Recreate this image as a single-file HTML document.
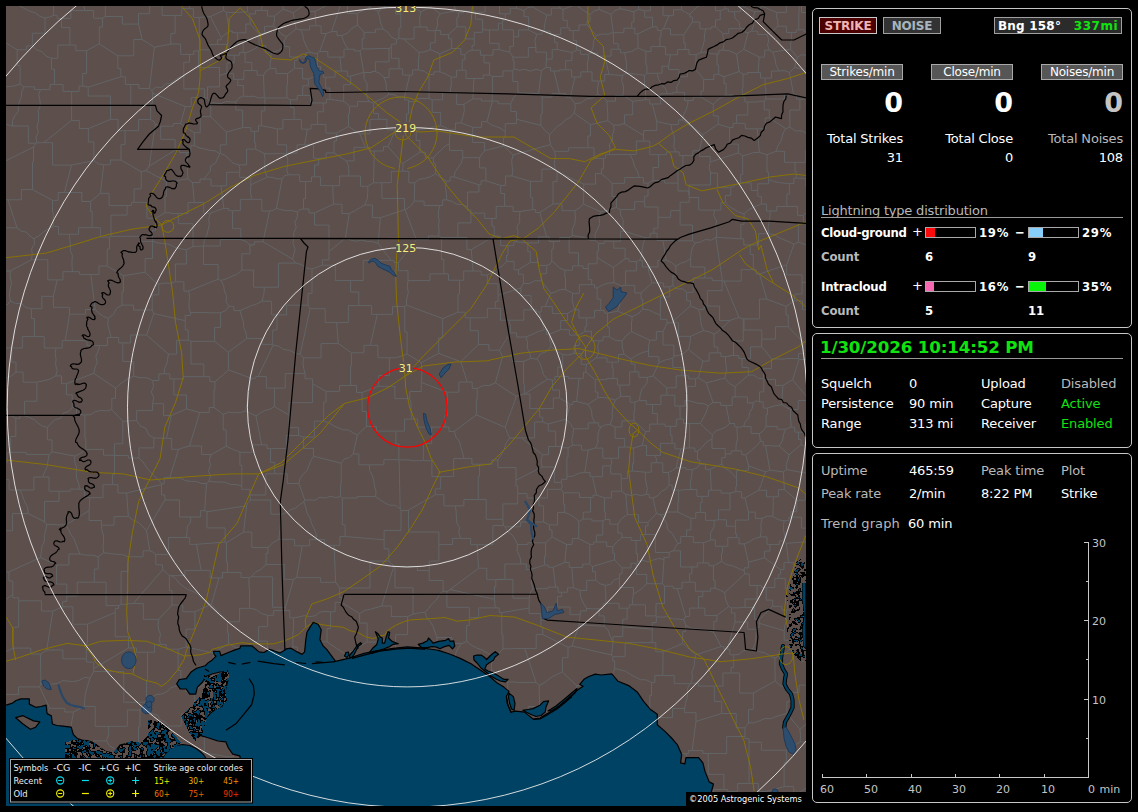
<!DOCTYPE html>
<html><head><meta charset="utf-8"><title>Lightning</title>
<style>
html,body{margin:0;padding:0;background:#000;}
body{width:1138px;height:812px;position:relative;overflow:hidden;font-family:"DejaVu Sans","Liberation Sans",sans-serif;font-size:13px;color:#fff;}
#map{position:absolute;left:6px;top:6px;width:800px;height:800px;overflow:hidden;background:#5d4f4b;}
#map svg{position:absolute;left:0;top:0;}
.panel{position:absolute;left:812px;width:318px;border:1px solid #c6c6c6;border-radius:5px;background:#000;}
.t{position:absolute;white-space:nowrap;line-height:16px;height:16px;letter-spacing:-0.15px;}
.g{color:#b9b9b9;}
.b{font-weight:bold;font-family:"DejaVu Sans Condensed","DejaVu Sans",sans-serif;}
.r{text-align:right;}
.bw{font-weight:bold;font-family:"DejaVu Sans",sans-serif;}
.btn{letter-spacing:-0.2px;position:absolute;box-sizing:border-box;border:1px solid #a9a9a9;background:#565656;color:#fff;text-align:center;font-size:13px;line-height:14px;height:16px;}
.big{position:absolute;font-weight:bold;font-size:27px;line-height:30px;text-align:right;width:82px;}
.bar{position:absolute;box-sizing:border-box;width:51px;height:11px;border:1px solid #a9a9a9;background:#000;}
.bar i{display:block;height:9px;}
</style></head><body>
<div id="map">
<svg width="800" height="800" viewBox="6 6 800 800">
<g id="counties" fill="none" stroke="#62666a" stroke-width="0.9"><path d="M0.7 41.9L6.8 43.4L11.9 46.7L17.2 49.8M5.1 86.7L10.2 86.6L15.2 85.6L20.1 84M17.2 49.8L17.2 65.5L20.1 65.5L20.1 84M32.3 45.8L26.7 45.8L26.7 49.8L17.2 49.8M32.3 45.8L32.3 33.2L45 33.2L45 18M45 18L39.7 16.2L35.3 12.7L29.7 11.3L24.8 8.7L19.8 6.2L15.5 2.4L10.4 0.3M820.6 753.6L808.6 753.6L808.6 742L800.2 742M823.6 710.2L799.9 729.2M800.2 742L800.5 735.6L799.9 729.2M51.5 58.3L51.5 69.2L54.5 69.2L54.5 84.4M51.5 58.3L46 56.2L42.1 51.7L36.6 49.7L32.3 45.8M54.5 84.4L50 84.4L50 89.6L40.5 89.6M20.1 84L24 86.8M24 86.8L34.3 86.8L34.3 89.6L40.5 89.6M226.3 132.1L242.6 127.6M226.3 132.1L210.8 116.7M242.6 127.6L242.6 110.1L235.8 110.1L235.8 102M235.8 102L230.7 101.9L225.7 101.6L220.8 103.7L215.7 103.2L210.7 102.5M210.7 102.5L210.7 110.8L210.8 110.8L210.8 116.7M220.2 153.5L220.2 144.9L226.3 144.9L226.3 132.1M220.2 153.5L225.4 155.4L229.2 159.5L233.3 163.2L238.6 164.9M254.6 131.3L250.8 131.3L250.8 127.6L242.6 127.6M254.6 131.3L254.6 143L255.7 143L255.7 149.1M255.7 149.1L246.6 149.1L246.6 164.9L238.6 164.9M314.5 212.9L309 212.9L309 209L303.5 209M314.5 212.9L333.5 204.2M332.7 185.7L333.5 204.2M332.7 185.7L320.4 185.7L320.4 176.8L314.5 176.8M314.5 176.8L311.5 176.8L311.5 181.6L305.5 181.6M305.5 181.6L305.5 198.8L303.5 198.8L303.5 209M194.3 132.7L200.2 132.7L200.2 116.7L210.8 116.7M194.3 132.7L194.3 137L194.4 137L194.4 145.7M220.2 153.5L219.7 153.6M194.4 145.7L199.2 147.9L204.5 149L209.6 150.4L215 150.8L219.7 153.6M175.1 150.1L149.2 166.2M175.1 150.1L179.5 150.1L179.5 152.6L186.7 152.6M166.3 181.4L171.7 180.6L177.2 181.1L182.4 179.4L187.9 179M166.3 181.4L161.5 178.3L156.1 176.1L151.2 173.2L146 170.7M146 170.7L149.2 166.2M186.7 152.6L187.9 179M69.3 234.2L78.6 234.2L78.6 227.7L92.1 227.7M69.3 234.2L58.5 234.2L58.5 226.5L53.2 226.5M53.2 226.5L53.2 212.2L52.5 212.2L52.5 200.3M52.5 200.3L58.2 200.3L58.2 192.5L64.5 192.5M64.5 192.5L81.9 192.5L81.9 201.5L90.6 201.5M90.6 201.5L90.6 211.5L92.1 211.5L92.1 227.7M72.5 271.7L72.1 266.4L72 261L72.4 255.6L70.3 250.3L70.4 244.9L69.8 239.6L69.3 234.2M72.5 271.7L79.4 271.7L79.4 274.4L90.9 274.4M90.9 274.4L99 274.4L99 266.1L107.2 266.1M107.2 266.1L107.2 249L109.5 249L109.5 237.1M92.1 227.7L100.3 227.7L100.3 237.1L109.5 237.1M107.2 266.1L123.4 275.7M123.4 275.7L145.1 272.2M152.5 241.3L139.3 241.3L139.3 236.3L111 236.3M152.5 241.3L152.5 258.6L145.1 258.6L145.1 272.2M109.5 237.1L111 236.3M165 212.8L170.9 212.8L170.9 213.4L178.3 213.4M165 212.8L155.6 218.2M178.3 213.4L178.3 223.7L193 223.7L193 246.6M152.6 241.2L152.6 230.2L155.6 230.2L155.6 218.2M152.6 241.2L158.2 243L164 243.5L169.8 244.5L175 247.6L180.7 248.8L186.4 249.8M186.4 249.8L193 246.6M-7.2 241L1.3 241L1.3 227.8L17 227.8M-3.7 264.2L5.4 264.2L5.4 271L10.2 271M10.2 271L31.3 259.7M31.3 259.7L32.4 254.5L31.6 249.1L34.4 244.1L34 238.7M34 238.7L29.8 236L26.3 232.1L20.9 231L17 227.8M57.2 279.9L47.8 279.9L47.8 259.7L31.3 259.7M57.2 279.9L53.4 296.3M53.4 296.3L41.9 296.3L41.9 308.7L31.4 308.7M31.4 308.7L25.9 307.5L21.4 303.6L15.5 303.4L10.5 301M10.5 301L9.3 295L10.1 289L11.5 283L10.1 277L10.2 271M72.5 271.7L63 271.7L63 279.9L57.2 279.9M53.2 226.5L48.1 229.1L43.3 232.2L38.9 235.8L34 238.7M-3.3 384.6L1.3 381.2L6.2 378.2L11.5 375.8L16 372.1M16 372.1L16 362.1L11.8 362.1L11.8 348M11.8 348L0.8 348L0.8 339.3L-6.3 339.3M-19.8 422.7L8.6 415.3M8.6 415.3L-3.3 384.6M31.4 308.7L31.4 318.6L34.4 318.6L34.4 336.6M10.5 301L7.7 304.4L3.3 305.4M34.4 336.6L22.3 336.6L22.3 348L11.8 348M24 86.8L21.8 91.4L21.5 96.7L19.4 101.4L18.5 106.4L18.1 111.7L14.7 116L12.6 120.7L12.4 126M-11 121.3L-5.3 123.3L0.6 124L6.7 124.3L12.4 126M40.5 89.6L38.7 94.8L39.9 100.2L40.4 105.6L38.1 110.8L38.7 116.2L38.4 121.5L37 126.8L38.3 132.2L36 137.4L36.9 142.8M36.9 142.8L35.7 143.2M12.4 126L28.3 126L28.3 143.2L35.7 143.2M750.2 245L750.2 254.6L753.3 254.6L753.3 269.7M750.2 245L758.6 245L758.6 233.7L768.7 233.7M786.7 264.7L759.5 274M786.7 264.7L794 244.3M759.5 274L756.2 274L756.2 269.7L753.3 269.7M768.7 233.7L774.3 234.6L778.9 237.6L784 239.8L789 241.9L794 244.3M813.5 247.6L798.3 242.1M802.1 282.3L817.3 282.3L817.3 274.1L828.3 274.1M802.1 282.3L802.1 274.8L786.7 274.8L786.7 264.7M798.3 242.1L794 244.3M467.6 207L467.6 192L478.9 192L478.9 184.8M467.6 207L462.6 204.6L456.9 204.2L452 201.4L446.7 199.9M478.9 184.8L454 176.9M446.7 199.9L446.3 193.6L445.5 187.3L446.4 181.1M454 176.9L450.2 176.9L450.2 181.1L446.4 181.1M479.5 157.7L479.5 167.9L485.9 167.9L485.9 180.8M479.5 157.7L472.9 157.7L472.9 157.7L462.8 157.7M485.9 180.8L481 180.8L481 184.8L478.9 184.8M462.8 157.7L461.2 162.8L458.4 167.3L455.3 171.7L454 176.9M439.6 205.5L442.7 205.5L442.7 199.9L446.7 199.9M439.6 205.5L424.1 205.5L424.1 201.1L414.2 201.1M414.2 201.1L414.7 182.8M414.7 182.8L419.3 179.2L425.1 178.4L430.6 176.6L435.6 173.8M435.6 173.8L446.4 181.1M194.3 132.7L189.5 129.9L185 126.8L180.6 123.5M175.1 150.1L175.1 139.3L160.7 139.3L160.7 126.2M194.4 145.7L190.8 145.7L190.8 152.6L186.7 152.6M180.6 123.5L173.2 123.5L173.2 126.2L160.7 126.2M149.2 166.2L155.4 124.2M160.7 126.2L155.4 124.2M54.5 84.4L63 84.4L63 91.4L71.7 91.4M36.9 142.8L40.9 142.8L40.9 142.7L43.8 142.7M43.8 142.7L71.6 120.4M71.6 120.4L71.6 105.2L71.7 105.2L71.7 91.4M51.5 58.3L57.8 58.3L57.8 45L69.9 45M69.9 45L75.9 45L75.9 50.7L86.6 50.7M86.6 50.7L86.6 73.4L82.7 73.4L82.7 86.1M71.7 91.4L79.1 91.4L79.1 86.1L82.7 86.1M86.6 50.7L99.3 43.8M99.3 43.8L117.8 55.8M117.8 55.8L117.8 68.4L120.8 68.4L120.8 76.8M120.8 76.8L88.2 87.1M88.2 87.1L82.7 86.1M43.8 142.7L52.6 142.7L52.6 165.1L71.5 165.1M71.5 165.1L93.9 160.6M71.6 120.4L79.3 120.4L79.3 128.6L88.3 128.6M93.9 160.6L93.9 142L88.3 142L88.3 128.6M286 154L287.8 159.1L287.7 164.4L286.7 169.7L288.3 174.8M286 154L280.6 153.3L275.2 153.8L269.8 153.8L264.3 153.6M264.3 153.6L265.1 159.5L264.5 165.5L265.1 171.4L267.2 177.1M267.2 177.1L272.3 177.3L277.2 178.9L282.2 178.7M282.2 178.7L284.6 175.7L288.3 174.8M305.5 181.6L299.7 181.6L299.7 174.8L288.3 174.8M276.4 208.5L282.2 178.7M276.4 208.5L281.6 209.8L286.8 210.7L292.2 210.6L297.4 211.9M297.4 211.9L299.9 209.5L303.5 209M286.7 153.1L297.1 153.1L297.1 144.8L304.6 144.8M286.7 153.1L286 154M314.5 176.8L314.5 165L318.7 165L318.7 158.2M318.7 158.2L313.5 158.2L313.5 144.8L304.6 144.8M269.6 211L261.8 211L261.8 199.3L251.6 199.3M269.6 211L273.2 210.3L276.4 208.5M267.2 177.1L250.8 184.9M251.6 199.3L250.5 192.1L250.8 184.9M255.7 149.1L264.3 153.6M238.6 164.9L239.9 168.4L239.7 172.2M239.7 172.2L239.7 177.4L250.8 177.4L250.8 184.9M314.5 212.9L314.5 225.1L329 225.1L329 251.6M333.5 204.2L341.9 204.2L341.9 213.5L349.3 213.5M329 251.6L345.4 238.1M345.4 238.1L349.3 213.5M332.7 185.7L339.6 185.7L339.6 176L348.7 176M367.8 186.3L360.6 186.3L360.6 176L348.7 176M367.8 186.3L367.8 192.7L367.2 199L364.7 205M349.3 213.5L354.6 210.9L359.6 207.8L364.7 205M442.7 318.6L442.7 337.7L438.7 337.7L438.7 353.4M442.7 318.6L406.3 305M438.7 353.4L421.2 362.6M406.3 305L404.8 306.6M404.8 306.6L404.8 331.9L407.1 331.9L407.1 354M421.2 362.6L407.1 354M550.3 144.6L513.2 155M550.3 144.6L554.7 151.3M530.4 181.3L541.9 181.3L541.9 169.1L555.3 169.1M530.4 181.3L512 176M513.2 155L511.7 160.2L512 165.5L512.9 170.8L512 176M554.7 151.3L555.4 157.2L554.3 163.2L555.3 169.1M88.5 812.8L89.6 800M89.6 800L76.6 800L76.6 776.7L48.7 776.7M41.9 812.4L41.9 802.5L38.7 802.5L38.7 794.8M38.7 794.8L48.7 776.7M740.9 238.8L743.8 238.8L743.8 245L750.2 245M740.9 238.8L716.2 237.3M724 281.1L722.4 280.7M724 281.1L741.2 281.1L741.2 269.7L753.3 269.7M722.4 280.7L715.9 237.5M716.2 237.3L715.9 237.5M704.8 278L704.8 267L690.7 267L690.7 258.4M704.8 278L712.2 278L712.2 280.7L722.1 280.7M722.1 280.7L722.4 280.7M690.7 258.4L691.2 252.9L692.3 247.7L695.3 242.9M715.9 237.5L711.1 240.2L705.4 239.5L700.5 242L695.3 242.9M100.4 193.3L109.1 193.3L109.1 205.4L127.1 205.4M100.4 193.3L103.7 164.8M103.7 164.8L110.3 164.8L110.3 160L121 160M121 160L141.2 171.8M141.2 171.8L141.2 188.9L134.1 188.9L134.1 202.3M134.1 202.3L131.6 202.3L131.6 205.4L127.1 205.4M90.6 201.5L100.4 193.3M111 236.3L111 215.1L127.1 215.1L127.1 205.4M64.5 192.5L71.5 165.1M93.9 160.6L98.3 163.9L103.7 164.8M165 212.8L165 196.6L166.3 196.6L166.3 181.4M155.6 218.2L146.9 218.2L146.9 202.3L134.1 202.3M146 170.7L141.2 171.8M152.6 241.2L152.5 241.3M145.1 272.2L149.4 276.5L153.7 280.7L158.8 284.2M186.4 249.8L186.4 264L175.4 264L175.4 281.8M158.8 284.2L164.2 283L169.9 283.3L175.4 281.8M8.6 415.3L12.4 416.3L15.8 418.3M36.9 382.2L23.1 382.2L23.1 372.1L16 372.1M36.9 382.2L36.9 401.2L24.6 401.2L24.6 415.8M15.8 418.3L19.9 418.3L19.9 415.8L24.6 415.8M99.3 43.8L99.3 27.1L102.4 27.1L102.4 18.2M142.1 39.5L133.8 39.5L133.8 55.8L117.8 55.8M142.1 39.5L138.5 24.1M102.4 18.2L105.3 16.5M138.5 24.1L122.4 24.1L122.4 16.5L105.3 16.5M84.6 10.5L81.1 -21M84.6 10.5L70.9 10.5L70.9 18.4L61.6 18.4M53.6 15.3L53.6 -8.1L54.7 -8.1L54.7 -18.5M53.6 15.3L57.1 15.3L57.1 18.4L61.6 18.4M102.4 18.2L93.6 18.2L93.6 10.5L84.6 10.5M105.3 16.5L105.3 -0.3L118.1 -0.3L118.1 -15.6M69.9 45L69.9 27.5L61.6 27.5L61.6 18.4M45 18L49.5 17.1L53.6 15.3M743.2 318.9L743.2 341L733.5 341L733.5 355.5M743.2 318.9L744 318.9M744 318.9L744 330L761.8 330L761.8 339.1M742 358.4L738.7 358.4L738.7 355.5L733.5 355.5M742 358.4L750.5 358.4L750.5 346.8L761.5 346.8M761.5 346.8L761.8 339.1M766.8 299.1L759.4 299.1L759.4 318.9L744 318.9M766.8 299.1L759.5 274M739 317.6L724 281.1M739 317.6L743.2 318.9M786 306.4L786 315.1L788.2 315.1L788.2 326.7M786 306.4L794.7 300.7M794.7 300.7L802.5 300.7L802.5 309.7L818.4 309.7M788.2 326.7L803.2 342.2M803.2 342.2L807.6 342.2L807.6 336.4L817.2 336.4M766.8 299.1L786 306.4M761.8 339.1L775.4 339.1L775.4 326.7L788.2 326.7M802.1 282.3L802.1 294.1L794.7 294.1L794.7 300.7M739 317.6L734.3 318.9L729.7 320.6M722.1 280.7L722.1 290.7L707.3 290.7L707.3 306.1M729.7 320.6L719.6 320.6L719.6 306.1L707.3 306.1M748.3 375.1L748.3 367.4L742 367.4L742 358.4M748.3 375.1L753.7 375.1L758.3 378.3L763.5 378.8M761.5 346.8L765.1 350.6L768.3 354.8L771.5 359M763.5 378.8L763.5 368.6L771.5 368.6L771.5 359M803.2 342.2L803.2 353.4L798.6 353.4L798.6 358.6M771.5 359L785.7 359L785.7 358.6L798.6 358.6M786.8 206.4L797.6 206.4L797.6 215.3L803.3 215.3M786.8 206.4L786.8 194.2L789.3 194.2L789.3 183.6M817.6 186.4L805.8 186.4L805.8 178.2L796.2 178.2M811.8 211L807 212.1L803.3 215.3M796.2 178.2L793.9 178.2L793.9 183.6L789.3 183.6M770.3 211L776.7 211L776.7 206.4L786.8 206.4M770.3 211L769.9 216.7L769 222.3L768 228L768.7 233.7M798.3 242.1L798.3 223.8L803.3 223.8L803.3 215.3M740.9 238.8L740.9 224.3L744.1 224.3L744.1 213.8M770.3 211L766.4 211L766.4 204L761.3 204M744.1 213.8L749.2 209.4L755.1 206.5L761.3 204M817.5 778.7L812.7 781.7L809.3 786.4L804.5 789.2L799.8 792.2M799.8 792.2L799.8 810.4L808.5 810.4L808.5 818.7M818.6 685.1L818.6 661.6L802.1 661.6L802.1 651.2M819.4 641.2L809.3 641.2L809.3 651.2L802.1 651.2M513.2 155L503.4 145.9M479.5 157.7L484.6 150.7M512 176L505.5 176L505.5 185.5L500.7 185.5M500.7 185.5L485.9 180.8M484.6 150.7L503.4 145.9M462.8 157.7L462.8 150.4L449.4 150.4L449.4 143.9M435.6 173.8L435.6 163.7L433.4 163.7L433.4 157.9M433.4 157.9L436.9 153.9L440.9 150.4L444.5 146.4L449.4 143.9M207.5 98.3L204.6 97.5M207.5 98.3L210.7 102.5M180.6 123.5L185.3 106.6M204.6 97.5L191.2 97.5L191.2 106.6L185.3 106.6M138.5 24.1L138.5 13.7L149.7 13.7L149.7 5.8M348.7 176L348.8 170.8L348.3 165.8L346.3 160.9M318.7 158.2L326.2 158.2L326.2 152.9L334 152.9M346.3 160.9L334 152.9M304.6 144.8L307.4 129.1M334 152.9L334 141L336.4 141L336.4 133.1M336.4 133.1L325.9 133.1L325.9 124.4L317.4 124.4M307.4 129.1L311.1 129.1L311.1 124.4L317.4 124.4M227 73.3L233.7 73.3L233.7 79.3L237.8 79.3M227 73.3L219.5 75.5M207.5 98.3L207.5 86.9L219.5 86.9L219.5 75.5M235.8 102L238.7 98L243.3 96.1M243.3 96.1L243.3 85.4L237.8 85.4L237.8 79.3M210.3 213.2L223.8 208.4M210.3 213.2L203.7 213.2L203.7 202.5L194.3 202.5M223.8 208.4L221 185.9M221 185.9L211 185.9L211 179.1L203.8 179.1M194.3 202.5L192.5 182.5M203.8 179.1L200 179.1L200 182.5L192.5 182.5M203.6 246L220.2 246L220.2 239.6L240.8 239.6M203.6 246L204.3 240.5L206.8 235.3L208.1 229.8L209.3 224.4L208.7 218.6L210.3 213.2M240.8 239.6L240.8 228.7L232.6 228.7L232.6 210.7M232.6 210.7L228.7 210.7L228.7 208.4L223.8 208.4M178.3 213.4L188.1 213.4L188.1 202.5L194.3 202.5M203.6 246L203.4 246.2M203.4 246.2L196.5 246.2L196.5 246.6L193 246.6M232.6 210.7L240.3 210.7L240.3 199.3L251.6 199.3M239.7 172.2L226.7 172.2L226.7 185.9L221 185.9M219.7 153.6L217.6 158.2L215.6 162.9L210.9 165.8L210.1 171.3L206.7 175.1L203.8 179.1M187.9 179L192.5 182.5M380.4 217.7L378.1 243.5M380.4 217.7L404.6 209.7M405.1 209.8L404.6 209.7M405.1 209.8L416.4 239.7M416.4 239.7L398.5 262.6M378.1 243.5L391.1 260.3M391.1 260.3L394.1 260.3L394.1 262.6L398.5 262.6M345.4 238.1L350.7 240.1L356.1 241.2L361.9 240.1L367.3 241.4L372.8 241.7L378.1 243.5M364.7 205L372.4 205L372.4 217.7L380.4 217.7M381.9 182.7L377.7 182.9L373.5 182.7M381.9 182.7L381.9 198.4L404.6 198.4L404.6 209.7M367.8 186.3L373.5 182.7M414.2 201.1L410.5 206.3L405.1 209.8M414.7 182.8L408.8 182.8L408.8 171.2L402.5 171.2M402.5 171.2L391.3 171.2L391.3 182.7L381.9 182.7M439.6 205.5L438.6 210.6L438.4 215.7L439.2 220.8L438.6 225.9L439.1 231L438.6 236M438.6 236L428.5 236L428.5 239.7L416.4 239.7M329 251.6L329 259.9L322.3 259.9L322.3 265.2M322.3 265.2L335.3 265.2L335.3 280.5L350.6 280.5M350.6 280.5L363.2 280.5L363.2 260.3L391.1 260.3M438.6 236L441.5 237.5M408 280.6L408 270.7L398.5 270.7L398.5 262.6M408 280.6L429.9 280.6L429.9 273.9L443.8 273.9M441.5 237.5L441.5 259.5L443.8 259.5L443.8 273.9M442.7 318.6L458 312.2M408 280.6L407.3 286.7L408.3 292.9L406.7 298.9L406.3 305M458 312.2L458 294.2L459.5 294.2L459.5 280.2M443.8 273.9L448.5 273.9L448.5 280.2L459.5 280.2M350.6 280.5L350.6 292L358.8 292L358.8 305.6M404.8 306.6L392.5 306.6L392.5 314.3L377.3 314.3M358.8 305.6L371.6 305.6L371.6 314.3L377.3 314.3M460.8 361.7L438.7 353.4M460.8 361.7L467.2 382.1M467.2 382.1L458.9 382.1L458.9 392.2L447.2 392.2M421.2 362.6L421.8 369.2L421.9 375.8L421.2 382.4M447.2 392.2L421.2 382.4M190.3 312.6L189 307.3L189.1 301.9L189.7 296.4L188.6 291.1M190.3 312.6L208.4 312.6L208.4 312.8L220.6 312.8M188.6 291.1L218.1 279.2M220.6 312.8L225.6 310.6L228.9 306.3M228.9 306.3L226 301.6L226.5 295.8L224.4 290.8L223.6 285.4L220.9 280.5M218.1 279.2L220.9 280.5M203.4 246.2L203.4 264.5L218.1 264.5L218.1 279.2M175.4 281.8L183.9 281.8L183.9 291.1L188.6 291.1M241.9 270.1L253.6 270.1L253.6 287.2L264.4 287.2M241.9 270.1L241.9 253.8L250 253.8L250 244.9M263 241.8L254.4 241.8L254.4 244.9L250 244.9M263 241.8L292.6 259.1M264.4 287.2L278.5 287.2L278.5 263.1L295.8 263.1M292.6 259.1L295.8 263.1M240.8 239.6L245.9 241.4L250 244.9M220.9 280.5L226.6 278.8L231.9 276.3L237.3 274L241.9 270.1M269.6 211L263 241.8M297.4 211.9L297.3 217.2L294.9 222.3L296.2 227.7L293.8 232.8L293.9 238.1L292.9 243.3L295.1 248.8L293.9 254L292.6 259.1M322.3 265.2L312 269.1M312 269.1L306.3 268L301.4 264.5L295.8 263.1M407.1 354L401.3 356.1L395.6 357.7L389.4 357.8M377.3 314.3L370.4 345.3M389.4 357.8L377.9 357.8L377.9 345.3L370.4 345.3M460.8 361.7L478.3 344.5M458 312.2L465.2 312.2L465.2 317.8L470.2 317.8M478.3 344.5L478.3 330.7L470.2 330.7L470.2 317.8M664 559.4L658.6 558.5L653.4 560L648.2 561.8L642.7 560.4L637.5 561.7M664 559.4L662.4 583.8M646.7 583.7L662.4 583.8M646.7 583.7L646.7 574.4L636.3 574.4L636.3 563.3M636.3 563.3L637.5 561.7M619.4 578.3L619.4 573.8L622.1 573.8L622.1 567.9M619.4 578.3L619.4 587.5L633.4 587.5L633.4 594.1M622.1 567.9L631 567.9L631 563.3L636.3 563.3M633.4 594.1L638.2 591.1L642.7 587.8L646.7 583.7M595 422.9L588.2 422.9L588.2 428.8L573.5 428.8M595 422.9L598.7 422.9L598.7 426.8L601.2 426.8M588.3 450.1L595.1 448.1M588.3 450.1L581.6 450.1L581.6 445.2L572.5 445.2M572.5 445.2L571.8 439.7L573 434.2L573.5 428.8M595.1 448.1L597.9 443.1L597.9 437.4L598.3 431.7L601.2 426.8M588 404.4L597.9 397.8M588 404.4L591.5 410.1L592.1 416.9L595 422.9M615.3 400.1L609.6 398.4L603.9 397.3L597.9 397.8M615.3 400.1L613 406L612.1 412.2L612.4 418.6L610 424.5M610 424.5L605.4 424.8L601.2 426.8M2.3 694.4L18.5 694.4L18.5 686.9L39.5 686.9M39.5 686.9L49.8 708.3M4 722.1L9.4 723.3L14.7 724.2L20.2 724.6L25.7 724L31.2 724.2L36.4 726.1M36.4 726.1L49.8 708.3M-19.9 616.9L12.8 594.6M18.7 600.8L18.7 597.8L12.8 597.8L12.8 594.6M18.7 600.8L18.7 627.2L13.4 627.2L13.4 648.1M13.4 648.1L5.7 651.7M2.3 566.7L4.9 566.7L4.9 571.9L8.9 571.9M8.9 571.9L8.9 581L12.8 581L12.8 594.6M8.9 571.9L40.6 557.5M66.8 596.1L66.8 601.5L62.6 601.5L62.6 606.8M66.8 596.1L66.8 584.1L56.6 584.1L56.6 565M40.6 557.5L56.6 565M52.9 611.1L62.6 606.8M52.9 611.1L41.4 611.1L41.4 600.8L18.7 600.8M298.8 770.4L325.5 787.5M298.8 770.4L298.7 764.6M298.7 764.6L303 760.4L308.6 757.7L313.2 753.9L317.1 749.2M317.1 749.2L329.7 749.2L329.7 753.9L339.4 753.9M339.4 753.9L338.7 784M338.7 784L331.2 784L331.2 787.5L325.5 787.5M287.7 822.2L283.4 785.3M283.4 785.3L286.3 780.6L290.9 777.6L294.6 773.7L298.8 770.4M315.1 816.5L315.1 806L325.5 806L325.5 787.5M341.9 785.2L341.9 804.4L354.4 804.4L354.4 817.9M341.9 785.2L338.7 784M131.9 820.7L131.9 801.4L134.5 801.4L134.5 789.1M89.6 800L89.6 796.3L95.5 796.3L95.5 788.6M95.5 788.6L105.6 788.6L105.6 779.1L124.2 779.1M134.5 789.1L130.6 789.1L130.6 779.1L124.2 779.1M168.6 818.3L167.1 813.1L167.5 807.8L165.4 802.7L164.5 797.5L165.6 792.1L164.2 786.9M134.5 789.1L140.5 788.9L146.3 786.7L152.4 788.2L158.3 787.6L164.2 786.9M283.4 785.3L272.2 785.3L272.2 781.2L259.1 781.2M246.7 817.3L246.7 809.2L242.5 809.2L242.5 791.2M259.1 781.2L254.3 785.7L247.9 787.7L242.5 791.2M658 217.3L670.7 217.3L670.7 210.6L680.1 210.6M658 217.3L658 228.2L653.9 228.2L653.9 233.2M680.1 210.6L680.1 225L692.5 225L692.5 240.8M692.5 240.8L678.8 240.8L678.8 240.6L663 240.6M653.9 233.2L657.1 233.2L657.1 240.6L663 240.6M678 183.1L678 168.2L682.9 168.2L682.9 155.6M678 183.1L664.7 183.1L664.7 180.4L653 180.4M653 180.4L653 167.5L658.6 167.5L658.6 154.7M658.6 154.7L666.7 154.7L666.7 151.9L676 151.9M676 151.9L679.2 151.9L679.2 155.6L682.9 155.6M648 183.1L643.4 183.1L643.4 177.6L639 177.6M648 183.1L653 180.4M639 177.6L637.6 171.5L634.4 166L632.9 160L629.8 154.5M658.6 154.7L649.8 154.7L649.8 141.1L643.3 141.1M629.8 154.5L636.3 154.5L636.3 141.1L643.3 141.1M710.5 173L717.4 173L717.4 187.7L730.8 187.7M710.5 173L710.5 185L689 185L689 195.1M689 195.1L689.3 197.5M689.3 197.5L698.7 197.5L698.7 210.1L714.5 210.1M714.5 210.1L720.9 210.1L720.9 202.7L725.3 202.7M725.3 202.7L725.3 195.4L730.8 195.4L730.8 187.7M658 217.3L658 207L644.7 207L644.7 201.7M644.7 201.7L644.7 196.1L648 196.1L648 183.1M680.1 210.6L680.1 202.2L689.3 202.2L689.3 197.5M678 183.1L678 191L689 191L689 195.1M716.2 237.3L716.9 231.8L715.6 226.4L716.6 220.9L713.7 215.6L714.5 210.1M695.3 242.9L692.5 240.8M744.1 213.8L738.8 212.1L734 209.3L729.3 206.6L725.3 202.7M682.9 155.6L692.7 155.6L692.7 150.8L699.3 150.8M710.5 173L709.2 167.6L710.2 162.1M710.2 162.1L710.2 156.5L699.3 156.5L699.3 150.8M90.9 274.4L95.1 309.5M53.4 296.3L53.4 307.3L69.5 307.3L69.5 314.2M95.1 309.5L85.6 309.5L85.6 314.2L69.5 314.2M123.4 275.7L123.4 291.9L122 291.9L122 305.1M158.8 284.2L158.8 294.8L152.2 294.8L152.2 310M152.2 310L133.5 310L133.5 305.1L122 305.1M95.1 309.5L98.9 313.2L103.2 316.3L108.3 318.2M122 305.1L116.5 308.5L113.4 314.4L108.3 318.2M161.7 483.9L164.2 483.9L164.2 477.4L169.8 477.4M161.7 483.9L158.1 479.4L153.8 475.6L149.9 471.4L146.3 466.9L143.2 462.1L139 458.1M169.8 477.4L178.5 449.3M178.5 449.3L171.7 449.3L171.7 438.4L166.5 438.4M166.5 438.4L161.6 438.4L161.6 438L153.9 438M153.9 438L153.9 447.9L139 447.9L139 458.1M33.5 147L1 163.1M33.5 147L33.5 161.9L32.5 161.9L32.5 189.6M32.5 189.6L21.4 189.6L21.4 199.8L7.9 199.8M7.9 199.8L3.1 199.2L-1 196.6M35.7 143.2L33.5 147M52.5 200.3L32.5 189.6M17 227.8L7.9 199.8M658.9 362.6L658.9 356.7L648.5 356.7L648.5 350.9M658.9 362.6L653.1 375.9M647.5 377.3L653.1 375.9M647.5 377.3L638.9 377.3L638.9 371.9L635 371.9M648.5 350.9L642.3 352.6L636.5 355.3L631.2 359M631.2 359L631.2 363.9L635 363.9L635 371.9M634.8 402.1L630.1 402.1L630.1 396.4L620.6 396.4M634.8 402.1L639.4 400.6M620 385.1L620 392.1L620.6 392.1L620.6 396.4M620 385.1L629.7 385.1L629.7 371.9L635 371.9M639.4 400.6L640.3 394.4L642.2 388.5L646.8 383.6L647.5 377.3M673.9 356.2L672.8 358.2M673.9 356.2L673.9 345.1L663 345.1L663 331.5M672.8 358.2L665.7 359.8L658.9 362.6M648.5 350.9L648.6 345.5L649.8 340.2M663 331.5L656.3 331.5L656.3 340.2L649.8 340.2M704.8 278L693.2 278L693.2 292.3L686.7 292.3M690.7 258.4L686.1 261.6L680.7 263.2L675.9 266.1M686.7 292.3L682.6 288.9L677 288.9L672.9 285.7M672.9 285.7L672.9 275.8L675.9 275.8L675.9 266.1M663 240.6L666.1 260.2M675.9 266.1L671.4 262.5L666.1 260.2M763.8 379.4L775.5 379.4L775.5 385.4L782.9 385.4M763.8 379.4L763.8 391.9L759.4 391.9L759.4 401.9M782.9 385.4L781.7 404.8M781.7 404.8L774.4 405.8L767.4 408.1M759.4 401.9L763.2 401.9L763.2 408.1L767.4 408.1M798.6 358.6L798.9 359.5M822.9 374.3L813 374.3L813 359.5L798.9 359.5M763.5 378.8L763.8 379.4M782.9 385.4L792.6 379.8M798.9 359.5L792.6 379.8M796.2 178.2L796.2 171.4L795 171.4L795 162.3M795 162.3L805.3 162.3L805.3 150.5L811.8 150.5M740.7 182.9L751.2 182.9L751.2 190.4L757.8 190.4M740.7 182.9L740.7 174.6L742.7 174.6L742.7 155.6M742.7 155.6L748.3 154.5L753.6 152.5L759.4 152.4M768.6 179.6L768.6 172.1L767 172.1L767 154.7M768.6 179.6L768.6 183.8L757.8 183.8L757.8 190.4M759.4 152.4L767 154.7M761.3 204L761.3 196.3L757.8 196.3L757.8 190.4M730.8 187.7L735.7 185L740.7 182.9M710.2 162.1L738.3 152.9M738.3 152.9L742.7 155.6M789.3 183.6L784.1 183.2L778.8 182.5L773.7 181.3L768.6 179.6M795 162.3L784.6 162.3L784.6 151.3L776.1 151.3M776.1 151.3L767 154.7M445.8 678.9L447.5 673.6L451.4 669.3L452.9 663.9L454.5 658.5L455.9 653L458.2 648L461.8 643.5M445.8 678.9L459 678.9L459 687.4L477.6 687.4M477.6 687.4L477.6 679.5L491.5 679.5L491.5 669.3M466.7 641.6L461.8 643.5M466.7 641.6L471.4 645.3L476.7 647.9L482.2 650L487.3 653L492.5 655.7M492.5 655.7L492.5 663L491.5 663L491.5 669.3M434.6 683.4L431.4 679L431.7 673.3L429.8 668.5L427.7 663.7L424.7 659.3L423.1 654.4M434.6 683.4L439.3 683.4L439.3 678.9L445.8 678.9M436.9 637.5L436.9 647.4L423.1 647.4L423.1 654.4M436.9 637.5L452.1 637.5L452.1 643.5L461.8 643.5M443.2 717.4L443.2 698.4L434.5 698.4L434.5 683.5M443.2 717.4L447.5 719.6M447.5 719.6L458.4 719.6L458.4 714.4L481 714.4M481 714.4L481 702.8L477.6 702.8L477.6 687.4M434.6 683.4L434.5 683.5M507.8 682L507.8 704.9L509.1 704.9L509.1 716M507.8 682L517.2 682L517.2 682.4L536 682.4M536 682.4L539.2 685.4M539.2 685.4L539.5 706.6M539.5 706.6L528.2 706.6L528.2 717.2L516.4 717.2M509.1 716L516.4 717.2M487.8 720.2L485.1 720.2L485.1 714.4L481 714.4M487.8 720.2L493.4 720.4L498.2 716.9L504 718.1L509.1 716M491.5 669.3L507.8 682M503 648.8L513.2 648.8L513.2 648.5L524.7 648.5M503 648.8L498.6 653.5L492.5 655.7M524.7 648.5L536 682.4M562.4 672L557.4 674.1L552.7 676.6L548.2 679.6L544 683L539.2 685.4M562.4 672L562.4 657.7L568 657.7L568 647.3M568 647.3L542.8 634.5M524.7 648.5L536.2 648.5L536.2 634.5L542.8 634.5M341.9 785.2L355.6 785.2L355.6 780.2L364.2 780.2M349.7 744.1L344.8 744.1L344.8 753.9L339.4 753.9M349.7 744.1L355.1 744.1L355.1 755.8L364.9 755.8M364.2 780.2L364.7 774.1L366 768.1L364.6 761.9L364.9 755.8M400.3 709.5L410 709.5L410 726.9L422.8 726.9M400.3 709.5L395.5 711.7L390.3 713.2L385.5 715.3L380.6 717.5M422.8 726.9L417 746.1M417 746.1L393.5 750.6M391.7 749.1L393.5 750.6M391.7 749.1L391.7 736.1L380.4 736.1L380.4 717.9M380.6 717.5L380.4 717.9M443.2 717.4L429.4 717.4L429.4 726.9L422.8 726.9M410.1 689.6L414.9 688.1L419.5 685.7L425 686.9L430 686.1L434.5 683.5M410.1 689.6L400.3 709.5M447.5 719.6L451.8 751.3M435 764.3L441.6 764.3L441.6 751.3L451.8 751.3M435 764.3L417 746.1M349.7 744.1L351.3 726.1M351.3 726.1L355.8 723.4L361.1 723.9L365.9 722.3L371.1 722L375.4 718.7L380.4 717.9M364.9 755.8L376.2 755.8L376.2 749.1L391.7 749.1M800.2 742L786.3 750.2M799.8 792.2L793.7 792.2L793.7 786.6L784.1 786.6M784.1 786.6L784.1 762.3L786.3 762.3L786.3 750.2M799.9 729.2L786.9 713.6M818.6 685.1L799.1 685.1L799.1 692.4L790.2 692.4M790.2 692.4L790.2 701.7L786.9 701.7L786.9 713.6M669.2 552.4L669.2 557.3L664 557.3L664 559.4M669.2 552.4L655.3 552.4L655.3 534.5L645.5 534.5M637.5 561.7L637.5 553.5L636.1 553.5L636.1 540.5M636.1 540.5L640.7 540.5L640.7 534.5L645.5 534.5M716.9 615.6L722.7 611.1L728.6 606.6M716.9 615.6L704.9 615.6L704.9 608.1L698.4 608.1M728.6 606.6L725.7 599.9L724.7 592.6M698.4 608.1L698.4 596.6L702.8 596.6L702.8 591.2M702.8 591.2L710.5 591.2L710.5 588.2L715 588.2M724.7 592.6L720 590.1L715 588.2M703.3 562.9L697.3 562.9L697.3 567L691.9 567M703.3 562.9L708.9 562.9L708.9 565.8L713.4 565.8M691.9 567L691.9 573.7L689.7 573.7L689.7 582.2M702.8 591.2L695.3 591.2L695.3 582.2L689.7 582.2M715 588.2L715 580.4L713.4 580.4L713.4 565.8M790.7 648.4L790.4 645.8M790.7 648.4L786 652.5L780.3 655.1L774.9 658.1M790.4 645.8L790.4 640.2L784.2 640.2L784.2 630.7M756.5 629.2L756.5 627.4L759.2 627.4L759.2 623.3M756.5 629.2L756 635.7L755.5 642.2L753.2 648.4M784.2 630.7L759.2 623.3M753.2 648.4L758.3 651.5L764.3 652.6L769.5 655.6L774.9 658.1M802.1 651.2L797.2 651.2L797.2 648.4L790.7 648.4M790.2 692.4L785.9 687.6L779.8 685.3L775.2 681M774.9 658.1L775.2 681M698.4 608.1L689.7 608.1L689.7 616.4L685.6 616.4M689.7 582.2L682.1 582.2L682.1 588.4L677.2 588.4M685.6 616.4L677.2 588.4M669.2 552.4L673.4 550.8M673.4 550.8L680.5 550.8L680.5 567L691.9 567M662.4 583.8L664.5 586.2M664.5 586.2L673.2 586.2L673.2 588.4L677.2 588.4M39.5 686.9L40.8 684.2M13.4 648.1L30.8 648.1L30.8 654.1L40.6 654.1M40.8 684.2L40.8 671.7L40.6 671.7L40.6 654.1M52.9 611.1L46.7 650M40.6 654.1L46.7 650M557.2 49.5L552.2 49.5L552.2 59.1L546.4 59.1M557.2 49.5L557.2 42.3L554.7 42.3L554.7 34.5M546.4 59.1L546.4 52.1L535.9 52.1L535.9 47.5M535.9 47.5L534.9 40.8L536.8 34.2M554.7 34.5L550.3 34.5L550.3 31.1L544.2 31.1M536.8 34.2L541.9 34.2L541.9 31.1L544.2 31.1M546.1 67.4L546.1 62L546.4 62L546.4 59.1M546.1 67.4L541.5 70.7M541.5 70.7L536.1 69.2L530.4 71.2L525 69.3L519.4 70.3L514 68.8M513 57.2L513 60.7L514 60.7L514 68.8M513 57.2L528.3 57.2L528.3 47.5L535.9 47.5M549.5 134.6L544.8 130.4L540.9 125.4M549.5 134.6L553.4 130.8L557 126.6L561.8 123.8L565.5 119.8L570.6 117.3L574.1 113M574.1 113L575.3 108.5L575 103.8M575 103.8L570.3 97.2M559.6 93.6L565.8 93.6L565.8 97.2L570.3 97.2M559.6 93.6L551.9 93.6L551.9 97.1L542.2 97.1M542.2 97.1L542.2 114.2L540.9 114.2L540.9 125.4M546.1 67.4L550.6 67.4L550.6 71L553.9 71M541.5 70.7L538.6 93.5M553.9 71L559.6 93.6M542.2 97.1L538.6 93.5M550.3 144.6L550.3 141.1L549.5 141.1L549.5 134.6M505.2 131.8L505.2 137.6L503.4 137.6L503.4 145.9M505.2 131.8L505.2 123.6L516.4 123.6L516.4 119.2M540.9 125.4L516.4 119.2M514 68.8L512.8 70.9M538.6 93.5L517.9 92.8M512.8 70.9L512.8 81.5L517.9 81.5L517.9 92.8M516.4 119.2L516.4 111.4L510.8 111.4L510.8 103.8M510.8 103.8L513.5 97.7L517.9 92.8M402.5 171.2L403.1 167.4L402.8 163.6M433.4 157.9L425.4 157.9L425.4 152.2L419.9 152.2M402.8 163.6L419.9 152.2M449.4 143.9L449.4 137.6L449.9 137.6L449.9 129.8M449.9 129.8L445.5 127.3L440.7 125.7M440.7 125.7L416.2 130.3M419.9 152.2L419.9 140.4L416.2 140.4L416.2 130.3M705.8 1.7L715.4 1.7L715.4 10.7L720.2 10.7M720.2 10.7L724.8 8.9M729.2 -10.8L729.2 1L724.8 1L724.8 8.9M743.4 6.7L740.3 6.7L740.3 11.7L734.4 11.7M743.4 6.7L744.4 -10.4M724.8 8.9L728.4 8.9L728.4 11.7L734.4 11.7M763.4 6.8L763.4 -3.8L760.4 -3.8L760.4 -9M763.4 6.8L760.6 6.8L760.6 11.6L754.9 11.6M754.9 11.6L749 9.5L743.4 6.7M152.5 93.2L151.9 90.5M152.5 93.2L152.5 103.3L150.7 103.3L150.7 119.5M130.8 84.5L138.9 84.5L138.9 88.4L149.5 88.4M130.8 84.5L130.8 105.6L110.5 105.6L110.5 115.7M149.5 88.4L151.9 90.5M150.7 119.5L138.6 119.5L138.6 130.7L125 130.7M125 130.7L118 130.7L118 119.3L110.8 119.3M110.5 115.7L110.8 119.3M204.6 97.5L204.6 88.9L183.8 88.9L183.8 75.8M185.3 106.6L152.5 93.2M183.8 75.8L178.9 77.2L174.8 80.4L170.7 83.3L165.5 84.1L161.6 87.6L155.8 87.1L151.9 90.5M155.4 124.2L153.6 121.3L150.7 119.5M154.4 47.2L149.5 88.4M154.4 47.2L148.3 43.3L142.1 39.5M120.8 76.8L125.3 76.8L125.3 84.5L130.8 84.5M88.2 87.1L88.2 96L110.5 96L110.5 115.7M121 160L121 144.7L125 144.7L125 130.7M88.3 128.6L110.8 119.3M199.2 17.4L193.4 17.4L193.4 8.7L189.1 8.7M199.2 17.4L199.5 49.8M189.1 8.7L181.8 8.7L181.8 15.4L175.1 15.4M175.1 15.4L175.1 33.6L170.8 33.6L170.8 44M170.8 44L180.7 44L180.7 54.4L189.5 54.4M189.5 54.4L193.7 54.4L193.7 51L198.5 51M199.5 49.8L198.5 51M210.4 16.6L199.2 17.4M210.4 16.6L223.6 10.5M223.6 10.5L222.1 -8.2M191.8 -9.8L190.9 -3.6L190.1 2.5L189.1 8.7M221.2 37.6L221.2 39.8L217.5 39.8L217.5 44.4M221.2 37.6L210.4 16.6M217.5 44.4L209.8 44.4L209.8 49.8L199.5 49.8M149.7 5.8L162.1 5.8L162.1 15.4L175.1 15.4M154.4 47.2L170.8 44M183.8 75.8L183.8 62.2L189.5 62.2L189.5 54.4M219.5 75.5L219.5 67.5L198.5 67.5L198.5 51M227 73.3L227 62.9L234.2 62.9L234.2 55.2M234.2 55.2L227.2 55.2L227.2 44.4L217.5 44.4M457.9 237.4L466.9 237.4L466.9 249.6L471.3 249.6M457.9 237.4L457.9 222.9L470.9 222.9L470.9 213.1M471.3 249.6L494.2 236.1M470.9 213.1L484.8 213.1L484.8 218.5L491.9 218.5M491.9 218.5L491.9 226L494.2 226L494.2 236.1M441.5 237.5L452.8 237.5L452.8 237.4L457.9 237.4M473 271L463.7 271L463.7 280.2L459.5 280.2M473 271L471.3 249.6M467.6 207L467.6 209.8L470.9 209.8L470.9 213.1M500.7 185.5L500.7 193.5L504.6 193.5L504.6 206.3M504.6 206.3L496.2 206.3L496.2 218.5L491.9 218.5M421.2 382.4L421.2 391.5L409.8 391.5L409.8 398.7M389.4 357.8L389.4 375.5L378.7 375.5L378.7 386.3M378.7 386.3L394.9 386.3L394.9 398.7L409.8 398.7M498.1 295.4L520.9 288M498.1 295.4L498.1 301.4L495.3 301.4L495.3 308.3M495.3 308.3L500.4 308.3L500.4 320.2L508.8 320.2M508.8 320.2L523.8 320.2L523.8 309.8L531.1 309.8M520.9 288L520.9 295.7L531.1 295.7L531.1 309.8M473 271L481.2 271L481.2 275L487.3 275M487.3 275L487.3 283.7L498.1 283.7L498.1 295.4M470.2 317.8L487.3 317.8L487.3 308.3L495.3 308.3M487.3 275L492.7 272.4L497.3 268.7L502.6 265.9L506.6 261.4M494.2 236.1L500.7 236.1L500.7 245.7L508 245.7M506.6 261.4L506.6 255.3L508 255.3L508 245.7M601.4 173.6L595.5 173.6L595.5 184.1L583.7 184.1M601.4 173.6L606.9 178.3L612.1 183.3M612.1 183.3L612.1 196.6L616.4 196.6L616.4 207.5M583.3 204L583.3 194.4L583.7 194.4L583.7 184.1M583.3 204L600.8 211.9M600.8 211.9L616.4 207.5M644.7 201.7L634.6 201.7L634.6 209.6L620.2 209.6M612.1 183.3L624.7 183.3L624.7 177.6L639 177.6M620.2 209.6L616.4 207.5M576.6 401.5L588 404.4M576.6 401.5L572.8 401.5L572.8 404.4L570.2 404.4M573.5 428.8L570.3 423.6L566.2 419.1M566.2 419.1L570.2 404.4M568.1 447.8L562.1 447.8L562.1 446.5L555.7 446.5M568.1 447.8L572.5 445.2M555.7 446.5L555.7 431.1L548.2 431.1L548.2 424M566.2 419.1L548.2 424M552.5 380L547.5 379.3M552.5 380L552.5 390L559.5 390L559.5 398M524.3 394.1L547.5 379.3M524.3 394.1L524.3 394.1M559.5 398L553.3 398L553.3 408.6L539.6 408.6M524.3 394.1L529.9 394.1L529.9 408.6L539.6 408.6M548.2 424L542.7 422M570.2 404.4L559.5 398M539.6 408.6L539.6 417.2L542.7 417.2L542.7 422M542.5 454.7L548.5 454.7L548.5 446.5L555.7 446.5M542.5 454.7L521.4 437.9M542.7 422L534.6 422L534.6 437.9L521.4 437.9M614 282.7L613.3 267.5M614 282.7L607.9 283.1L602.4 285.2L597.1 287.9M613.3 267.5L607.8 264.1L602.3 260.9L597.1 257M597.1 287.9L594.6 287.9L594.6 284.7L591.7 284.7M591.7 284.7L591.7 279.7L588.2 279.7L588.2 268.5M597.1 257L597.1 263.8L588.2 263.8L588.2 268.5M539.3 312L544.2 329.6M539.3 312L541.2 312L541.2 306.7L545.2 306.7M544.2 329.6L546.4 329.6L546.4 334.2L549.6 334.2M549.6 334.2L560.7 329.7M560.7 329.7L560.7 320.5L567.5 320.5L567.5 313.6M545.2 306.7L552.3 306.7L552.3 313.6L567.5 313.6M600.8 310.4L594.5 310.4L594.5 317.9L586.7 317.9M600.8 310.4L600.8 299.2L597.1 299.2L597.1 287.9M586.7 317.9L578.9 317.9L578.9 309.7L574.5 309.7M591.7 284.7L579.3 284.7L579.3 293.3L572.7 293.3M572.7 293.3L572.1 298.9L573.1 304.4L574.5 309.7M621.4 285.9L614 282.7M621.4 285.9L620.1 290.8L620 296L620.4 301.2L619.3 306.3L617.5 311.2M600.8 310.4L604.3 310.4L604.3 313.1L607.4 313.1M617.5 311.2L607.4 313.1M672.8 358.2L672.8 367.5L681.9 367.5L681.9 375.8M653.1 375.9L666.6 387.8M681.9 375.8L676.2 375.8L676.2 387.8L666.6 387.8M680.2 419.1L676.3 419.1L676.3 426.3L670.3 426.3M680.2 419.1L679.9 406M652.4 404.5L660.9 404.5L660.9 395.2L666.9 395.2M652.4 404.5L652.4 413.6L657.3 413.6L657.3 424.1M657.3 424.1L665 424.1L665 426.3L670.3 426.3M679.9 406L674.8 406L674.8 395.2L666.9 395.2M639.4 400.6L646.3 400.6L646.3 404.5L652.4 404.5M666.6 387.8L666.6 390.2L666.9 390.2L666.9 395.2M725.6 356.6L729.4 356.6L729.4 355.5L733.5 355.5M725.6 356.6L721 356.6L721 352.9L717.8 352.9M729.7 320.6L726.2 324.4L722.1 327.6L718.6 331.5L714 334.1M714 334.1L714 347L717.8 347L717.8 352.9M712 438.9L712.4 434.7M712 438.9L706.4 442.2L702.2 447.1L697.5 451.4M712.4 434.7L708.2 431.2L704.1 427.5L700.4 423.5M689.7 423.4L689.3 448M689.7 423.4L693.6 423.4L693.6 423.5L700.4 423.5M697.5 451.4L694.8 451.4L694.8 448L689.3 448M729.6 423.5L734.7 423.5L734.7 427.1L737 427.1M729.6 423.5L725.7 426.9L721 429.2L715.9 430.7L712.4 434.7M737 427.1L737.1 433.1L737.5 439L736.1 444.9L735.9 450.9M712 438.9L712 448.4L725.2 448.4L725.2 454M735.9 450.9L731.2 450.9L731.2 454L725.2 454M745 498L748.5 512.1M745 498L741.6 498L741.6 491.7L735.8 491.7M735.8 491.7L730 493.1M748.5 512.1L748.5 520.1L735.6 520.1L735.6 526.2M735.6 526.2L726.5 526.2L726.5 519.8L718.6 519.8M730 493.1L730 509.8L718.6 509.8L718.6 519.8M677.7 543.3L680.7 543.3L680.7 536.6L686.6 536.6M677.7 543.3L674.9 538.4L672.2 533.4L667.6 529.7L666.8 523.5L663.9 518.7L659.7 514.6M686.6 536.6L686.6 529.9L690.9 529.9L690.9 518.3M690.9 518.3L677.9 512M659.7 514.6L665.4 514.6L665.4 512L677.9 512M673.4 550.8L677.7 543.3M703.3 562.9L703.3 550.1L703.6 550.1L703.6 542.7M703.6 542.7L693.3 542.7L693.3 536.6L686.6 536.6M656.4 513.6L659.7 514.6M656.4 513.6L648 522.3M648 522.3L648 525.9L645.5 525.9L645.5 534.5M703.6 542.7L707.2 541.5L710.7 539.9M710.7 539.9L710.4 533.1L714.1 527L714.2 520.3M700.3 512.4L705.6 512.4L705.6 520.3L714.2 520.3M700.3 512.4L695.8 512.4L695.8 518.3L690.9 518.3M642.2 445.3L645.5 431.4M642.2 445.3L633.7 448M633.7 448L629.7 448L629.7 447.1L624.7 447.1M624.7 447.1L624.7 438.4L615.1 438.4L615.1 427M645.5 431.4L634 420.9M634 420.9L622 420.9L622 427L615.1 427M632.5 471L627.4 471L627.4 478.6L621.2 478.6M632.5 471L632.5 463.6L633.7 463.6L633.7 448M621.2 478.6L621.2 474L610.7 474L610.7 465.9M610.7 465.9L612 462L610.3 458.2M610.3 458.2L618.5 458.2L618.5 447.1L624.7 447.1M595.1 448.1L602.8 448.1L602.8 458.2L610.3 458.2M610 424.5L615.1 427M634.8 402.1L634.8 411.3L634 411.3L634 420.9M657.3 424.1L649.7 424.1L649.7 431.4L645.5 431.4M620.6 396.4L615.3 400.1M20.8 759.7L20.8 769L14.1 769L14.1 788.7M20.8 759.7L16.1 755.9L9.7 755.4L4.2 753.1L-0.5 749.2M14.1 788.7L8.6 790.8L2.8 791.8L-2.9 793.6M48.9 759L48.9 770L48.7 770L48.7 776.7M48.9 759L34.9 759L34.9 759.7L20.8 759.7M38.7 794.8L23.2 794.8L23.2 788.7L14.1 788.7M48.9 759L50.1 757.3M36.4 726.1L36.4 745L50.1 745L50.1 757.3M95.5 788.6L83.9 756.8M50.1 757.3L60 757.3L60 752.1L66.5 752.1M83.9 756.8L78.2 754.7L72.3 753.6L66.5 752.1M49.8 708.3L64.8 708.3L64.8 712L73.5 712M66.5 752.1L73.5 712M40.8 684.2L46.2 683.3L51.9 684.1L57.4 683.5L62.6 680.5L68.2 681.2L73.8 681.5L79.2 680.3L84.5 677.5L90.1 677.9M90.1 677.9L88.3 683.5L86.6 689.1L85.2 694.7L84.8 700.5L84.3 706.4M84.3 706.4L73.5 712M228.5 643.3L228.5 632.8L227.6 632.8L227.6 621.8M228.5 643.3L223.7 647L218.1 649.4L213.3 653.1M194.9 611.8L210.2 604.7M194.9 611.8L194.9 629.2L186.1 629.2L186.1 647M210.2 604.7L211.4 604.4M211.4 604.4L227.6 621.8M213.3 653.1L186.1 647M160.5 644.6L159.4 639.6L160.5 634.4L158.5 629.5L158 624.4L158.7 619.3M160.5 644.6L166.3 644.6L166.3 649.2L178.1 649.2M158.7 619.3L172 605.1M194.9 611.8L182.8 611.8L182.8 605.1L172 605.1M178.1 649.2L186.1 647M351.3 726.1L336.2 714.4M317.1 749.2L317.1 737.4L317.1 737.4L317.1 724.9M317.1 724.9L328.5 724.9L328.5 714.4L336.2 714.4M199.4 820.4L205.9 792.7M242.5 791.2L238.1 787.3L232.5 786M205.9 792.7L221.8 792.7L221.8 786L232.5 786M603.6 158.3L594 158.3L594 147.8L587.9 147.8M603.6 158.3L605.3 158.3L605.3 154.7L609.1 154.7M609.1 154.7L610 149.8L609.4 144.6L612.7 140L612.4 134.9L614.1 130.1L613.6 125M587.9 147.8L587.9 136L590.4 136L590.4 124.7M590.4 124.7L607.7 120.6M607.7 120.6L613.6 125M554.7 151.3L568.4 151.3L568.4 147.8L587.9 147.8M555.3 169.1L557 171.5M601.4 173.6L601.4 168.8L603.6 168.8L603.6 158.3M583.7 184.1L557 171.5M629.8 154.5L609.1 154.7M574.1 113L590.4 124.7M643.3 141.1L643.6 135.5M613.6 125L621.2 125L621.2 123.9L624.5 123.9M643.6 135.5L624.5 123.9M699.3 150.8L703.1 134.5M738.3 152.9L738.3 144.1L729.7 144.1L729.7 127.5M729.7 127.5L723.9 126L718.2 124.1M703.1 134.5L718.2 124.1M705.8 1.7L702 5L697 6.9L693.3 10.4L689.9 14.3M677.4 -8.7L677.4 2.8L681.6 2.8L681.6 9.8M681.6 9.8L685.5 12.5L689.9 14.3M575 103.8L581.2 102.8L586.2 98.9L592.5 98L597.6 94.3M607.7 120.6L607.8 114.1L607.3 107.6L606.9 101.1M606.9 101.1L603 96.7L597.6 94.3M637.7 -7.8L638.6 9.3M620.1 8.7L633.9 11.8M620.1 8.7L620.1 1.7L619.1 1.7L619.1 -9.5M638.6 9.3L633.9 11.8M720.2 10.7L720.2 19.8L715.5 19.8L715.5 26.9M740.2 28.7L739.3 22.7L735 17.9L734.4 11.7M740.2 28.7L728.7 28.7L728.7 33.7L722.6 33.7M722.6 33.7L715.5 26.9M689.9 14.3L689.9 17L692.3 17L692.3 22M692.3 22L699.9 22L699.9 28.9L705.6 28.9M715.5 26.9L711.1 26.9L711.1 28.9L705.6 28.9M168.4 354.1L176.6 354.1L176.6 340.2L188.2 340.2M168.4 354.1L146.7 335M146.7 335L153.7 313.5M153.7 313.5L185.2 320.7M185.2 320.7L185.2 329.8L188.2 329.8L188.2 340.2M190.3 312.6L190.3 315.5L185.2 315.5L185.2 320.7M152.2 310L153.7 313.5M173.9 378.9L169.8 378.9L169.8 373.9L164.4 373.9M173.9 378.9L183.6 378.9L183.6 376.7L203.8 376.7M164.4 373.9L164.3 368.7L166.8 364.1L167.6 359.1L168.4 354.1M188.2 340.2L191 341.3M203.8 376.7L203.8 364L191 364L191 341.3M220.6 312.8L220.6 327.4L214.6 327.4L214.6 341.3M214.6 341.3L206 341.3L206 341.3L191 341.3M186.5 408.9L171.2 415.5M186.5 408.9L186.5 395L173.9 395L173.9 378.9M171.2 415.5L163.6 415.5L163.6 403.7L152.6 403.7M164.4 373.9L158.8 373.9L158.8 380.5L152.6 380.5M152.6 403.7L153.8 397.9L151.3 392.1L153.5 386.3L152.6 380.5M166.5 438.4L171.2 415.5M153.9 438L148.6 434.6L146 428.5L140.1 425.7L136.7 420.5M152.6 403.7L152.6 410.6L136.7 410.6L136.7 420.5M152.6 380.5L146.6 377.7L140 377.7L133.7 376.2M111.8 409.6L122.8 421.3M111.8 409.6L111.8 398.3L115.5 398.3L115.5 388.1M136.7 420.5L122.8 421.3M115.5 388.1L119.7 384.5L123.9 381.1L128.6 378.4L133.7 376.2M146.7 335L130.6 335L130.6 342.9L122.8 342.9M133.7 376.2L133.7 361.6L122.8 361.6L122.8 342.9M108.3 318.2L107.8 324.8L109.4 331.2L111.2 337.5M122.8 342.9L118.7 342.9L118.7 337.5L111.2 337.5M56.1 348L55.2 353.6L56.1 359.2L55.6 364.8L57.2 370.4L55.8 375.9M56.1 348L62.2 348L62.2 340.6L65.3 340.6M65.3 340.6L86.9 340.6L86.9 345.6L99.8 345.6M66.4 383.7L93.8 373.3M66.4 383.7L61.5 383.7L61.5 375.9L55.8 375.9M93.8 373.3L95 367.7L97.2 362.4L95.9 356.3L98.1 351L99.8 345.6M36.9 382.2L43.4 380.8L49.9 379.2L55.8 375.9M34.4 336.6L44.2 336.6L44.2 348L56.1 348M69.5 314.2L65.3 340.6M111.2 337.5L107.4 337.5L107.4 345.6L99.8 345.6M72.2 407.3L76.6 407.3L76.6 414.9L84.9 414.9M72.2 407.3L72.2 394.8L66.4 394.8L66.4 383.7M84.9 414.9L90.5 414.7L95.4 411.6L100.8 410.4L106.5 410.9L111.8 409.6M115.5 388.1L93.8 373.3M72.2 407.3L68.8 411.5L63.2 413.1L60.6 418.3L54.8 419.7L51 423.5L47.4 427.4M47.4 427.4L42.4 426.1L38.1 423.3L34.2 419.7L29.5 417.5L24.6 415.8M443.1 591.1L446.9 591.4M443.1 591.1L439.3 595.2L436.4 600L432.2 603.8L428.7 608.2L425.1 612.5M425.1 612.5L426.8 617.8L430.5 622.2L433.4 626.9L435.1 632.3L436.9 637.5M466.7 641.6L466.7 625.4L469.3 625.4L469.3 617.6M446.9 591.4L446.9 607.3L469.3 607.3L469.3 617.6M316.7 539.6L309.7 539.6L309.7 545.8L302.2 545.8M316.7 539.6L316.1 533.8L314.1 528.5L311.4 523.4L310.1 517.9L307 512.9L305.8 507.3L303.8 502M302.2 545.8L294.6 545.8L294.6 539.3L278.9 539.3M278.9 539.3L281.4 514.2M281.4 514.2L286.5 512.8L290.6 509.6L295.6 508.1L299.5 504.7L303.8 502M340.6 496.5L340.6 484.5L341.2 484.5L341.2 463.2M340.6 496.5L335.5 497.6L330.2 496.3L325.3 498.2L320 497.2L315.1 500.2L310 500L304.8 500.1M313.5 456.2L341.2 463.2M313.5 456.2L310.7 460.6L309 465.5L307.2 470.4L303.2 474.1L300.2 478.4L298.9 483.5M298.9 483.5L304.8 500.1M345.1 536.5L339.9 536.5L339.9 545.3L334 545.3M345.1 536.5L345.1 524.8L342.3 524.8L342.3 498M334 545.3L324.7 545.3L324.7 539.6L316.7 539.6M342.3 498L340.6 496.5M304.8 500.1L303.8 502M381.7 606L393.8 566.2M381.7 606L391.3 606L391.3 616.6L407.6 616.6M413 614.2L407.6 616.6M413 614.2L413 587.8L395 587.8L395 566.6M395 566.6L393.8 566.2M425.1 612.5L419 612.8L413 614.2M423.1 654.4L395.6 648.8M395.6 648.8L395.6 634.7L407.6 634.7L407.6 616.6M443.1 591.1L443.1 580.5L429.2 580.5L429.2 570.5M429.2 570.5L417.3 570.5L417.3 566.6L395 566.6M281.4 514.2L270.8 514.2L270.8 500L250.4 500M274.7 473.8L287.2 473.8L287.2 483.5L298.9 483.5M274.7 473.8L265.8 473.8L265.8 495L250 495M250 495L250.4 500M133.2 603.6L143.3 603.6L143.3 619.3L158.7 619.3M133.2 603.6L162.6 569.8M172 605.1L172 590.4L169.3 590.4L169.3 575.6M162.6 569.8L166.1 572.5L169.3 575.6M210.2 604.7L206.3 600.8L201.5 598.1L197.7 594.2L193 591.4L187.6 589.6L183.3 586.3L178.9 583L175.6 578.4L170.9 575.7M170.9 575.7L169.3 575.6M47.4 427.4L47.4 439.9L52 439.9L52 451.8M15.8 418.3L15.8 436.5L10.7 436.5L10.7 452.3M52 451.8L49.3 454.4M49.3 454.4L26.3 454.4L26.3 452.3L10.7 452.3M0.7 462.3L7.3 462.3L7.3 452.3L10.7 452.3M85.9 449.4L103.5 449.4L103.5 455.2L114.4 455.2M85.9 449.4L80.6 453.2L74.8 456.1M74.8 456.1L74.7 461.7L76.4 467.1L76.3 472.7L76.6 478.3L78.7 483.6L79.5 489.1M114.5 455.5L114.4 455.2M114.5 455.5L114.5 474.6L112.4 474.6L112.4 484.7M112.4 484.7L103 484.7L103 497.7L89.8 497.7M89.8 497.7L84.7 497.7L84.7 489.1L79.5 489.1M84.9 414.9L84.9 438.4L85.9 438.4L85.9 449.4M122.8 421.3L122.8 443.8L114.4 443.8L114.4 455.2M52 451.8L74.8 456.1M139 458.1L128.4 458.1L128.4 455.5L114.5 455.5M161.7 483.9L161.5 484.6M161.5 484.6L126.7 493M126.7 493L117.9 493L117.9 484.7L112.4 484.7M652 282.9L663.6 282.9L663.6 286.9L669.7 286.9M652 282.9L641.1 293M669.7 286.9L669.7 297L660.3 297L660.3 315M641.1 293L641.1 299.2L642.7 299.2L642.7 309M642.7 309L648.9 309.9L654.5 312.8L660.3 315M672.9 285.7L669.7 286.9M648.2 266.9L657.9 266.9L657.9 260.2L666.1 260.2M648.2 266.9L648.9 272.4L650.7 277.6L652 282.9M625.6 285.3L621.4 285.9M625.6 285.3L634.8 285.3L634.8 293L641.1 293M617.5 311.2L632 316.7M632 316.7L638.1 314L642.7 309M663 331.5L667 323.1M667 323.1L667 319.3L660.3 319.3L660.3 315M649.8 340.2L631.5 331.6M632 316.7L632 321.3L631.5 321.3L631.5 331.6M725.6 356.6L725.4 362L726.5 367.4L726.1 372.7L724.8 378M748.3 375.1L735.1 386.6M735.1 386.6L729.2 383.2L724.8 378M753.2 402.9L747.4 402.9L747.4 396.9L735.1 396.9M753.2 402.9L756 400.9L759.4 401.9M735.1 386.6L735.1 396.9M753.2 402.9L752.4 408.1L749.6 412.5L748.8 417.6L745.2 421.7L743.7 426.6M729.6 423.5L726.1 405.4M743.7 426.6L741.6 426.6L741.6 427.1L737 427.1M735.1 396.9L732.2 396.9L732.2 405.4L726.1 405.4M781.7 404.8L790.5 409.6M792.6 379.8L809.8 400.5M790.5 409.6L798.2 409.6L798.2 400.5L809.8 400.5M776.1 151.3L778 145.4L781.4 140.2L782.7 134L785.7 128.6M807.9 134.7L802.4 130.9L795.4 130.9L789.9 127.2M789.9 127.2L785.7 128.6M824.3 24.6L824.3 12.6L801.5 12.6L801.5 -4.3M562.4 672L576.4 685.5M576.4 685.5L576.4 703.4L570.9 703.4L570.9 716.3M539.5 706.6L544.1 710.6L549.8 713.1L554.6 716.9L559.8 720.2M559.8 720.2L564.9 720.2L564.9 716.3L570.9 716.3M784.1 786.6L766.7 791.5M786.3 750.2L761.4 750.2L761.4 742.2L749 742.2M749 742.2L749.1 783.4M749.1 783.4L758.3 783.4L758.3 791.5L766.7 791.5M766.7 791.5L766.5 828.2M786.9 713.6L781.4 714.9L776 716.6L770.7 718.7L764.9 718.5L759.6 720.8L754.3 722.7L748.5 722.9M775.2 681L753.3 693.1M753.3 693.1L753.3 709.3L748.5 709.3L748.5 722.9M749 742.2L749 738.7L745 738.7L745 736.5M745 736.5L744.9 727.8M744.9 727.8L746.7 725.3L748.5 722.9M636.1 540.5L631.2 540.5L631.2 537.6L621.9 537.6M648 522.3L638.5 522.3L638.5 514.7L627.4 514.7M621.9 537.6L621.9 533.1L617.9 533.1L617.9 524.2M627.4 514.7L621.7 518.4L617.9 524.2M622.1 567.9L614.5 559.8M621.9 537.6L617 541.7L612.8 546.6M614.5 559.8L614.5 553.2L612.8 553.2L612.8 546.6M595.7 580.3L586.7 580.3L586.7 590.4L579.9 590.4M595.7 580.3L595.7 571.8L592.5 571.8L592.5 566.5M592.5 566.5L589.8 564.1M589.8 564.1L582.8 564.1L582.8 567.4L571.9 567.4M571.9 567.4L573.4 587.8M579.9 590.4L573.4 587.8M619.4 578.3L614.3 579.8L610.7 584.4L605.3 585.4M605.3 585.4L600 583.8L595.7 580.3M614.5 559.8L592.5 566.5M596.3 542L606.7 542L606.7 546.6L612.8 546.6M596.3 542L593.8 542L593.8 544.3L589.8 544.3M589.8 544.3L589.8 554.2L589.8 554.2L589.8 564.1M578.7 538.6L572.2 538.6L572.2 544.4L566.5 544.4M578.7 538.6L589.8 544.3M571.9 567.4L569.2 567.4L569.2 562.5L564.8 562.5M564.8 562.5L566.5 544.4M517.4 544.5L515.2 539.5L512.2 535L507.6 531.6L505.2 526.8M517.4 544.5L527.8 544.5L527.8 542.8L545.6 542.8M505.2 526.8L520.5 526.8L520.5 522L543.6 522M543.6 522L549.4 524.9M549.4 524.9L549.4 530L552 530L552 536.9M545.6 542.8L552 536.9M521 564L526.3 564L526.3 569.6L530.2 569.6M521 564L520.1 557.4L517.1 551.2L517.4 544.5M545.6 542.8L545.6 556L544.4 556L544.4 565.1M530.2 569.6L544.4 565.1M564.8 562.5L553.1 567.2M566.5 544.4L552 536.9M544.4 565.1L548.2 565.1L548.2 567.2L553.1 567.2M790.4 645.8L790.4 632.9L803.2 632.9L803.2 621.2M821.9 627.8L815.8 625.3L809.2 624L803.2 621.2M784.2 630.7L784.8 625.6L786.9 620.5L786.6 615.2L786.7 610M786.7 610L787.5 609.7M787.5 609.7L798.8 612.5M803.2 621.2L799.7 617.5L798.8 612.5M62.6 606.8L72.9 606.8L72.9 624.2L87.5 624.2M46.7 650L62.9 650L62.9 658.8L86.3 658.8M87.5 624.2L87.5 643.2L86.3 643.2L86.3 658.8M66.8 596.1L77.2 596.1L77.2 582.2L94.3 582.2M94.3 582.2L106.1 582.2L106.1 605.6L118.6 605.6M118.6 605.6L118.6 608.4L115.2 608.4L115.2 612.4M87.5 624.2L115.2 612.4M513 57.2L509.8 52.2M528.6 29.9L518.6 29.9L518.6 36.8L513.5 36.8M528.6 29.9L536.8 34.2M509.8 52.2L509.8 46.4L513.5 46.4L513.5 36.8M553.5 -7.4L556 -2.4L557.1 3.3L560.2 8.1M560.2 8.1L563 9.5M563 9.5L575.3 4.7M546.7 15L551.3 15L551.3 8.1L560.2 8.1M546.7 15L545.6 20.3L544.4 25.6L544.2 31.1M554.7 34.5L560.7 34.5L560.7 27.8L567.2 27.8M563 9.5L563 20.3L567.2 20.3L567.2 27.8M553.9 71L559.6 71L559.6 69.8L565.7 69.8M570.3 97.2L575 77M575 77L571.6 77L571.6 69.8L565.7 69.8M557.2 49.5L571.9 52.4M565.7 69.8L565.7 60.7L571.9 60.7L571.9 52.4M567.2 27.8L569.3 27.8L569.3 30.6L573.2 30.6M573.2 30.6L573.2 40.7L576.6 40.7L576.6 50.2M571.9 52.4L576.6 50.2M221.2 37.6L229.4 31.2M223.6 10.5L226.4 12.2M229.4 31.2L226.4 12.2M286.7 153.1L286.7 144.8L277.4 144.8L277.4 128.9M307.4 129.1L301.4 129.1L301.4 119.6L294.1 119.6M294.1 119.6L282.9 119.6L282.9 128.9L277.4 128.9M254.6 131.3L258.4 131.3L258.4 125.7L261.3 125.7M243.3 96.1L248.5 96.5L253.8 96.2L259 98L264.3 97.5M264.3 97.5L264.9 98.1M264.9 98.1L264.9 110.9L261.3 110.9L261.3 125.7M277.4 128.9L261.3 125.7M336.4 133.1L348.5 126.5M323.3 103L323.3 111.8L317.4 111.8L317.4 124.4M323.3 103L326.4 103L326.4 99.2L329.9 99.2M329.9 99.2L343.7 101.4M348.5 126.5L348.5 113.4L349.5 113.4L349.5 106.2M343.7 101.4L346.7 103.6L349.5 106.2M365.4 147.3L359.8 133.8M365.4 147.3L369.8 147.3L369.8 151L374.3 151M359.8 133.8L370 133.8L370 119.3L378.7 119.3M374.3 151L383.4 151L383.4 146.7L388.1 146.7M388.1 146.7L395.3 129.9M395.3 129.9L386.9 129.9L386.9 119.3L378.7 119.3M346.3 160.9L354 160.9L354 147.3L365.4 147.3M348.5 126.5L359.8 133.8M373.5 182.7L374.3 151M373.4 103.1L373.4 113.6L378.7 113.6L378.7 119.3M373.4 103.1L369 101.6M349.5 106.2L357.6 106.2L357.6 101.6L369 101.6M402.8 163.6L388.1 146.7M416.2 130.3L406.4 124.7M406.4 124.7L401.8 124.7L401.8 129.9L395.3 129.9M228.9 306.3L233.8 306.3L233.8 310.6L240 310.6M264.4 287.2L263.9 294.3L262 301.2M262 301.2L256.7 304L250.9 305.8L245.5 308.2L240 310.6M274.7 473.8L274.7 462.3L270.5 462.3L270.5 448.6M250 495L250 489.3L241.8 489.3L241.8 485.9M239.9 452.3L239.9 465.2L241.8 465.2L241.8 485.9M239.9 452.3L251.8 452.3L251.8 444.9L261.7 444.9M270.5 448.6L267.1 448.6L267.1 444.9L261.7 444.9M358.8 305.6L348.3 305.6L348.3 322.6L336.6 322.6M370.4 345.3L363.9 345.3L363.9 352.8L351.4 352.8M336.6 322.6L338.3 343.6M351.4 352.8L338.3 343.6M526 337L516.6 337L516.6 332.9L510 332.9M526 337L527.5 342.3L527.2 348L529.8 353L530.6 358.5M510 332.9L499.6 350.2M530.6 358.5L523.6 361.4M523.6 361.4L512.2 361.4L512.2 356.7L502.5 356.7M502.5 356.7L499.6 350.2M539.3 312L536.3 312L536.3 309.8L531.1 309.8M544.2 329.6L538 331.6L532 334.5L526 337M508.8 320.2L510.6 326.5L510 332.9M537.1 359L533.8 359L533.8 358.5L530.6 358.5M537.1 359L540.7 353.7L547 351.4L550.8 346.4M550.8 346.4L550.8 341.3L549.6 341.3L549.6 334.2M478.3 344.5L488.9 344.5L488.9 350.2L499.6 350.2M537.1 359L540.2 363.8L542 369.3L543.6 374.8L547.5 379.3M524.3 394.1L524.3 383.6L523.6 383.6L523.6 361.4M495.4 382.8L516.2 396.3M495.4 382.8L502.5 356.7M524.3 394.1L516.2 396.3M467.2 382.1L472.2 382.1L472.2 388.4L477.2 388.4M477.2 388.4L483 385.7L489.6 385.4L495.4 382.8M520.9 288L523.3 283.4M506.6 261.4L514.1 261.4L514.1 269.8L518.4 269.8M523.3 283.4L523.3 274.2L518.4 274.2L518.4 269.8M504.6 206.3L513.1 206.3L513.1 211.5L520 211.5M508 245.7L513.8 245.7L513.8 241.9L516.4 241.9M516.4 241.9L517.4 236.9L518.1 231.8L516.9 226.6L519.8 221.8L519.5 216.6L520 211.5M530.4 181.3L530.4 197.4L532.7 197.4L532.7 209.6M532.7 209.6L520 211.5M625.1 258.8L629.1 258.8L629.1 261.5L636.4 261.5M625.1 258.8L625.1 248.2L613.8 248.2L613.8 241.2M645.2 237.8L643.3 243.4L642.3 249.1L641.9 255.1L639.5 260.5M645.2 237.8L624.5 231.2M639.5 260.5L636.4 261.5M624.5 231.2L620.5 231.2L620.5 241.2L613.8 241.2M625.6 285.3L625.6 270.9L636.4 270.9L636.4 261.5M613.3 267.5L625.1 258.8M598.4 243.4L604.4 243.4L604.4 241.2L613.8 241.2M598.4 243.4L598.4 251.3L597.1 251.3L597.1 257M653.9 233.2L650.1 233.2L650.1 237.8L645.2 237.8M648.2 266.9L642.4 266.9L642.4 260.5L639.5 260.5M620.2 209.6L620.6 215.1L623.3 220.2L622.8 225.9L624.5 231.2M595.2 240.3L595 234.3L597.6 229L599.8 223.5L598.9 217.4L600.8 211.9M595.2 240.3L598.4 243.4M552.5 380L554.9 380L554.9 376.5L557.8 376.5M550.8 346.4L556.4 351L562.7 354.5M557.8 376.5L557.8 367L562.7 367L562.7 354.5M576.6 401.5L579 378.3M557.8 376.5L568.3 376.5L568.3 378.3L579 378.3M545.2 306.7L547.9 299.9L550.9 293.2M572.7 293.3L565.5 289.6M567.5 313.6L570.9 311.4L574.5 309.7M550.9 293.2L555.7 291.8L560.3 289.5L565.5 289.6M523.3 283.4L529.4 283.5L535.2 280.6L541.3 281M550.9 293.2L541.3 281M607.4 313.1L607.4 327L609.3 327L609.3 336.8M631.5 331.6L626.2 335.8L622 341M609.3 336.8L615.2 340.2L622 341M631.2 359L624.1 354.4M624.1 354.4L622.4 347.8L622 341M690.6 336.3L703.5 330.6M690.6 336.3L678.4 336.3L678.4 322.8L671.3 322.8M703.5 330.6L701.5 325.4L700.6 320L700 314.5L698.4 309.3M671.3 322.8L690.4 305.8M690.4 305.8L698.4 309.3M714 334.1L709 331.8L703.5 330.6M717.8 352.9L709.1 352.9L709.1 361.1L703 361.1M703 361.1L688.4 349.4M688.4 349.4L690 342.9L690.6 336.3M673.9 356.2L679.3 355.2L684.2 353L688.4 349.4M667 323.1L671.3 322.8M707.3 306.1L704.2 306.1L704.2 309.3L698.4 309.3M686.7 292.3L686.7 300.8L690.4 300.8L690.4 305.8M700.3 512.4L700.3 502.6L702.1 502.6L702.1 496.3M730 493.1L721.1 493.1L721.1 490.2L711.4 490.2M718.6 519.8L714.2 520.3M702.1 496.3L708.5 496.3L708.5 490.2L711.4 490.2M735.8 491.7L735.8 486.7L736.6 486.7L736.6 478.5M721.8 463.9L724.8 468.3L729.6 470.8L733.1 474.6L736.6 478.5M721.8 463.9L710.2 469.4M711.4 490.2L710.2 469.4M697.5 451.4L697.5 460.1L699.8 460.1L699.8 464.2M725.2 454L725.2 457.7L721.8 457.7L721.8 463.9M710.2 469.4L705.5 469.4L705.5 464.2L699.8 464.2M670.3 426.3L670.3 435.3L672 435.3L672 443.3M642.2 445.3L646.5 445.3L646.5 455.5L654.5 455.5M672 443.3L660.4 443.3L660.4 455.5L654.5 455.5M680.2 419.1L683.5 419.1L683.5 423.4L689.7 423.4M689.3 448L685.5 448L685.5 448.9L681.1 448.9M672 443.3L674.9 443.3L674.9 448.9L681.1 448.9M735.9 450.9L741.8 450.9L741.8 454.8L745.7 454.8M736.6 478.5L736.6 470.4L748.6 470.4L748.6 465.9M745.7 454.8L748.6 465.9M745 498L758.7 490.2M758.7 490.2L761.3 484.2L763.2 478L765.6 471.9M748.6 465.9L765.6 471.9M783.3 471.9L769.9 470.1M783.3 471.9L784.4 489.6M784.4 489.6L778.4 489.6L778.4 496.8L773.4 496.8M773.4 496.8L766.5 496.8L766.5 490.2L758.7 490.2M765.6 471.9L769.9 470.1M578.7 538.6L578.8 521.5M549.4 524.9L557.5 524.9L557.5 512.4L564.7 512.4M578.8 521.5L574.7 517.5L569.9 514.6L564.7 512.4M477.2 544.7L492.9 544.7L492.9 525.6L503.5 525.6M477.2 544.7L470.6 544.7L470.6 538.4L460.9 538.4M460.9 538.4L458.8 533.2L459.4 527.5L456.7 522.4L456.4 516.9L456.1 511.4L455.3 505.9M503.5 525.6L503.5 523.5L502.9 523.5L502.9 519.3M502.9 519.3L486.2 519.3L486.2 499.5L478.2 499.5M455.3 505.9L463.9 505.9L463.9 499.5L478.2 499.5M429.2 570.5L429.2 561.1L438.9 561.1L438.9 544.5M478.5 568.2L450.1 589.5M478.5 568.2L477.2 544.7M438.9 544.5L452.5 544.5L452.5 538.4L460.9 538.4M446.9 591.4L450.1 589.5M505.2 526.8L503.5 525.6M539 498L539 505.8L543.6 505.8L543.6 522M539 498L527 498L527 493.5L517.7 493.5M517.7 493.5L517.7 503.9L502.9 503.9L502.9 519.3M384.1 539.8L384.1 548.9L388.8 548.9L388.8 561.1M384.1 539.8L384.1 530.4L401 530.4L401 510.2M388.8 561.1L391.4 563.6L393.8 566.2M438.9 544.5L438.9 532L408.5 532L408.5 510.2M401 510.2L404.8 510.7L408.5 510.2M455.3 505.9L443.9 505.9L443.9 494.7L435.2 494.7M408.5 510.2L435.2 494.7M517.7 493.5L517.7 486.1L516 486.1L516 480.2M516 480.2L516 467.6L497.9 467.6L497.9 460M478.2 499.5L478.2 476.1L479.6 476.1L479.6 464.2M479.6 464.2L492.2 464.2L492.2 460L497.9 460M477.2 388.4L477.2 399.4L476.3 399.4L476.3 414.9M516.2 396.3L514.6 401.5L512.8 406.7L510.8 411.9L508.8 417L507 422.2L505.2 427.4M476.3 414.9L505.2 427.4M542.1 467L516 480.2M542.1 467L541 460.8L542.5 454.7M521.4 437.9L514.8 437.9L514.8 438L509.7 438M497.9 460L501.3 454.7L504.3 449.3L506 443.1L509.7 438M509.7 438L505.2 427.4M380.6 717.5L379.7 712.5L376.7 708.2L375.7 703.2L373 698.8L371.6 694L370.5 689L369.2 684.1M336.2 714.4L336.2 694.9L333.6 694.9L333.6 686.5M333.6 686.5L337.3 684M369.2 684.1L354.3 684.1L354.3 684L337.3 684M410.1 689.6L406.2 685.4L402.1 681.3L397 678.3L394.3 672.8L388.7 670.3L385.2 665.6M369.2 684.1L369.2 674L385.2 674L385.2 665.6M395.6 648.8L391 652.4L385.6 654.8M385.2 665.6L385.2 658.9L385.6 658.9L385.6 654.8M317.1 724.9L301.6 724.9L301.6 718.9L290.9 718.9M333.6 686.5L322.2 686.5L322.2 679.7L313.5 679.7M313.5 679.7L307.2 679.7L307.2 690.9L296.6 690.9M290.9 718.9L290.9 705.9L296.6 705.9L296.6 690.9M108.4 726.3L108.8 733.8L106.5 740.9M108.4 726.3L127.3 726.3L127.3 710L140 710M140 710L140 726.7L138.5 726.7L138.5 755.7M106.5 740.9L109.7 746L115 748.9L119.6 752.5L124.1 756.2L127.6 760.9M127.6 760.9L133.4 760.9L133.4 755.7L138.5 755.7M83.9 756.8L93.3 756.8L93.3 740.9L106.5 740.9M84.3 706.4L95.2 706.4L95.2 726.3L108.4 726.3M124.2 779.1L124.2 770L127.6 770L127.6 760.9M676 151.9L673.7 146.7L674.5 140.9L674 135.3L671.9 130.1L671 124.6M643.6 135.5L643.6 130.6L656.8 130.6L656.8 121.5M656.8 121.5L671 124.6M703.1 134.5L682.3 120M671 124.6L678.3 124.6L678.3 120L682.3 120M656.8 121.5L652.3 104M652.3 104L660.7 104L660.7 93.7L667.4 93.7M682.3 120L683.4 115.1L685.8 110.5L687.5 105.7L688.1 100.6M667.4 93.7L672.8 93.7L672.8 92.3L677 92.3M677 92.3L684.6 92.3L684.6 100.6L688.1 100.6M661 30.4L663.3 28.8M661 30.4L657.3 30.4L657.3 26.9L652.5 26.9M663.3 28.8L669.1 15.7M652.5 26.9L652.5 17.2L644.7 17.2L644.7 10.8M669.1 15.7L663 15.7L663 5L655.9 5M655.9 5L650.4 5L650.4 10.8L644.7 10.8M681.6 9.8L673.5 9.8L673.5 15.7L669.1 15.7M683.8 34.8L670.4 34.8L670.4 28.8L663.3 28.8M683.8 34.8L692.3 22M637.8 33.8L634.8 33.8L634.8 28.2L631.7 28.2M637.8 33.8L652.5 26.9M631.7 28.2L631.7 22.1L633.9 22.1L633.9 11.8M638.6 9.3L644.7 10.8M598.2 -14.3L598.2 -5.7L599.2 -5.7L599.2 9.4M575.3 4.7L590 14.6M599.2 9.4L594 10.9L590 14.6M620.1 8.7L615 10.7L610.9 14.3M599.2 9.4L605 11.9L610.9 14.3M573.2 30.6L579 30.6L579 24.9L587 24.9M590 14.6L590 21.4L587 21.4L587 24.9M769.2 50.1L767.6 45L768.8 39.6L766.9 34.5M769.2 50.1L764.7 50.1L764.7 57.1L759.3 57.1M759.3 57.1L743.7 49.3M766.9 34.5L757.7 34.5L757.7 31.2L751.6 31.2M743.7 49.3L748.2 32.5M751.6 31.2L748.2 32.5M763.4 6.8L776.7 12.4M754.9 11.6L753.1 18L753.8 24.8L751.6 31.2M777.8 26.2L777.8 18.9L776.7 18.9L776.7 12.4M777.8 26.2L772.8 30.9L766.9 34.5M740.2 28.7L745.3 28.7L745.3 32.5L748.2 32.5M758 72.5L747.5 72.5L747.5 74.1L743 74.1M758 72.5L758.5 67.3L758.8 62.2L759.3 57.1M743 74.1L739.1 71.5M743.7 49.3L736.6 54.2M739.1 71.5L736.6 54.2M722.6 33.7L723.5 39.2L723.9 44.7L723 50.2M736.6 54.2L730.2 51L723 50.2M705.6 28.9L704.6 34.9L704.2 41L702.7 46.9L700.5 52.6M700.5 52.6L706.1 51.9L711.5 53.7L717 54.1M717 54.1L718.9 54.1L718.9 50.2L723 50.2M149.8 550.8L153.1 552.1L155.8 554.4M149.8 550.8L146.5 530.7M155.8 554.4L168.4 554.4L168.4 537.5L186 537.5M146.5 530.7L164.9 500M186 537.5L187.1 532.4L187.2 527L190.4 522.3L190.9 517M164.9 500L179.5 500L179.5 517L190.9 517M128 556.8L128 571.3L121.1 571.3L121.1 604.3M128 556.8L143.1 556.8L143.1 550.8L149.8 550.8M133.2 603.6L127.9 603.6L127.9 604.3L121.1 604.3M162.6 569.8L162.6 564.8L155.8 564.8L155.8 554.4M128.3 516.6L126.7 493M128.3 516.6L132.9 520L138.3 522.5L142.6 526.3L146.5 530.7M161.5 484.6L161.5 494.9L164.9 494.9L164.9 500M169.8 477.4L175.1 477.9L180.5 478.1L185.4 480.6L190.7 481.4L196.1 481.4L201.1 483.4L206.5 483.6M204.7 510.6L206.5 483.6M204.7 510.6L200.4 510.6L200.4 517L190.9 517M65.7 524.9L89.1 510.7M65.7 524.9L68.7 529.5L70.7 534.5L74 538.9L76 544L77.7 549.2L80.1 554M89.1 510.7L89.1 520.5L101.4 520.5L101.4 525.2M101.4 525.2L102 530.7L103.6 536.1L103.5 541.7L103 547.2L103.7 552.7M80.1 554L86.1 555.2L92.2 555.1L98.2 556.7M103.7 552.7L98.2 556.7M40.6 557.5L41.3 551.9L42 546.3L44.4 541.1L44.2 535.3L45.9 529.9L46.6 524.4M56.6 565L68.9 565L68.9 554L80.1 554M46.6 524.4L56.4 524.4L56.4 524.9L65.7 524.9M128.3 516.6L114.1 516.6L114.1 525.2L101.4 525.2M89.8 497.7L89.1 510.7M128 556.8L122.2 554.4L116 554.2L109.8 553.5L103.7 552.7M94.3 582.2L94.3 569.1L98.2 569.1L98.2 556.7M121.1 604.3L118.6 605.6M59 491.2L59 501.3L44.6 501.3L44.6 521.8M59 491.2L49 491.2L49 477L42.7 477M42.7 477L33.9 477L33.9 490L20 490M20 490L22.5 495.8L24.6 501.6L27.6 507.2L28.3 513.6M28.3 513.6L44.6 521.8M46.6 524.4L44.6 521.8M79.5 489.1L70.3 489.1L70.3 491.2L59 491.2M49.3 454.4L48 460.1L47.4 466.1L44.9 471.5L42.7 477M-0.1 479.7L9.1 479.7L9.1 490L20 490M4 530.8L12.4 530.8L12.4 513.6L28.3 513.6M211.2 454.5L226.2 446.3M211.2 454.5L201.6 454.5L201.6 446L189.5 446M226.2 446.3L226.2 429.8L223.2 429.8L223.2 414.4M189.5 446L199.7 412.6M199.7 412.6L209.2 412.6L209.2 407.5L214 407.5M214 407.5L223.2 414.4M239.9 452.3L226.2 446.3M241.8 485.9L236.4 484.6L230.8 484.5L225.5 482.3L220 482L214.4 481.9L208.8 481.4M208.8 481.4L210.5 476.2L208.5 470.6L210.5 465.3L209.3 459.8L211.2 454.5M178.5 449.3L183.9 447.5L189.5 446M206.5 483.6L208.8 481.4M255.9 415.9L261.7 444.9M255.9 415.9L245.7 411M245.7 411L240.2 412.5L234.5 412.8L228.6 412.1L223.2 414.4M186.5 408.9L199.7 412.6M203.8 376.7L209.9 376.7L209.9 381.7L214.9 381.7M214.9 381.7L214.9 390.2L214 390.2L214 407.5M708.2 405.7L713 402.4M708.2 405.7L703.3 403.4L697.8 403.3L692.8 401.7L687.6 400.5M713 402.4L706.3 382.9M687.6 400.5L687.6 386.4L695.4 386.4L695.4 378.8M706.3 382.9L698.3 377.7M698.3 377.7L695.4 378.8M700.4 423.5L703.4 417.7L706.4 412L708.2 405.7M726.1 405.4L720.8 405.4L720.8 402.4L713 402.4M679.9 406L685 406L685 400.5L687.6 400.5M724.8 378L706.3 382.9M681.9 375.8L688.8 375.8L688.8 378.8L695.4 378.8M703 361.1L698.3 377.7M743.7 426.6L751.1 426.6L751.1 433.5L759.4 433.5M767.4 408.1L767.4 414.8L766.1 414.8L766.1 426.5M766.1 426.5L763.5 430.7L759.4 433.5M745.7 454.8L751.1 450.8L756 446.4L760.4 441.3M759.4 433.5L760.4 441.3M769.9 470.1L765.6 445.7M760.4 441.3L763.2 441.3L763.2 445.7L765.6 445.7M789.9 127.2L789.9 110L799.9 110L799.9 99M799.9 99L807.1 99L807.1 98.1L810.2 98.1M765.1 78.1L765.1 88.4L765.9 88.4L765.9 99M765.1 78.1L771.5 78.1L771.5 71L778.9 71M765.9 99L784.3 99L784.3 94.7L793.6 94.7M793.6 94.7L789.5 72.5M778.9 71L784.3 70.6L789.5 72.5M765.1 78.1L760.5 78.1L760.5 72.5L758 72.5M769.2 50.1L772.7 52.1M778.9 71L776 65L774.9 58.3L772.7 52.1M799.9 99L796.5 99L796.5 94.7L793.6 94.7M813.1 75.6L807.9 74.8L804.3 70.4L799.6 68.6L794.6 67.3M789.5 72.5L792.2 70L794.6 67.3M764.2 101.2L764.2 109.8L769.3 109.8L769.3 117.9M764.2 101.2L758.6 101.2L758.6 102L747.8 102M769.3 117.9L765.2 117.9L765.2 128.8L757.2 128.8M747.8 102L747.8 115L736.6 115L736.6 123.3M757.2 128.8L745.2 128.8L745.2 123.3L736.6 123.3M765.9 99L764.2 101.2M785.7 128.6L769.3 117.9M742.3 96.8L742.3 87.5L743 87.5L743 74.1M742.3 96.8L744.9 96.8L744.9 102L747.8 102M759.4 152.4L757.2 128.8M729.7 127.5L733.1 127.5L733.1 123.3L736.6 123.3M776.7 12.4L786.3 12.4L786.3 -4.4L793.7 -4.4M721.7 713.5L736.2 713.5L736.2 727.8L744.9 727.8M721.7 713.5L721.7 701.4L714.3 701.4L714.3 686.1M753.3 693.1L739.7 693.1L739.7 673L731.1 673M714.3 686.1L723 686.1L723 673L731.1 673M753.2 648.4L748.4 650.1L743.1 650.6L739 654.4L733.7 654.8M731.1 673L731.1 667.5L733.7 667.5L733.7 654.8M756.5 629.2L747.7 629.2L747.7 622L735 622M735 622L727.2 649.2M727.2 649.2L729.8 649.2L729.8 654.8L733.7 654.8M633.4 594.1L632.6 599.4L632.3 604.8M664.5 586.2L664.5 603.5L656 603.5L656 615.9M656 615.9L645.5 615.9L645.5 604.8L632.3 604.8M605.3 585.4L605.3 593L605.8 593L605.8 603.3M605.8 603.3L619.1 603.3L619.1 608.2L627.1 608.2M632.3 604.8L629.2 604.8L629.2 608.2L627.1 608.2M557.2 796.9L568 796.9L568 789.4L588.9 789.4M557.2 796.9L557.2 778.7L535.2 778.7L535.2 767.6M535.2 767.6L544.3 767.6L544.3 753.2L553.7 753.2M553.7 753.2L581.5 760.8M588.9 789.4L588.9 774.6L581.5 774.6L581.5 760.8M551.6 828.5L551.6 814.4L557.2 814.4L557.2 796.9M593.4 792L594.9 796.9L594.4 802.3L596.8 807L596.8 812.2L599.3 816.9M593.4 792L588.9 789.4M364.2 780.2L372.7 780.2L372.7 790.8L389.8 790.8M385.6 810.3L389.8 790.8M393.5 750.6L392.9 788.3M389.8 790.8L392.9 788.3M485.1 751.9L481.2 755.7M485.1 751.9L490.3 752.7L495.2 754.3L500.4 754.9L504.9 757.8L509.9 759.3L515 760.3L519.7 762.5L524.9 763L529.9 764.2M481.2 755.7L481.2 768.8L477.2 768.8L477.2 787.7M514.5 791.4L479.5 789.9M514.5 791.4L517.2 787L521.9 784.2L525 780.2L527.9 775.9L531.6 772.3L533.8 767.6M477.2 787.7L479.5 789.9M529.9 764.2L533.8 767.6M487.8 720.2L487.8 731.1L485.1 731.1L485.1 751.9M451.8 751.3L481.2 755.7M516.4 717.2L516.4 741L529.9 741L529.9 764.2M518.6 821.2L514.5 791.4M482.5 822.4L482.5 807.7L479.5 807.7L479.5 789.9M535.2 767.6L533.8 767.6M559.8 720.2L559.8 736.2L553.7 736.2L553.7 753.2M749.1 783.4L737.7 783.4L737.7 791.6L731.8 791.6M731.8 791.6L732 825.8M593.4 792L619.5 778.8M631.7 822.1L631.7 808.7L639.4 808.7L639.4 788.7M619.5 778.8L624.9 780.3L629 784.7L634.7 785.7L639.4 788.7M675.3 821.5L673.6 815.9L672.4 810.3L672.6 804.4L671.5 798.8L670.5 793.1M670.5 793.1L657.1 793.1L657.1 786.6L644.3 786.6M639.4 788.7L644.3 786.6M683.1 782.8L683.1 771.8L686.2 771.8L686.2 753.7M683.1 782.8L698 782.8L698 794.4L707.2 794.4M723.9 789.4L713.7 789.4L713.7 794.4L707.2 794.4M723.9 789.4L723.9 774.3L708.2 774.3L708.2 753.5M708.2 753.5L702.9 753.5L702.9 750.6L692.1 750.6M692.1 750.6L688.4 750.6L688.4 753.7L686.2 753.7M695.9 826.2L707.2 794.4M670.5 793.1L674.8 793.1L674.8 782.8L683.1 782.8M731.8 791.6L727.3 791.6L727.3 789.4L723.9 789.4M745 736.5L726.7 736.5L726.7 753.5L708.2 753.5M721.7 713.5L696 721.4M696 721.4L692.1 750.6M617.9 524.2L609.9 524.2L609.9 519.4L605.3 519.4M596.3 542L596.3 535L602.8 535L602.8 520.9M602.8 520.9L605.3 519.4M578.8 521.5L583.2 519M602.8 520.9L591.9 520.9L591.9 519L583.2 519M625.8 494.3L621.5 491.2M625.8 494.3L627.4 514.7M621.5 491.2L611.6 491.2L611.6 497.9L604.4 497.9M605.3 519.4L605.3 511.9L604.4 511.9L604.4 497.9M586.5 608.4L586.5 610.9L580.3 610.9L580.3 614.7M586.5 608.4L592.8 608.9L599.1 608.7M604.2 626.2L604.2 615.9L599.1 615.9L599.1 608.7M604.2 626.2L579 624.8M579 624.8L580.3 614.7M605.8 603.3L603.2 603.3L603.2 608.7L599.1 608.7M579.9 590.4L580.7 596.9L583.1 602.8L586.5 608.4M530.2 569.6L532.1 575.8L531.2 582.4L533 588.7M553.1 567.2L555.6 587.1M533 588.7L548.1 588.7L548.1 587.1L555.6 587.1M572.1 646L579 624.8M572.1 646L568 647.3M542.8 634.5L542.8 627.1L540.9 627.1L540.9 620M580.3 614.7L570 614.7L570 607L557.4 607M540.9 620L547.7 620L547.7 607L557.4 607M573.4 587.8L567.6 587.8L567.6 592.2L561.4 592.2M557.4 607L557.4 596.7L561.4 596.7L561.4 592.2M561.4 592.2L558.1 592.2L558.1 587.1L555.6 587.1M759.2 623.3L759.3 619.3M786.7 610L781.8 610L781.8 606.3L772.8 606.3M772.8 606.3L759.3 619.3M735 622L735 613L731.3 613L731.3 607.9M731.3 607.9L739.5 607.9L739.5 607.4L745 607.4M745 607.4L754.6 607.4L754.6 619.3L759.3 619.3M813.4 603.2L805.2 603.2L805.2 612.5L798.8 612.5M772.8 606.3L772.8 600.1L766.2 600.1L766.2 587.5M745 607.4L745 599L757.1 599L757.1 585.4M757.1 585.4L761.4 585.4L761.4 587.5L766.2 587.5M728.6 606.6L731.3 607.9M724.7 592.6L744.6 574M757.1 585.4L749.3 585.4L749.3 574L744.6 574M787.5 609.7L787.5 595.5L794.5 595.5L794.5 589M794.5 589L785.3 589L785.3 578.4L778.7 578.4M766.2 587.5L774.8 587.5L774.8 578.4L778.7 578.4M736.7 537.7L727.8 537.7L727.8 546.2L722.6 546.2M736.7 537.7L739.1 537.7L739.1 543.9L744.3 543.9M744.3 543.9L748.4 562.3M722.6 546.2L722.6 553.2L721.5 553.2L721.5 561.5M721.5 561.5L726.8 564.5L732.9 565.9L738.5 568.5L744.2 570.8M744.2 570.8L744.2 567.9L748.4 567.9L748.4 562.3M710.7 539.9L715.3 539.9L715.3 546.2L722.6 546.2M735.6 526.2L735.6 533.9L736.7 533.9L736.7 537.7M713.4 565.8L721.5 561.5M744.6 574L744.2 570.8M748.5 512.1L755.3 512.1L755.3 518.4L762.1 518.4M744.3 543.9L749.6 541.7L754.6 538.5L760.3 536.9M760.3 536.9L761.2 530.8L760.8 524.5L762.1 518.4M796.8 500.2L796.8 511.7L790.9 511.7L790.9 517.2M796.8 500.2L784.4 489.6M790.9 517.2L788.8 517.2L788.8 520.7L784.1 520.7M773.4 496.8L772.9 516.4M784.1 520.7L778.1 519.7L772.9 516.4M772.9 516.4L767.3 516L762.1 518.4M90.1 677.9L93.7 671.6M86.3 658.8L86.3 662.1L93.7 662.1L93.7 668.7M93.7 671.6L93.7 668.7M115.2 612.4L115.2 636.8L128.5 636.8L128.5 648M93.7 668.7L128.5 648M160.5 644.6L154.5 644.6L154.5 652.2L147.6 652.2M147.6 652.2L136.5 652.2L136.5 648L128.5 648M482.6 29.4L482.6 32.3L474.2 32.3L474.2 38.9M482.6 29.4L484.9 29.4L484.9 30L489.5 30M489.5 30L489.5 43.3L499 43.3L499 49.7M474.2 38.9L474.2 45.5L472.1 45.5L472.1 50.2M472.1 50.2L480.4 50.2L480.4 55.2L484 55.2M484 55.2L493 55.2L493 49.7L499 49.7M502.6 23.2L502.6 29.8L513.5 29.8L513.5 36.8M502.6 23.2L498.3 23.2L498.3 30L489.5 30M509.8 52.2L499 49.7M512.8 70.9L503 70.9L503 76.4L492.4 76.4M492.4 76.4L489.5 75M489.5 75L489.5 62.9L484 62.9L484 55.2M524 10.7L516.5 8.2M524 10.7L527.6 7.6L532.4 6.9M516.5 8.2L516.5 0L513.9 0L513.9 -9.5M532.4 6.9L532.4 -2.1L538.5 -2.1L538.5 -6.1M528.6 29.9L528.6 16.7L524 16.7L524 10.7M502.6 23.2L502.6 20.2L505.3 20.2L505.3 13.8M505.3 13.8L510.2 13.8L510.2 8.2L516.5 8.2M546.7 15L532.4 6.9M575 77L580.8 77L580.8 71.9L587.4 71.9M576.6 50.2L580.6 50.2L580.6 54.3L588.3 54.3M587.4 71.9L587.4 60.7L588.3 60.7L588.3 54.3M597.6 94.3L597.6 86.2L598.2 86.2L598.2 81M587.4 71.9L592 71.9L592 81L598.2 81M312 269.1L312 293.3L308 293.3L308 305.2M262 301.2L271.6 301.2L271.6 314.9L277 314.9M277 314.9L286.6 314.9L286.6 305.2L308 305.2M336.6 322.6L325.2 322.6L325.2 308.7L310.1 308.7M308 305.2L310.1 308.7M378.7 386.3L362.1 392.5M351.4 352.8L351.4 366.1L350.6 366.1L350.6 385.5M362.1 392.5L356.5 392.5L356.5 385.5L350.6 385.5M588.2 268.5L583 268.5L583 265.9L578.4 265.9M565.5 289.6L565.5 277.2L564.8 277.2L564.8 270.2M578.4 265.9L572.6 265.9L572.6 270.2L564.8 270.2M560.7 329.7L569.3 329.7L569.3 335.1L579.2 335.1M562.7 354.5L568.5 355L574.1 353.4M574.1 353.4L574.1 345.5L579.2 345.5L579.2 335.1M586.7 317.9L586.7 326.7L585 326.7L585 331.2M609.3 336.8L603 336.8L603 340.8L599.4 340.8M599.4 340.8L591.5 340.8L591.5 331.2L585 331.2M585 331.2L579.2 335.1M699.8 464.2L696.9 468L692.3 469.7M681.1 448.9L679.4 455.2L677.5 461.4L676.2 467.8M676.2 467.8L686 467.8L686 469.7L692.3 469.7M702.1 496.3L696.9 496.3L696.9 489.5L691.1 489.5M692.3 469.7L691.7 476.3L690.1 482.8L691.1 489.5M677.9 512L677.9 501.8L678.6 501.8L678.6 490.1M678.6 490.1L683.6 490.1L683.6 489.5L691.1 489.5M561.1 489.3L563.4 492.8M561.1 489.3L562.3 485.9L561.4 482.4M563.4 492.8L579.4 492.8L579.4 497.5L590.6 497.5M561.4 482.4L561.4 479.3L566.9 479.3L566.9 476.6M566.9 476.6L573 476L578.6 473.3L584.7 472.4M584.7 472.4L590.1 472.4L590.1 476.7L592.5 476.7M592.5 476.7L596.5 495.1M596.5 495.1L593.1 495.1L593.1 497.5L590.6 497.5M539 498L547.4 498L547.4 489.3L561.1 489.3M564.7 512.4L564.7 504.4L563.4 504.4L563.4 492.8M542.1 467L554.3 467L554.3 482.4L561.4 482.4M583.2 519L583.2 512.1L590.6 512.1L590.6 497.5M568.1 447.8L568.1 457L566.9 457L566.9 476.6M588.3 450.1L584.7 472.4M610.7 465.9L602.7 465.9L602.7 476.7L592.5 476.7M621.2 478.6L621.2 485.7L621.5 485.7L621.5 491.2M604.4 497.9L596.5 495.1M342.3 498L357 498L357 496.6L375.6 496.6M353.2 453.9L349.6 457.6L344.3 458.9L341.2 463.2M353.2 453.9L358.9 453.9L358.9 464.8L369.3 464.8M375.6 496.6L376 491L374.4 485.8L373.8 480.4L372.2 475.2L369.6 470.2L369.3 464.8M384.1 539.8L345.1 536.5M401 510.2L400.2 509.1M375.6 496.6L380.2 499.8L384.8 502.9L389.8 505.2L395.9 505.4L400.2 509.1M409.8 398.7L411.1 403.7L411 408.9L411.2 414L411.7 419.1M362.1 392.5L362.1 411.4L366.4 411.4L366.4 426.5M366.4 426.5L376.4 426.5L376.4 431.1L395.9 431.1M395.9 431.1L404.5 431.1L404.5 419.1L411.7 419.1M353.2 453.9L357.4 434.8M366.4 426.5L357.4 434.8M369.3 464.8L383.9 464.8L383.9 459.7L398.9 459.7M395.9 431.1L395.9 444L398.9 444L398.9 459.7M400.2 509.1L399.1 459.9M398.9 459.7L399.1 459.9M278.9 539.3L272.9 542.6L268 547.4M250.4 500L248 502.6L246.6 505.9M268 547.4L251.8 547.4L251.8 532.1L243.6 532.1M243.6 532.1L246.6 505.9M204.7 510.6L207 511.7M246.6 505.9L207 511.7M196.5 544.3L201.1 570.4M196.5 544.3L225.1 542.1M225.1 542.1L226.4 542.8M226.4 542.8L226.4 562.1L227.5 562.1L227.5 572.4M201.1 570.4L210.2 570.4L210.2 577.9L219 577.9M219 577.9L222.5 577.9L222.5 572.4L227.5 572.4M170.9 575.7L184.9 575.7L184.9 570.4L201.1 570.4M186 537.5L189.7 537.5L189.7 544.3L196.5 544.3M207 511.7L207 527.9L225.1 527.9L225.1 542.1M243.6 532.1L226.4 542.8M266.1 564.5L266.1 553.3L268 553.3L268 547.4M266.1 564.5L261.4 569L255.6 572.2L250.9 576.8M250.9 576.8L249 577.6M249 577.6L241.1 577.6L241.1 572.4L227.5 572.4M211.4 604.4L219 577.9M227.6 621.8L239.6 621.8L239.6 608.3L249.6 608.3M249.6 608.3L249.6 587.7L249 587.7L249 577.6M337.3 684L345.7 654.5M385.6 654.8L377.5 654.8L377.5 642.1L367.1 642.1M367.1 642.1L345.7 654.5M381.7 606L376 607.6L370.4 609.2L364.7 610.5L359.6 613.6M367.1 642.1L367.1 623L359.6 623L359.6 613.6M313.5 679.7L313.5 663.4L305.5 663.4L305.5 655.6M305.5 655.6L313.5 655.6L313.5 641.8L327 641.8M345.7 654.5L327 641.8M285.7 748.6L284.3 723.5M285.7 748.6L268.8 748.6L268.8 756.1L258.8 756.1M284.3 723.5L269.7 723.5L269.7 717.8L261.3 717.8M261.3 717.8L243.5 725.9M258.8 756.1L254.6 752.7L251.1 748.5L247.3 744.7L242.5 741.9M242.5 741.9L242.5 732.5L243.5 732.5L243.5 725.9M298.7 764.6L285.7 748.6M290.9 718.9L288.2 718.9L288.2 723.5L284.3 723.5M259.1 781.2L259.1 770.7L258.8 770.7L258.8 756.1M232.5 786L232.5 772.7L227.1 772.7L227.1 756.8M227.1 756.8L233.4 756.8L233.4 741.9L242.5 741.9M228.5 715.6L233.3 715.6L233.3 725.9L243.5 725.9M228.5 715.6L206.7 718M227.1 756.8L204.3 752.7M206.7 718L206.7 733.7L204.3 733.7L204.3 752.7M199.5 714L181.2 714L181.2 726L168.8 726M199.5 714L199.5 702.1L194.8 702.1L194.8 691.4M180.9 684.7L185.7 684.7L185.7 691.4L194.8 691.4M180.9 684.7L175.8 686.2L170.7 687.7L166.7 692L161.7 693.9L156.3 694.7L151.6 697.4L146.5 698.8M168.8 726L165.2 722L160.2 719.8L157.3 715.1L151.7 713.6L147.9 709.9L144.4 705.9M144.4 705.9L144.4 702.2M144.4 702.2L146.5 698.8M212.5 675.8L207.9 679.4L204.1 684.1L199.3 687.6L194.8 691.4M212.5 675.8L218.1 678.3L222.7 682.1L227.3 685.8L231.2 690.4M231.2 690.4L228.5 715.6M206.7 718L202.9 718L202.9 714L199.5 714M213.3 653.1L213.3 658.7L213.9 664.4L212.9 670.1L212.5 675.8M178.1 649.2L178.1 670.5L180.9 670.5L180.9 684.7M147.6 652.2L147.6 680.9L146.5 680.9L146.5 698.8M140 710L141.5 707.2L144.4 705.9M93.7 671.6L123.8 671.6L123.8 702.2L144.4 702.2M165.6 757.1L168.6 754.9L170.7 751.7M165.6 757.1L164.3 786.8M170.7 751.7L186.4 751.7L186.4 757.3L197 757.3M164.3 786.8L199.8 786.3M199.8 786.3L199.8 772.3L197 772.3L197 757.3M138.5 755.7L150.7 755.7L150.7 757.1L165.6 757.1M168.8 726L168.8 733.9L170.7 733.9L170.7 751.7M164.2 786.9L164.3 786.8M204.3 752.7L199.7 752.7L199.7 757.3L197 757.3M205.9 792.7L205.9 790.3L199.8 790.3L199.8 786.3M644.5 75.3L625.8 72.8M644.5 75.3L644.5 87.1L645.5 87.1L645.5 99.7M622.9 95.6L623.5 90.6L623.4 85.5L621.5 80.5L622.7 75.5M622.9 95.6L632.7 101.3M622.7 75.5L625.8 72.8M632.7 101.3L645.5 99.7M606.9 101.1L615.5 101.1L615.5 95.6L622.9 95.6M598.2 81L604.7 81L604.7 74.5L609 74.5M609 74.5L622.7 75.5M624.5 123.9L624.5 114.8L632.7 114.8L632.7 101.3M652.3 104L649.8 104L649.8 99.7L645.5 99.7M637.8 33.8L638.1 47.8M638.1 47.8L645.9 51.4M661 30.4L661 36.8L659.9 36.8L659.9 46.6M659.9 46.6L651 46.6L651 51.4L645.9 51.4M638.1 47.8L631.8 51.4L624.7 52.8M624.7 52.8L625.9 59.5L626.6 66.1L625.8 72.8M644.5 75.3L646.9 73.3M645.9 51.4L645.9 64.9L646.9 64.9L646.9 73.3M667.4 93.7L665.3 88.3L661.1 84L658.5 78.9L657.1 73.2M657.1 73.2L652.3 73.2L652.3 73.3L646.9 73.3M679 76.8L687.6 76.8L687.6 69.9L695.5 69.9M679 76.8L679 69.5L668.6 69.5L668.6 66.2M668.6 66.2L670.4 54.8M670.4 54.8L677.7 54.8L677.7 49.5L685.2 49.5M685.2 49.5L689 49.5L689 54.7L696.2 54.7M696.2 54.7L695.5 69.9M677 92.3L676.7 87L679.3 82.1L679 76.8M657.1 73.2L662 73.2L662 66.2L668.6 66.2M659.9 46.6L665.5 46.6L665.5 54.8L670.4 54.8M683.8 34.8L683.8 43L685.2 43L685.2 49.5M700.5 52.6L696.2 54.7M713.3 104.5L701 97M713.3 104.5L716.9 100.4L721.4 97.5L726.1 95M701 97L701 91.1L703.6 91.1L703.6 79.5M726.1 95L726.1 83.6L724 83.6L724 76.9M703.6 79.5L713.9 79.5L713.9 74.3L718.7 74.3M718.7 74.3L724 76.9M718.2 124.1L718.2 115.9L713.3 115.9L713.3 104.5M688.1 100.6L693.2 100.6L693.2 97L701 97M742.3 96.8L734.1 96.8L734.1 95L726.1 95M695.5 69.9L700 74.4L703.6 79.5M739.1 71.5L724 76.9M717 54.1L717 65.1L718.7 65.1L718.7 74.3M489.5 75L483.2 75L483.2 78.5L474 78.5M472.1 50.2L467.8 51.5L464.9 54.8M474 78.5L466.1 78.5L466.1 70.2L462.2 70.2M464.9 54.8L464.9 59.9L462.2 59.9L462.2 70.2M456.9 26.8L448.6 34.7M456.9 26.8L465.9 26.8L465.9 38.9L474.2 38.9M448.6 34.7L448.6 38.9L451.7 38.9L451.7 48.5M464.9 54.8L460.8 54.8L460.8 48.5L451.7 48.5M420.8 11.8L408.6 4.8M420.8 11.8L419.9 16.8L419.7 21.9L420.1 27M408.6 4.8L408.6 9.1L400.8 9.1L400.8 14M420.1 27L414.1 27L414.1 39L403.7 39M403.7 39L398.9 38.5M398.9 38.5L398.9 28.1L400.8 28.1L400.8 14M435.6 30.5L437.7 25L437.2 18.9L440.2 13.7M435.6 30.5L435.2 30.7M420.8 11.8L431 7M420.1 27L427.1 27L427.1 30.7L435.2 30.7M431 7L440.2 13.7M456.9 26.8L456.9 17.3L458.4 17.3L458.4 12.8M448.6 34.7L440.7 34.7L440.7 30.5L435.6 30.5M458.4 12.8L455.8 10.9M440.2 13.7L455.8 10.9M431 7L431 0.3L432.6 0.3L432.6 -5.2M505.3 13.8L499.5 13.8L499.5 4.3L492.1 4.3M482.6 29.4L482.6 19.2L475.6 19.2L475.6 12.2M492.1 4.3L485.1 4.3L485.1 12.2L475.6 12.2M458.4 12.8L463.6 12.8L463.6 11.1L473.1 11.1M475.6 12.2L473.1 11.1M766.1 426.5L777.2 426.5L777.2 429.2L785.5 429.2M765.6 445.7L772.4 445.7L772.4 446L779.1 446M779.1 446L782.6 440.9L783.4 434.8L785.5 429.2M783.3 471.9L786.5 469.6M786.5 469.6L786.2 464.5L788 459.7L789 454.8M779.1 446L789 454.8M790.5 409.6L790.5 420.9L791 420.9L791 427.1M791 427.1L785.5 429.2M796.8 500.2L805.3 500.2L805.3 494L812.6 494M786.5 469.6L806.7 473.3M790.9 517.2L801.4 517.2L801.4 528.1L816.3 528.1M811.5 52.6L807.1 55.4L801.5 54.6L797.2 57.6M812 31.8L804.1 31.8L804.1 29.8L798.8 29.8M790.7 49.3L794.1 53.3L797.2 57.6M790.7 49.3L790.7 41.9L791.3 41.9L791.3 32.5M791.3 32.5L796.2 32.5L796.2 29.8L798.8 29.8M794.6 67.3L797.2 57.6M799.1 -4.4L799.1 13.3L798.8 13.3L798.8 29.8M772.7 52.1L790.7 49.3M777.8 26.2L786.4 26.2L786.4 32.5L791.3 32.5M714.3 686.1L698.4 686.1L698.4 683.2L691 683.2M727.2 649.2L723.9 649.2L723.9 646.5L721.1 646.5M691 683.2L692.4 677.6L691.8 671.7L694.2 666.3L694.6 660.5L695.8 654.9M695.8 654.9L721.1 646.5M716.9 615.6L716.9 621.3L713.8 621.3L713.8 632.4M713.8 632.4L721.1 646.5M685.6 616.4L683.8 619.8M656 615.9L656.3 616.6M656.3 616.6L661.8 617.2L667.5 616.6L672.7 618.9L678.3 619L683.8 619.8M695.8 654.9L682.7 643.5M713.8 632.4L708.4 630.5L702.7 629.3L696.8 629L691 628.3L685.8 625.4M682.7 643.5L682.7 631.4L685.8 631.4L685.8 625.4M683.8 619.8L685.8 625.4M460.3 789.9L460.3 804L447.8 804L447.8 815.9M460.3 789.9L447.9 789.9L447.9 775.4L434.2 775.4M434.2 775.4L427.8 775.4L427.8 787.5L420.9 787.5M420.9 787.5L423.3 792.6L426 797.7L425.1 804L427.3 809.2L430.8 814L432.1 819.5M477.2 787.7L460.3 789.9M435 764.3L435 771L434.2 771L434.2 775.4M392.9 788.3L420.9 787.5M570.9 716.3L582.2 716.3L582.2 722.5L601.2 722.5M581.5 760.8L589.4 760.8L589.4 746.3L600.1 746.3M600.1 746.3L601.2 722.5M619.5 778.8L619.5 765.9L616.6 765.9L616.6 760.2M600.1 746.3L603.5 750.6L609.2 752.2L612.2 757.1L616.6 760.2M576.4 685.5L591.7 685.5L591.7 679.5L609.3 679.5M609.3 679.5L609.3 699.7L610.7 699.7L610.7 715.4M610.7 715.4L604.6 715.4L604.6 722.5L601.2 722.5M691 683.2L690 683.7M682.7 643.5L663.1 651.8M663.1 651.8L662.8 675.4M690 683.7L674.2 683.7L674.2 675.4L662.8 675.4M696 721.4L696 712.7L684.7 712.7L684.7 708.5M690 683.7L687.6 688.4L687.7 693.6L687 698.6L685.5 703.5L684.7 708.5M654.1 750.8L642.1 750.8L642.1 748.7L635.4 748.7M654.1 750.8L657.8 748.5L661.1 745.9M661.1 745.9L655.8 717.6M635.4 748.7L635.4 739.1L619 739.1L619 717.2M619 717.2L649.8 712.6M649.8 712.6L653 714.8L655.8 717.6M644.3 786.6L644.3 767.4L654.1 767.4L654.1 750.8M616.6 760.2L635.4 748.7M686.2 753.7L675 753.7L675 745.9L661.1 745.9M684.7 708.5L672.6 708.5L672.6 717.6L655.8 717.6M610.7 715.4L615.4 715.4L615.4 717.2L619 717.2M609.3 679.5L612.7 674.2L614.7 668.4M614.7 668.4L620.2 669.8L625.7 671.2L630.5 674.5L635.5 677.2L640.5 679.7L646.5 679.9L651.5 682.5M651.5 682.5L651.5 695.5L649.8 695.5L649.8 712.6M651.5 682.5L654.9 682.5L654.9 675.4L662.8 675.4M529.1 608L529.1 603.1L529.2 603.1L529.2 598.2M529.1 608L501.8 612.6M529.2 598.2L512.9 598.2L512.9 579.4L497 579.4M501.8 612.6L499.2 612.6L499.2 607.9L495.3 607.9M495.3 607.9L494.5 599.3M494.5 599.3L494.5 586.4L495.8 586.4L495.8 579.7M495.8 579.7L497 579.4M533 588.7L530 593L529.2 598.2M540.9 620L540.9 613.5L529.1 613.5L529.1 608M503 648.8L503 634.9L501.8 634.9L501.8 612.6M521 564L504.9 564L504.9 579.4L497 579.4M469.3 617.6L478.7 617.6L478.7 607.9L495.3 607.9M450.1 589.5L494.5 599.3M478.5 568.2L486.8 568.2L486.8 579.7L495.8 579.7M806.1 586.3L805.8 565.6M805.8 565.6L808.9 565.6L808.9 558.8L814.9 558.8M794.5 589L801.4 589L801.4 586.3L806.1 586.3M764.5 557.8L780.6 569.6M764.5 557.8L764.5 551.1L770 551.1L770 544.4M770 544.4L779.4 544.4L779.4 540.9L783.9 540.9M788.5 562.7L784 562.7L784 569.6L780.6 569.6M788.5 562.7L786.3 543.3M786.3 543.3L783.9 540.9M778.7 578.4L778.7 574.2L780.6 574.2L780.6 569.6M748.4 562.3L764.5 557.8M760.3 536.9L767 536.9L767 544.4L770 544.4M784.1 520.7L783.5 525.8L783.6 530.8L785 535.8L783.9 540.9M805.8 565.6L793.9 565.6L793.9 562.7L788.5 562.7M811.9 541.5L786.3 543.3M605 56.1L597.7 56.1L597.7 53.2L590.3 53.2M605 56.1L611 56.1L611 49.2L618.2 49.2M590.3 53.2L593.1 47.6L593.4 41.1L596.5 35.6M596.5 35.6L602 34L607.8 34.2L613.2 32.4M618.2 49.2L618.2 43.7L613.5 43.7L613.5 32.7M613.5 32.7L613.2 32.4M609 74.5L605 56.1M588.3 54.3L590.3 53.2M624.7 52.8L620.6 52.8L620.6 49.2L618.2 49.2M587 24.9L591.7 30.3L596.5 35.6M610.9 14.3L613.2 32.4M631.7 28.2L623.9 28.2L623.9 32.7L613.5 32.7M472.8 98.9L463.9 104.4M472.8 98.9L481.6 98.9L481.6 101L492.2 101M492.4 101.1L492.2 101M492.4 101.1L487 121.7M463.9 104.4L464.3 110.8L462.9 116.9L461.1 123M487 121.7L481.6 121.7L481.6 127.3L472.7 127.3M472.7 127.3L461.1 123M492.4 76.4L492.4 93.5L492.2 93.5L492.2 101M474 78.5L472.8 98.9M510.8 103.8L498.1 103.8L498.1 101.1L492.4 101.1M505.2 131.8L501.1 128.4L496.2 126.6L491.2 124.9L487 121.7M484.6 150.7L484.6 142.4L472.7 142.4L472.7 127.3M449.9 129.8L455.5 129.8L455.5 123L461.1 123M234.2 55.2L239.6 55.2L239.6 52.4L243.2 52.4M229.4 31.2L232.5 31.2L232.5 32.8L237.6 32.8M243.2 52.4L243.2 43.5L237.6 43.5L237.6 32.8M329.9 99.2L329.9 88.1L325.7 88.1L325.7 77.2M343.7 101.4L343.7 84.7L350.7 84.7L350.7 76.1M325.7 77.2L335.1 77.2L335.1 71L341.4 71M350.7 76.1L347.3 76.1L347.3 71L341.4 71M338.3 343.6L321 343.6L321 357.9L303.4 357.9M310.1 308.7L300.2 354.5M303.4 357.9L300.2 354.5M518.4 269.8L530.3 262.4M516.4 241.9L527.8 242.9M527.8 242.9L527.8 251.7L530.3 251.7L530.3 262.4M541.3 281L541.3 273.7L546.7 273.7L546.7 265.4M530.3 262.4L538.6 262.4L538.6 265.4L546.7 265.4M564.8 270.2L559.7 268.2L555.9 264.3L551.8 261M546.7 265.4L550 264.1L551.8 261M574.8 210.7L562 210.7L562 203.9L553 203.9M574.8 210.7L575.4 217L574.9 223.2L572.2 229.2L572.3 235.5M572.3 235.5L569.1 237.5M569.1 237.5L559.7 237.5L559.7 241.4L553.3 241.4M546.6 236.9L549.1 236.9L549.1 241.4L553.3 241.4M546.6 236.9L539.8 212.5M553 203.9L539.8 212.5M583.3 204L579.5 207.9L574.8 210.7M557 171.5L557 181.6L553 181.6L553 203.9M595.2 240.3L589.2 240.1L583.8 237.4L578.1 236.4L572.3 235.5M578.4 265.9L578.4 252.9L569.1 252.9L569.1 237.5M551.8 261L551.8 249L553.3 249L553.3 241.4M527.8 242.9L538.6 242.9L538.6 236.9L546.6 236.9M532.7 209.6L535.6 209.6L535.6 212.5L539.8 212.5M586.1 372.3L585.7 368.2L586.9 364.3M586.1 372.3L595.2 379.7M586.9 364.3L596.3 357.9M595.2 379.7L606.8 379.7L606.8 378.5L613.1 378.5M596.3 357.9L606.9 357.9L606.9 362.1L612.1 362.1M613.1 378.5L613.1 367.6L612.1 367.6L612.1 362.1M579 378.3L583.4 378.3L583.4 372.3L586.1 372.3M574.1 353.4L581.2 353.4L581.2 364.3L586.9 364.3M597.9 397.8L597.9 392.1L595.2 392.1L595.2 379.7M599.4 340.8L597.7 346.4L598.5 352.4L596.3 357.9M620 385.1L617.4 385.1L617.4 378.5L613.1 378.5M624.1 354.4L618.5 354.4L618.5 362.1L612.1 362.1M668.3 472.5L669.2 478.7L669 485.1M668.3 472.5L662.8 472.5L662.8 462.8L656.1 462.8M645.4 472.2L645.3 477.7L646.2 483.2L647.4 488.7L646.2 494.3M645.4 472.2L651.2 472.2L651.2 462.8L656.1 462.8M669 485.1L665.8 489.2L661.1 491.6L657.8 495.7L653 497.9M653 497.9L649.3 497.9L649.3 494.3L646.2 494.3M676.2 467.8L672.5 470.5L668.3 472.5M678.6 490.1L672.2 490.1L672.2 485.1L669 485.1M654.5 455.5L656.5 458.9L656.1 462.8M632.5 471L645.4 472.2M625.8 494.3L630.9 495.4L636 494.3L641.1 495.7L646.2 494.3M656.4 513.6L653 497.9M464 458.5L462.7 452.9L460.8 447.5L459.6 441.8L455.9 437L454.3 431.4M464 458.5L453.7 458.5L453.7 476.6L440.7 476.6M440.7 476.6L431.9 476.6L431.9 460.7L423.3 460.7M423.3 460.7L423.3 443.3L431.7 443.3L431.7 427.1M454.3 431.4L449 431.4L449 427L444.9 427M444.9 427L438.1 427L438.1 427.1L431.7 427.1M479.6 464.2L471.9 464.2L471.9 458.5L464 458.5M476.3 414.9L454.3 431.4M435.2 494.7L435.2 488.8L440.7 488.8L440.7 476.6M399.1 459.9L410.5 459.9L410.5 460.7L423.3 460.7M411.7 419.1L417.7 419.1L417.7 427.1L431.7 427.1M447.2 392.2L447.2 415.6L444.9 415.6L444.9 427M330.6 611.8L335.1 611.8L335.1 602.4L341.6 602.4M330.6 611.8L325.1 611.4L319.8 612.1L315 615.8L309.7 616.6L304.1 615.7L298.9 617L293.6 617.9M341.6 602.4L341.6 597.5L339.7 597.5L339.7 588M293.5 579.3L296.7 577.7M293.5 579.3L285.5 607.3M296.7 577.7L320.7 577.7L320.7 582.3L335.7 582.3M293.6 617.9L289.8 617.9L289.8 610.5L285.6 610.5M335.7 582.3L339.7 588M285.5 607.3L285.6 610.5M327 641.8L327 628.6L330.6 628.6L330.6 611.8M359.6 613.6L341.6 602.4M305.5 655.6L297.3 655.6L297.3 647L292.9 647M292.9 647L292.9 630.9L293.6 630.9L293.6 617.9M388.8 561.1L370 561.1L370 588L339.7 588M302.2 545.8L296.7 577.7M266.1 564.5L284.2 564.5L284.2 579.3L293.5 579.3M250.9 576.8L272.6 576.8L272.6 607.3L285.5 607.3M334 545.3L335.7 582.3M249.6 608.3L256.1 609.5L261.4 613.6L267.7 615.3M267.7 615.3L273.7 615.3L273.7 610.5L285.6 610.5M284.8 650.3L267.4 650.3L267.4 641.1L258.6 641.1M284.8 650.3L284.8 659.6L267.4 659.6L267.4 678.8M254.5 677.1L257.9 679.3L261.9 680.3M254.5 677.1L254.5 665.6L240.5 665.6L240.5 648.5M240.5 648.5L258.6 641.1M267.4 678.8L261.9 680.3M267.7 615.3L267.7 626.7L258.6 626.7L258.6 641.1M292.9 647L288.9 648.9L284.8 650.3M296.6 690.9L285.2 690.9L285.2 678.8L267.4 678.8M231.2 690.4L236.3 688.4L240.8 685.5L245.6 683.1L250.3 680.6L254.5 677.1M261.3 717.8L261.9 680.3M228.5 643.3L234.1 646.8L240.5 648.5M389.1 94.2L394.3 94.8L399.1 97.3L404.5 96.9M389.1 94.2L386.3 89L386.1 83L384 77.6M399 68.8L389.1 68.8L389.1 77.6L384 77.6M399 68.8L402.7 68.8L402.7 75.1L409.7 75.1M409.7 75.1L404.5 96.9M406.4 124.7L406.4 113.8L408.5 113.8L408.5 101.7M373.4 103.1L378.6 100L384.2 97.8L389.1 94.2M408.5 101.7L408.5 99.9L404.5 99.9L404.5 96.9M451.7 48.5L439.8 53.8M435.2 30.7L435.2 42.8L430.3 42.8L430.3 49.6M439.8 53.8L430.3 49.6M403.7 39L419 52.4M430.3 49.6L424.9 51.8L419 52.4M398.9 38.5L396.3 39.4M396.3 39.4L396.3 44.1L391.3 44.1L391.3 47.2M399 68.8L399 58.3L391.3 58.3L391.3 47.2M409.7 75.1L412.6 75.1L412.6 69.9L418.4 69.9M419 52.4L419 57.7L418.4 57.7L418.4 69.9M789 454.8L801.1 444.6M791 427.1L794.7 427.1L794.7 432.1L798.5 432.1M798.5 432.1L798.5 439.5L801.1 439.5L801.1 444.6M798.5 432.1L805.2 432.1L805.2 424L813.5 424M652.1 642.6L652.2 629.1M652.1 642.6L625.1 642.6L625.1 656.7L612.8 656.7M652.2 629.1L622.8 626.9M622.8 626.9L622.8 636.6L613 636.6L613 642M613 642L611.6 655M611.6 655L612.8 656.7M656.3 616.6L656.3 622.6L652.2 622.6L652.2 629.1M663.1 651.8L655.8 651.8L655.8 642.6L652.1 642.6M614.7 668.4L614.7 661L612.8 661L612.8 656.7M627.1 608.2L627.1 619.1L622.8 619.1L622.8 626.9M604.2 626.2L608.3 630.8L610.4 636.6L613 642M572.1 646L611.6 655M323.3 103L310.6 103L310.6 95.4L302.7 95.4M294.1 119.6L294.1 107.4L290.4 107.4L290.4 99.8M302.7 95.4L297.2 95.4L297.2 99.8L290.4 99.8M264.9 98.1L286.9 97.9M290.4 99.8L286.9 97.9M348.7 49.2L344 49.2L344 57.1L340 57.1M348.7 49.2L345.3 45.2L343.4 40.3L341.6 35.5M340 57.1L327.8 57.1L327.8 51.5L319.7 51.5M341.6 35.5L337 35.5L337 31.6L331.6 31.6M331.6 31.6L326.1 33.5M319.7 51.5L326.1 33.5M304 4.9L308.9 4.9L308.9 11.4L315 11.4M304 4.9L293.2 12.8M315 11.4L315.9 25.8M296.2 28.9L293.2 12.8M296.2 28.9L300.5 29.9M315.9 25.8L309.7 25.8L309.7 29.9L300.5 29.9M296.2 28.9L286.4 36.6M274.4 16.1L283 9.4M274.4 16.1L274.4 21.9L273.8 21.9L273.8 26.3M293.2 12.8L288.2 10.9L283 9.4M273.8 26.3L278.1 29.6L281.4 34.1L286.4 36.6M362.2 48.9L374.8 48.9L374.8 48.5L389 48.5M362.2 48.9L360 50.9M360 50.9L363.8 72.4M389 48.5L389 61.9L375.4 61.9L375.4 71.5M375.4 71.5L371.8 71.5L371.8 72.5L363.9 72.5M363.9 72.5L363.8 72.4M348.7 49.2L354.5 49.2L354.5 50.9L360 50.9M340 57.1L341.4 71M350.7 76.1L363.8 72.4M391.3 47.2L389 48.5M384 77.6L380.3 73.7L375.4 71.5M369 101.6L366.7 96L367 90L367.2 83.9L364.1 78.5L363.9 72.5M331.6 31.6L340.3 5.3M315 11.4L337 -0M326.1 33.5L321.1 33.5L321.1 25.8L315.9 25.8M272.7 344.3L273.2 345M272.7 344.3L261.8 344.3L261.8 338.5L246.7 338.5M273.2 345L258.1 376.6M246.7 338.5L228.4 352.2M228.4 352.2L228.4 369.8M228.4 369.8L251.1 378.2M251.1 378.2L255.8 378.2L255.8 376.6L258.1 376.6M277 314.9L277 329.9L272.7 329.9L272.7 344.3M300.2 354.5L294.7 352.9L289.6 350.3L283.8 349.5L278.8 346.3L273.2 345M240 310.6L241.6 316.1L243.4 321.5L243.7 327.4L246 332.7L246.7 338.5M214.6 341.3L228.4 352.2M214.9 381.7L219.5 377.9L224.1 373.9L228.4 369.8M245.7 411L251.1 378.2M350.6 385.5L339.6 385.5L339.6 391.3L326 391.3M357.4 434.8L352.7 432.6L348.2 429.9L342.6 429.8L337.9 427.7L333.1 425.6L328.7 422.6L323.7 421.1M326 391.3L326 402.2L323.7 402.2L323.7 421.1M313.5 456.2L313.5 448.4L303.4 448.4L303.4 437M323.7 421.1L314.3 421.1L314.3 437L303.4 437M270.5 448.6L286.3 448.6L286.3 435.5L298.5 435.5M303.4 437L298.5 435.5M451.2 77.1L445.8 74L439.9 71.8M451.2 77.1L451.2 87.1L450.4 87.1L450.4 92.5M450.4 92.5L442.7 92.5L442.7 99.8L432.2 99.8M439.9 71.8L433.9 71.8L433.9 74.6L429 74.6M429 74.6L429.1 98.5M432.2 99.8L429.1 98.5M462.2 70.2L456.6 70.2L456.6 77.1L451.2 77.1M439.8 53.8L439.8 65.2L439.9 65.2L439.9 71.8M463.9 104.4L456.7 104.4L456.7 92.5L450.4 92.5M440.7 125.7L440.7 112.4L432.2 112.4L432.2 99.8M418.4 69.9L424.2 71.2L429 74.6M408.5 101.7L417.1 101.7L417.1 98.5L429.1 98.5M473.1 11.1L473.1 -7.8M455.8 10.9L454.3 5.7L453.9 0.4L452.6 -4.7M801.1 444.6L807 447.3L812.6 450.7L818.6 453M267.9 -6.8L266.5 -0.8L262.3 4.2L261.2 10.4M261.2 10.4L255.5 10.4L255.5 13.9L249.6 13.9M246.3 -8.4L247.7 -3.4L247.9 1.7L247.6 6.7L247.3 11.8M247.3 11.8L249.6 13.9M278.2 -8.9L278.2 -1.8L283 -1.8L283 9.4M274.4 16.1L267.5 16.1L267.5 10.4L261.2 10.4M250.3 24L254.4 29L259 33.5M250.3 24L249.6 13.9M259 33.5L264.6 33.5L264.6 26.3L273.8 26.3M226.4 12.2L231.6 12.5L236.9 12.4L242.1 12.1L247.3 11.8M237.6 32.8L245.9 32.8L245.9 24L250.3 24M317.4 53.3L313 53.3L313 52.7L310.8 52.7M317.4 53.3L317.4 66.6L320.6 66.6L320.6 73.9M310.8 52.7L305.4 52.7L305.4 57L297.1 57M320.6 73.9L314.5 76.6L308.3 78.9M308.3 78.9L302.6 78.9L302.6 68.3L294.6 68.3M297.1 57L297.1 60.6L294.6 60.6L294.6 68.3M319.7 51.5L317.4 53.3M300.5 29.9L302.8 34.3L303.4 39.5L305.4 44.1L307.5 48.7L310.8 52.7M325.7 77.2L323.2 77.2L323.2 73.9L320.6 73.9M286.4 36.6L284.1 41.3L284.6 46.6M284.6 46.6L289.7 46.6L289.7 57L297.1 57M302.7 95.4L302.7 85.8L308.3 85.8L308.3 78.9M286.9 97.9L286.9 85.1L287.6 85.1L287.6 73.6M287.6 73.6L294.6 68.3M245 52.8L250.1 51.2L254.8 48.8L259.1 45.7M245 52.8L245 62.3L251.8 62.3L251.8 70.5M259.1 45.7L265.8 45.7L265.8 52.7L271 52.7M271 52.7L271 61L270.2 61L270.2 68.4M251.8 70.5L257.1 70.5L257.1 75.2L263.5 75.2M263.5 75.2L266.1 71.1L270.2 68.4M243.2 52.4L245 52.8M259 33.5L259.1 45.7M237.8 79.3L243.9 79.3L243.9 70.5L251.8 70.5M284.6 46.6L278.2 50.6L271 52.7M287.6 73.6L276 73.6L276 68.4L270.2 68.4M264.3 97.5L263.5 75.2M400.8 14L395.4 14L395.4 7.7L384.4 7.7M384.4 7.7L384.4 2.9L392.6 2.9L392.6 -6.6M357.2 13.4L369.5 7.2M357.2 13.4L357.6 25.1M364.1 32.3L375.6 32.3L375.6 29.1L383 29.1M364.1 32.3L357.6 25.1M383 29.1L380.7 23.2L379.6 16.9L377.7 10.9M377.7 10.9L369.5 7.2M340.3 5.3L347.4 5.3L347.4 13.4L357.2 13.4M369.3 -9.7L369.5 7.2M341.6 35.5L347.6 33.1L352 28.2L357.6 25.1M396.3 39.4L391.1 36.9L387.7 32.1L383 29.1M362.2 48.9L362.2 38.7L364.1 38.7L364.1 32.3M384.4 7.7L380.1 7.7L380.1 10.9L377.7 10.9M305.1 373.6L285.2 373.6L285.2 388.1L274.5 388.1M305.1 373.6L305.1 378.8L312.6 378.8L312.6 383.7M312.6 383.7L312.6 402.7L289 402.7L289 415.1M274.5 388.1L274.5 395.7L274.4 395.7L274.4 406.5M274.4 406.5L289 415.1M303.4 357.9L303 363.3L303.7 368.5L305.1 373.6M258.1 376.6L266.3 376.6L266.3 388.1L274.5 388.1M326 391.3L312.6 383.7M298.5 435.5L298.5 427.7L289 427.7L289 415.1M255.9 415.9L260.2 413L264.8 410.5L270 409.3L274.4 406.5"/></g>
<!--MAPSTART-->
<g id="water" fill="#004263" stroke="none">
<path d="M6 705.2L12.6 703.1L16 700.5L20.9 698.9L29.3 698.9L29.3 704.1L35.6 707.3L41 706.5L46.1 705.2L47.1 713.6L51.3 715.7L52.4 724L57 725.5L62.8 726.1L71.2 727.2L73.3 734.5L77.5 738.7L82 740L88 740.8L92 742L96.3 745L105.7 751.5L113.8 753L120 745L130 742.6L138 746.7L146 751.5L147 760L161.6 760L165 754L170 749L176 745.5L182.7 744.5L190 745.5L197 749L203 754L207.3 760L240.7 760L239.8 755.9L232.8 754.1L228.4 748L225.8 741.8L217.9 741L207.3 737.5L200.3 735.7L202 725L206 718L210.8 712.8L216 709L222.4 706L224 697L225.9 688L228 680L227.6 671.7L220 672L212 674L205.2 676.9L202.6 682L197.4 687.2L195.7 694.1L189.7 694.1L186.2 689L180.2 689L176.7 683.8L179.3 679.5L186.2 678.6L191.4 671.7L196.6 668.3L205.2 665.7L208.6 662.4L212.3 659.9L216 656.2L214.1 654.4L213.5 651.3L219.7 651.3L220.9 655.6L228.3 652.5L234.4 650.1L240 648.2L240.6 645.8L251.7 645.8L255.4 648.8L259 651.9L264 652.5L268.9 649.4L273.8 650.7L280 653.1L284.9 650.1L286.1 648.8L291 648.2L297.2 651.9L302.1 654.4L304.6 651.9L305.8 639.6L307 632.2L310.7 626.1L313.2 622.4L318.1 624.2L321.2 629.8L319.9 639.6L323 645.8L326.7 649.4L330.4 654.4L334.1 659.3L335.3 661.1L336.6 661.2L350.3 657.8L364.1 653.4L376.2 650.9L393.4 648.3L407.2 646.9L421 647.9L436.6 650L440 650.9L450.3 654.3L460.7 658.6L471 663.8L481.4 670.7L490 676.7L496.9 682.8L503.8 687.1L509 691.4L506.4 696.6L507.2 703.4L510.7 712.1L515.9 711.2L524.5 712.1L533.1 719L540 718.1L546.9 713.8L557.2 707.8L564.1 701.7L571 695.7L577.9 689.7L583.1 686.2L579.7 684.5L584 679.3L588.3 676.7L595.2 674.1L601.2 675L611.8 673.9L618.1 681.3L628.7 685.6L637.2 691.9L643.6 701.4L649.9 708.9L657.3 714.2L657.3 724.7L664.7 731.1L671.1 737.5L677.5 744.9L681.7 754.4L680.6 762.9L684.9 763.9L685.9 757.6L698.6 757.6L702.9 762.9L705 771.4L709.2 781.9L713.5 784.1L711.4 791.5L712 806L6 806Z"/>
<path d="M352 657.4L354.3 654L356.6 649.4L358.8 646L361.7 643.7L360.6 642.6L357.5 645L355 648.5L352.5 652L349.5 655.5L350 658Z"/>
<path d="M344.5 656L346 652.5L348.5 652L349 655L347 657.5Z"/>
<path d="M369.1 652.8L372.6 648.3L376.6 644.8L378.3 639.1L375.4 631.7L377.7 633.4L380 636.9L382.3 638L382.3 643.1L384.6 643.1L386.3 636.9L388 631.7L389.7 632.3L388.6 638L392 641.4L398.3 643.7L393.1 644.3L389.7 646.6L384 648.8L377.1 651.1L371.4 653.4Z"/>
<path d="M418.2 644.3L422.8 643.1L427.4 640.8L428.5 638L430.8 640.3L433.1 643.1L438.8 641.4L445.7 640.3L448.5 638.6L450.2 641.4L453.7 640.8L454.8 646L452.5 648.8L449.1 645.4L444.5 646.6L439.9 648.8L436.5 647.1L432 646.6L427.4 647.7L421.7 647.7Z"/>
<path d="M473.6 656L477 655L481.4 655.2L484 657L486.6 659.5L491 655L495.2 651.7L498.6 654.3L495 657L493.4 660.3L489 663L486.6 664.7L484.8 669L488 671L491.7 672.4L495 674L498.6 675.9L503.8 679.3L508.1 679.3L505.5 681.9L500.3 681L496 679L491 676L486 672L481 668L477 663L474 660Z"/>
<path d="M509 693.1L513.3 696.6L515 703.4L514.1 710.3L511.5 709L509.5 703L508.5 697Z"/>
<path d="M522.8 710.3L528 709.5L533.1 708.6L540 705.2L543.4 701.7L548.6 700.9L546 706.9L545.2 712.1L541 715.5L536 716.5L531 714.5L526 712Z"/>
<path d="M548 711L556 706L564 699.5L571 693.5L577 688.5L575 693L568 699L560 705.5L552 710.5Z"/>
<path d="M802 583L806 580L806 650L803 646L802 630L804 615L802 600Z"/>
</g>
<g id="isl" fill="#5d4f4b" stroke="none">
<path d="M15.7 717.7L23 715.7L33.5 720.9L39.8 721.9L35.6 727.2L30.4 729.3L23 724Z"/>
</g>
<g fill="none" stroke="#000" stroke-width="4.2" stroke-linejoin="round" stroke-linecap="round">
<path d="M783 646L782 652L781 658L781 664L783 669L786 674L785 679L784.5 684L787 689L791 694L792.5 700L792.6 707.4L790 713L787.6 717.4L785 722L784.2 727.5"/>
</g><g fill="none" stroke="#004263" stroke-width="2.4" stroke-linejoin="round" stroke-linecap="round">
<path d="M783 646L782 652L781 658L781 664L783 669L786 674L785 679L784.5 684L787 689L791 694L792.5 700L792.6 707.4L790 713L787.6 717.4L785 722L784.2 727.5"/>
</g>
<g id="roads" fill="none" stroke="#8a7400" stroke-width="0.95" stroke-linejoin="round">
<path d="M403.4 135.5L397.2 184.8L398.7 250L396.6 253.6L395.8 277.3L396.6 301L399 324.6L401.7 348.2L404.5 368L405.7 387.6L409.6 407.3L417.5 427L425.4 442.8L431.3 458.6L440 472.2L432.6 487L422.7 509.1L410.4 528.8L398.1 546.1L380.8 565.8L363.6 578.1L343.9 591.6L326.7 599L311.9 603.9L307 615L305.2 619.9L305.8 627.3M258.7 473.9L281.5 462.5L309 435L328.8 415.2L344.6 403.4L368.2 397.5L388 387.6L405.7 375.8L423.4 356.1L447 332.5L470.7 308.8L486.5 285.2L502.2 253.6L510 241L521.7 238.7M405.7 375.8L423.4 366L455 362L486.5 360.9L520.8 353.2L551.6 350.1L579.3 348.6L597.8 353.2L622.4 359.3L650.2 365.5L681 370.1L721 373.2L751.8 371.7L773.3 359.3L798 347L805.7 340.9M438.4 472.4L470.7 466.5L490 464.1L508.5 445.6L523.9 427.1L539.3 408.6L551.6 387.1L567 368.6L582.4 353.2L594.7 334.7L613.2 319.3L637.8 307L662.5 294.7L687.1 282.4L711.7 270L730.2 257.7L741.6 250L750.9 244.8L769.4 237.1L787.8 229.4L806.3 221.7M521.7 238.7L536.2 251.6L539.3 270L543.9 288.5L554.7 303.9L567 322.4L579.3 337.8L585.5 347L585.5 356.3L594.7 371.7L604 390.1L613.2 405.5L628.6 422.5L637.8 430.2L633.2 433.2L630.1 451.7L628.6 470.8L634.7 517L647.1 544.7L653.2 575.5L662.5 606.3L674.8 627.9L690.2 649.4L703.9 658.8L717.3 687.3L730.7 714.1L744 740.9L750.7 767.7L754.1 791M583.9 293.1L576.2 307L571.6 322.4L579.3 337.8M637.8 430.2L650.2 442.5L662.5 452.3L690.2 461.6L736.4 469.3L767.2 477L798 487.7L805.7 493.9M595 347.5L594.5 351.2L593.1 354.6L590.9 357.2L588.1 358.9L585 359.5L581.9 358.9L579.1 357.2L576.9 354.6L575.5 351.2L575 347.5L575.5 343.8L576.9 340.4L579.1 337.8L581.9 336.1L585 335.5L588.1 336.1L590.9 337.8L593.1 340.4L594.5 343.8L595 347.5M639 430L638.3 433.5L636.5 436.1L634 437L631.5 436.1L629.7 433.5L629 430L629.7 426.5L631.5 423.9L634 423L636.5 423.9L638.3 426.5L639 430M739.5 254.6L745.6 263.9L767.2 279.3L791.8 294.7L805.7 307M6.3 661.2L20.9 657L41.9 649.7L67 643.4L83.8 645.5L88 645.5L100.5 641.3L125.7 640.3L146.6 641.3L167.5 648.6L184.3 656L200 654.9L209.4 652.5L212.3 649.4L224.6 645.8L241.8 642.7L254.1 643.9L273.8 643.9L286.1 640.2L298.4 634.7L305.8 627.3L313.2 622.4L323 624.9L336 626.6L342.9 627.1L349.7 630.6L358.8 632.9L365.7 636.9L373.7 638.6L378.3 636.3L385.1 635.1L387.4 630.6L395.4 625.4L404.5 621.5L410.4 619.9L430.1 618.7L444.9 617.5L457.2 621.2L470 619.9L490 615.5L514.6 617.1L536.2 624.8L567 637.1L597.8 640.2L628.6 643.3L659.4 649.4L690.2 657.1L721 661.7L751.8 658.7L782.6 654L798 652.5M83.8 645.5L92.1 654.9L96.3 663.3L106.8 669.6L119.4 672.7L131.9 673.8L144.5 680L157.1 683.2L161.3 686.3L167.5 682.1L178 669.6L184.3 659.1L186.4 650.7L190.6 640.3M6.3 617.2L12.6 627.7L12.6 644.5L15.7 660.2M181.6 6.2L192.4 18.5L200.1 40L200.1 77L198.6 92.4L192.4 107.8L186.2 129.4L177 150.9L164.7 172.5L149.3 197.1L146.2 206.3L152.4 215.6L161.6 224.8L164.7 240.2L167.8 260.8L172.5 291.6L175.5 322.4L181.7 353.2L183.2 377.8L175.5 402.5L164.8 427.1L160.1 458.5L150.9 477L138.6 501.6L132.4 532.4L127.8 563.2L127.7 590L126.7 610.9L127.7 631.9L134 648.6L136.1 657L133 673.8M200.1 70.8L223.2 58.5L227.8 43.1L229.3 18.5L240.1 7.7L250.9 18.5L260.1 33.9L263.2 49.3L272.5 58.5L290.9 60L303.3 53.9L315.6 58.5L334.1 70.8L355.6 86.2L374.1 101.6L386.4 112.4L401.8 123.2L406.2 135.5L427.7 157.1L446.2 184.8L461.6 203.3L477 218.7L489.3 234.1L501.6 238.7L514 235.6L521.7 238.7M6.2 257.7L46.2 253.1L77 243.9L101.6 236.2L130.8 229.4L161.6 224.8L180.1 215.6L204.7 203.3L229.3 187.9L254 175.5L284.8 166.3L315.6 160.1L346.4 154L371 147.8L389.5 135.5L401.8 127.8L420 132L437 130.9L477 137L514 137L532.4 147.8L550.9 158.6L569.4 158.6L584.8 161.7L600.2 154L615.6 149.4L634.1 150.9L652.5 146.3L658.5 143.2L670.8 134L689.3 123.2L713.9 110.9L741.6 95.5L763.2 84.7L787.8 78.5L806.3 72.4M658.5 143.2L670.8 154L673.9 166.3L683.1 172.5L686.2 184.8L701.6 190.9L717 187.9L741.6 183.2L769.4 177.1L794 174L806.3 175.5M717 189.4L723.2 203.3L735.5 215.6L747.8 218.7L755.5 231L758.6 250L761 245.4L767.2 270L773.3 282.4M173.8 226.4L173.2 229L171.5 231.1L169.1 232.2L166.5 232.2L164.1 231.1L162.4 229L161.8 226.4L162.4 223.8L164.1 221.7L166.5 220.6L169.1 220.6L171.5 221.7L173.2 223.8L173.8 226.4M394.7 168.5L389.9 167.2L385.3 165.4L380.9 162.9L377 159.8L373.5 156.2L370.6 152.2L368.2 147.8L366.5 143.1L365.4 138.3L365 133.3L365.3 128.3L366.3 123.4L368 118.7L370.3 114.3L373.1 110.2L376.6 106.6L380.5 103.4L384.8 100.9L389.4 98.9L394.2 97.7L399.1 97L404.1 97.1M404.1 97.1L408.8 97.9L413.3 99.2L417.6 101.1L421.6 103.5L425.3 106.5L428.6 109.9L431.4 113.7L433.6 117.8L435.3 122.2L436.5 126.7L437 131.4L436.9 136.1L436.1 140.8L434.8 145.3L432.9 149.6L430.5 153.6L427.5 157.3L424.1 160.6L420.3 163.4L416.2 165.6L411.8 167.3L407.3 168.5M411 132L410.2 135.5L408 138.3L404.8 139.8L401.2 139.8L398 138.3L395.8 135.5L395 132L395.8 128.5L398 125.7L401.2 124.2L404.8 124.2L408 125.7L410.2 128.5L411 132M472.4 6.2L470.8 24.6L464.7 40L452.4 52.4L433.9 60L427.7 77L418.5 92.4L412.3 107.8L409.2 123.2M587.9 6.2L587.9 21.6L594 37L603.3 46.2L604.8 61.6L600.2 77L604.8 95.5L591 107.8L597.1 123.2L609.4 135.5L615.6 147.8L591 160.1L578.6 181.7L566.3 197.1L554 212.5L538.6 227.9L523.2 238.7M6.2 460L46.2 464.6L92.4 472.3L123.2 473.9L150.9 480L184.8 477L231 473.9L258.7 473.9L283.3 464.6L301.8 449.2L320 433.3L344.6 403.4M258.7 473.9L246.4 501.6L237.1 523.2L218.7 544.7L212.5 572.4L206.3 600.2L200 617.2L190.6 640.3M805.7 535.5L794.9 563.2L787.2 587.8L784.1 612.5L790.3 637.1L793.4 655.6L794.9 674L799 700L804 720M793 655.6L792.3 659.5L790.4 662.6L787.6 664.4L784.4 664.4L781.6 662.6L779.7 659.5L779 655.6L779.7 651.7L781.6 648.6L784.4 646.8L787.6 646.8L790.4 648.6L792.3 651.7L793 655.6"/>
</g>
<g id="states" fill="none" stroke="#000" stroke-width="1.2" stroke-linejoin="round">
<path d="M201.6 6.2L202 7.7L202.3 9.2L202.8 10.8L203.3 12.2L203.9 13.5L204.7 14.8L205.4 16L206.2 17.3L206.8 18.6L207.3 20.1L207.6 21.6L207.9 23.1L208.1 24.6L207.9 26L207 27.1L205.8 28.1L204.5 29.1L203.4 30.2L202.7 31.6L202.2 33L202.1 34.4L202.6 35.5L203.5 36.5L204.4 37.6L205.3 38.7L206 40.1L206.6 41.6L207.1 43.1L207.8 44.6L208.5 45.9L209.3 47.1L210 48.4L210.8 49.6L211.4 50.8L211.9 52.2L212.3 53.5L212.8 54.8L213.4 56L214.4 57.1L215.6 58L216.8 59L218 59.8L219.2 60.1L220.3 59.6L221.2 58.8L221.6 57.8L221.2 56.9L220.5 56.2L220.3 55.6L221 55.2L222.3 54.9L223.7 54.5L224.9 53.9L225.9 53.3L226.5 53.3L226.5 54.1L226.2 55.4L225.9 56.9L226 58.2L226.7 59.1L227.9 59.7L229.1 60.4L230.3 61L231.2 61.9L231.7 63.2L232 64.7L232.1 66.2L232 67.7L231.4 69L230.5 70.2L229.6 71.5L228.7 72.7L227.9 74L227.5 75.4L227.6 76.7L228.2 77.7L229.3 78.5L230.3 79.4L230.8 80.3L230.4 81.4L229.5 82.6L228.5 83.7L227.5 84.6L226.5 85.5L226.1 86.4L226.3 87.4L227 88.6L227.6 89.7L227.8 90.8L227.4 91.9L226.5 92.9L225.6 94L224.9 95.2L224.3 96.4L223.5 97.4L222.3 98L220.9 98.2L219.6 98.1L218.6 97.3L217.8 96.2L216.9 95.1L215.9 94.1L214.7 93.3L213.5 93.3L212.6 94.1L211.9 95.5L211.4 97L210.9 98.6L210.4 100.1L210.1 101.7L209.6 103.1L209.1 104.5L208.2 105.7L207.3 106.6L206.4 106.8L205.7 106.1L205.2 104.7L204.9 103.3L204.7 101.9L204.6 100.6L204.2 99.5L203.3 98.6L202.1 97.9L200.9 97.6L199.8 97.9L198.8 98.6L198.1 99.5L197.8 100.6L197.8 101.9L198.1 103L198.9 103.9L200 104.8L201 105.6L201.6 106.6L201.4 107.9L200.8 109.4L200.4 110.9L200.5 112.4L200.8 114L201.1 115.4L200.9 116.6L200.1 117.4L198.8 117.9L197.4 118.4L196.2 118.9L195.5 119.6L195.8 120.7L196.7 121.9L197.7 123.2M197.7 123.2L197.3 123.4L196.8 123.7L196.4 123.8L195.9 124L195.4 124L194.9 124L194.3 124L193.8 124L193.3 123.9L192.9 123.8L192.4 123.7L191.9 123.6L191.4 123.4L190.8 123.4L190.3 123.3L189.8 123.2L189.3 123L188.8 122.9L187.2 123.9L186.7 124L186.2 124.1L185.7 124.2L184 127.7L183.7 128.1L183.4 128.5L183.3 131.1L183.3 131.6L183.3 132.1L183.4 132.6L185 133.2L185.1 133.6L185.3 134.1L185.6 134.5L185.8 135L186.1 135.4L186.5 135.8L186.8 136.1L187.1 136.3L187.4 136.6L187.8 137L188.2 137.3L188.4 136.9L188.7 137.3L189 137.7L189.3 138.1L189.6 138.6L189.8 138.4L189.9 138.9L190 139.4L190 139.9L190.1 140.1L189.9 140.6L189.8 141.1L189.7 141.6L189.5 142L189.1 142.4L188.7 142.6L188.2 142.6L187.7 142.6L187.2 142.4L186.8 142.1L186.4 141.8L186.1 141.4L185.7 141.1L185.4 140.7L185.1 140.3L184.7 140L184.3 139.7L183.8 139.6L183.3 139.5L182.8 139.6L182.3 139.8L182 140.1L183.2 141.4L183 141.8L182.9 142.3L182.8 143.1L182.9 143.6L183.1 144.1L183.4 144.5L183.7 144.9L184 145.3L184.4 145.6L184.7 146L185.1 146.3L185.5 146.6L185.9 146.8L186.3 147.4L186.7 147.6L187.1 147.9L187.6 148.1L188 148.4L188.3 148.8L188.6 149.2L188.9 149.6L189.2 149.1L189.5 149.5L189.7 149.9L189.2 149.9L189.4 150.4L189.6 150.9L189.7 151.3L189.8 151.7L189.9 152.2L189.9 152.7L190 153.2L190 153.8L189.9 154.3L189.8 154.8L189.7 155.2L189.6 155.7L189.3 156.1L189.1 156.5L188.8 157L188.6 156.5L188.2 156.7L187.7 157L187.7 156.8L187.3 157L186.8 157.2L186.4 157.5L186.4 158.1L186.1 158.4L185.8 158.8L185.6 159.2L185.4 159.8L185.4 160.3L185.5 160.8L185.6 161.2L185.9 161.7L186.1 162.1L186.4 162.5L186.8 162.9L187.1 163.2L187.5 163.6L187.8 164L188.1 164.3L188.4 164.7L188.7 165.2L188.9 165.6L189 166.1L189 166.6L189.8 166.3L189.8 166.8L189.6 167.3L188.3 166.8L188.8 165.8L188.5 166.2L188.1 166.5L187.6 166.7L187.1 166.8L186.9 166L186.4 166L185.9 166L185.4 165.8L184.9 165.7L184.4 165.6L183.9 165.4L183.4 165.3L182.9 165.3L182.4 165.3L182 165.4L181.5 165.6L181.1 165.9L180.8 166.3L180.9 166.9L180.9 167.4L180.9 167.9L180.9 168.4L181.1 168.8L181.3 169.2L181.5 169.7L181.8 170.1L182.1 170.5L182.3 171L182.5 171.5L182.7 171.9L182.9 172.4L183.1 172.8L182.4 174.2L182.3 174.7L182.1 175.1L181.9 175.6L180.7 176.4L180.3 176.6L179.6 176.1L179.1 176.2L178.4 176.3L177.9 176.2L177.5 176.1L177 175.9L176.6 175.6L176.2 175.3L175.8 175L175.4 174.6L175.1 174.3L174.8 173.8L174.6 173.4L174.3 173L174.1 172.6L173.8 172.1L173.4 171.7L173.1 171.3L172.8 170.9L172.5 170.5L172.2 170.2L171.8 169.8L171.4 169.5L171 169.3L168.4 170.4L167.9 170.4L167.4 170.5L166.9 170.6L164.3 175.4L164.1 175.9L165.5 176.6L165.7 179L165.9 179.4L166.2 179.8L166.5 180.2L166.9 180.5L167.4 181L167.9 181.1L168.4 181.2L168.9 181.3L169.4 181.3L169.9 181.3L170.4 181.2L170.9 181.2L171.4 181.1L171.9 181L172.4 181L172.9 180.9L173.4 180.9L173.9 181L174.4 181L174.9 181.2L175.3 181.3L175.8 181.6L176.2 181.9L176.5 182.2L176.8 182.6L177.1 183.3L176.4 183.9L176.4 184.4L176.4 184.9L176.4 186.2L176.1 186.7L175.8 187.1L175.5 187.4L174.8 188.7L174.3 188.7L173.8 188.8L173.3 188.7L172.8 188.7L172.3 188.7L171.8 188.6L171.5 188.2L171 188L170.6 187.8L170.1 187.6L169.7 187.4L169.2 187.3L168.7 187.2L168.2 187.1L167.9 186.9L167.4 186.9L166.9 186.9L166.4 187L166 187.2L165.5 187.4L165.7 188.6L165.4 188.9L165 189.3L164.7 189.6L164.4 190.1L164.2 190.5L164 191L163.9 191.5L163.7 191.9L163.6 192.4L163.5 192.9L163.5 193.4L163.4 193.9L163.3 194.4L163.2 194.9L163 195.4L162.9 195.8L162.7 196.3L162.5 196.7L162.2 197.2L161.9 197.6L161.5 197.9L161.1 198.1L160.6 198.4L160.2 198.6L159.7 198.6L159.2 198.6L158.7 198.6L158.2 198.4L157.8 198.2L157.3 197.9L156.9 197.6L156.6 197.3L156.2 196.9L155.9 196.5L155.6 196.1L155.3 195.7L155 195.3L154.7 195L154.3 194.6L153.9 194.3L153.5 194L153.1 193.7L152.7 193.5L152.2 193.4L151.7 193.3L151.2 193.3L150.3 193.8L149.8 194L150.7 195.8L150.4 196.1L148.6 198.6L148.6 199.1L148.6 199.6L148 204.5L148.4 204.8L148.9 204.9L149.4 205.1L149.9 205.2L150.4 205.3L150.9 205.4L151.8 206.8L152.3 206.8L152.8 206.8L153.3 206.9L153.8 207L154.2 207.3L154.7 207.7L155.3 207.8L155.6 208.2L155.8 208.7L156 209.2L156 209.7L156.1 210.2L156 210.7L155.8 211L155.6 211.5L155.4 211.9L155.2 212.4L155 212.8L154.8 213.3L153.9 212.2L153.6 212.6L153.3 213L153 213.4L153 210.3L152.6 210.6L152.3 211L152 211.4L153.9 210.8L153.6 211.2L153.4 211.7L153.2 212.1L153.2 212.4L153.1 212.8L153 213.3L153 213.8L153 214.3L153.1 214.8L153.2 215.3L153.3 215.8L153.4 216.3L153.6 216.8L153.7 217.2L153.9 217.7L154 218.3L154.2 218.7L154.4 219.2L154.5 219.7L154.6 220.2L154.7 220.7L155.1 220.8L155.3 221.2L155.4 221.7L155.5 222.2L155.7 221.2L156 221.6L156.3 222L155.7 222.1L156.1 222.5L156.3 222.9L156.5 223.4L156.7 223.8L156.9 224.3L157 224.8L157 225.3L157.1 225.8L157 226.4L156.8 226.9L156.6 227.3L156.4 227.7L156.2 227.1L155.7 227.2L155.2 227.3L154.7 227.3L154.2 227.4L154.5 226.5L154 226.4L153.5 226.3L153 226.3L152.5 226.2L152.3 226.1L151.8 226.1L151.3 226.1L150.8 226.2L150.3 226.4L149.9 226.5L150 227.7L149.6 228L149.3 228.4L149.1 228.9L149.1 229.4L149.2 229.9L149.3 230.3L149.6 230.7L150 231.1L150.3 231.4L150.7 231.8L151.1 232.1L151.4 232.4L151.8 232.8L152 233.3L152.2 233.7L152.2 234.2L152.1 234.7L151.9 235.2L151.2 235L150.9 235.3L150.4 235.4L149.9 235.6L149.4 235.6L148.9 235.6L148.6 235.5L148.1 235.4L147.6 235.3L147.1 235.2L146.6 235L146.2 234.8L145.7 234.6L144.9 234.8L144.4 234.8L143.9 234.7L143.4 234.7L142.9 234.7L142.4 234.7L141.9 234.8L141 236L140.6 236.3L140.3 236.6L140 237L139.7 237.5L140.5 238.8L140.4 239.3L140.4 239.8L140.4 240.3L140.5 241L140.6 241.5L140.7 242L140.9 242.5L141.1 242.9L141.3 243.4L141.5 243.9L141.8 244.3L142 244.7L142.2 245.2L142.5 245.5L142.7 246L142.8 246.5L143 247L143.1 247.4L143.1 247.9L143 248.3L142.9 248.8L142.7 249.3L142.2 249.6L141.8 249.8L141.3 249.9L140.8 249.8L140.6 249.5L140.3 249.1L140.1 248.6L140 248.1L140 247.6L140.1 247.1L140.1 246.6L139 246.5L138.9 246L138.7 245.6L138.5 245.1L138.2 244.7L137.9 244.4L139.4 243.4L138.9 243.1L138.4 243.1L138.3 244.6L137.8 244.8L137.7 245L137.4 245.3L137.1 245.8L136.9 246.2L136.8 246.7L136.7 247.2L136.7 247.7L136.7 248.2L136.7 248.7L136.8 249.2L136.8 249.7L136.7 250.2L136.6 250.7L136.4 251.2L136.2 251.6L135.8 252L135.4 252.3L134.9 252.2L134.6 252.3L134.1 252.5L133.6 252.5L133.1 252.5L132.8 252.4L132.3 252.4L131.8 252.4L131.3 252.3L130.8 252.2L130.3 252L129.9 251.7L129 252.1L128.6 251.9L128.1 251.7L127.6 251.5L127.2 251.3L126.7 251.2L126.2 251L125.8 250.8L125.3 250.7L124.8 250.6L124.3 250.6L123.8 250.6L123.3 250.6L122.6 251.2L122.1 251.4L121.7 251.7L121.3 252L121 252.4L122.5 253.7L122.3 254.2L122.2 254.7L122.1 255.2L122.1 255.7L122.2 256.1L122.3 256.6L122.5 257.1L122.7 257.6L122.8 258.1L123.1 258.6L123.3 259L123.5 259.5L123.6 259.9L123.8 260.4L123.7 261.2L123.8 261.7L123.7 262.2L124.2 262.9L124 263.6L123.8 264.1L123.6 264.6L123.3 265L123 265.6L122.7 266L122.4 266.4L122 266.8L121.7 267.1L121.3 267.5L120.9 267.8L120.5 268.2L120.1 268.5L119.7 268.8L119.4 269.1L119 269.4L118.6 269.8L118.3 270.1L117.9 270.5L117.6 270.9L117.3 271.3L117.1 271.7L116.9 272.2L116.7 272.7L118.2 273.4L118.1 273.9L118.1 274.4L118.1 274.9L118.2 275.4L118.3 275.9L118.4 276.4L118.6 276.8L118.8 277.3L119 277.6L119.3 278L119.5 278.5L119.7 278.9L119.9 279.4L120.1 279.4L120.2 279.9L120.2 280.4L120.2 280.9L120.4 280.8L120.2 281.3L120.4 282L120 282.4L119.8 282.4L119.4 282.6L118.9 282.7L118.4 282.8L117.9 282.8L117.4 282.8L117 282.6L116.5 282.5L116 282.3L115.6 282.1L115.1 281.9L114.7 281.7L114.2 281.5L113.8 281.2L113.3 281L112.9 280.8L112.4 280.6L112 280.4L111.5 280.3L111 280.2L110.5 280.1L110 280.1L109.5 280.2L109 280.3L108.5 280.4L108.1 280.7L107.7 280.9L109.2 283L108.9 283.3L108.6 283.8L108.5 284.2L108.3 284.7L108.3 285.2L108.3 285.7L108.4 286.2L108.6 286.7L108.7 287.2L109 287.6L109.2 288.1L109.4 288.5L109.7 289L109.9 289.4L110.1 289.9L110.2 290.3L110.4 290.8L110.5 291.3L110.5 291.8L110.4 292.3L110.3 292.8L110.1 293.3L109.8 293.7L109.9 294.4L109.5 294.7L109 295L108.5 295L108 295L107.5 294.9L107.1 294.8L106.6 294.5L106.2 294.2L105.8 293.9L105.4 293.6L105 293.3L104.6 293.1L104.1 292.8L103.7 292.7L103.1 292.7L102.6 292.7L102.1 292.9L101.7 293.1L102.8 294.6L102.5 295.1L102.3 295.5L102.3 296L102.3 296.5L102.5 297L102.7 297.5L102.9 297.9L103.2 298.3L103.6 298.7L103.9 299L104.3 299.4L104.6 299.8L104.9 300.2L105.2 300.6L105.4 301L105.5 301.5L105.6 302L105.5 302.5L105.4 303L105.1 303.4L104.8 303.8L104.4 304.1L103.9 304.3L103.5 304.5L103 304.6L102.5 304.7L102 304.6L101.5 304.6L101 304.5L100.5 304.4L100 304.2L99.6 304L99.1 303.7L98.7 303.5L98.3 303.2L97.9 302.9L97.4 302.6L97 302.4L96.6 302.2L96.1 301.9L95.7 301.8L95.2 301.6L94.7 301.5L93.5 302.5L93 302.6L92.5 302.8L92.1 303L91.6 303.3L90.4 305.6L90.1 306.1L92.1 307.2L92 307.7L91.6 309.3L91.6 309.8L91.7 310.3L91.8 310.8L91.9 311.3L92 312L92.2 312.5L92.4 312.9L92.7 313.4L92.9 313.8L93.2 314.1L93.4 314.5L93.7 314.9L93.9 315.4L94.1 315.8L94.5 315.6L94.6 316.1L94.7 316.6L94.7 317.1L95.1 316.8L95 317.3L94.8 317.8L94.6 318.2L95.3 318.7L94.9 319.1L94.5 319.4L94 319.6L93.6 319.6L93.1 319.5L92.7 319.4L92.2 319.2L91.7 319L91.3 318.7L90.9 318.4L90.5 318.1L90.1 317.9L89.7 317.6L89.2 317.4L88.7 317.2L88.2 317.2L87.7 317.2L87.3 317.3L86.8 317.6L88 319.2L87.7 319.6L87.4 320L87.2 320.5L87 321L86.9 321.4L86.7 322.1L86.6 322.6L86.6 323.1L86.7 323.6L86.8 324.1L86.4 325.3L86.6 325.8L86.8 326.2L87 326.7L87.2 327.1L87.5 327.6L87.7 328L87.7 329.1L88 329.5L88.3 329.9L88.6 330.3L88.8 330.7L89.1 331.2L89.3 331.7L89.5 332.2L89.7 332.6L89.9 333.1L90 333.6L90 334.1L90.1 334.6L89.9 335L89.8 335.5L89.6 336L89.2 336.3L88.8 336.5L88.3 336.6L87.8 336.6L87.3 336.5L86.9 336.3L86.4 336L86 335.7L85.6 335.5L85.2 335.2L84.7 335L84.2 334.9L83.7 334.8L83.2 334.9L82.8 335.1L82.4 335.4L82.1 335.8L83.5 336.5L83.5 336.8L83.6 337.3L83.8 337.8L84 338.2L84.3 338.6L84.8 338.5L85.2 338.8L85.6 339.1L86 339.4L86.5 339.6L86.9 339.7L87.4 339.9L87.9 340L88.4 340.1L88.9 340.1L89.4 340.2L89.9 340.3L90.4 340.4L90.8 340.6L91.3 340.8L91.8 341L92.2 341.2L92.6 341.5L92.9 341.9L93.3 342.3L93.2 343.5L93.3 344L93.3 344.5L93.3 345L91.8 345.4L91.6 345.9L91.3 346.3L90.9 346.6L90.5 347L90.1 347.3L89.6 347.5L89.1 347.7L88.7 347.9L88.2 348L87.7 348.1L87.2 348.2L86.7 348.2L86.2 348.3L85.7 348.3L85.2 348.4L84.7 348.5L84.2 348.5L83.7 348.7L83.3 348.8L82.8 349L82.3 349.2L81.9 349.5L81.5 349.8L81.2 350.2L80.8 350.7L81 351.3L80.8 351.8L80.6 352.2L80.5 352.8L80.4 353.3L80.4 353.8L80.4 354.3L80.4 354.8L80.5 355.3L80.6 355.7L80.7 356.2L80.9 356.7L81 357.2L81.1 357.7L81.2 358.2L81.3 358.7L81.4 359.1L81.5 359.6L81.5 360.1L81.5 360.6L81.5 361.1L81.5 361.4L81.4 361.9L80.8 362.2L80.6 362.7L80.4 362.9L80.1 363.3L79.7 363.6L79.3 363.9L78.8 364.1L78.3 364.2L77.9 364.3L77.4 364.3L76.9 364.3L76.4 364.2L75.9 364.2L75.4 364.1L74.9 364L74.4 364L73.9 363.9L73.4 363.9L72.9 363.9L72.4 364L71.9 364.2L71.5 364.4L71.1 364.7L70.7 365.2L70.4 365.6L70.3 366.1L71.7 366.8L71.7 367.3L71.8 367.8L72.1 368.2L72.5 368.5L72.9 368.8L73.4 368.9L73.9 369L74.4 369.1L74.9 369L75.4 369L75.9 369L76.4 369L76.9 369.1L77.3 369.3L77.8 369.5L78.1 369.9L78.4 370.2L78.6 370.7L78.4 371.2L78.3 371.7L78.2 371.9L78.1 372.4L78 372.9L77.8 373.4L77.6 373.8L77.4 374.3L77.3 374.7L77 375.2L76.8 375.6L76.5 376L76.5 376.8L76.3 377.3L76.1 377.7L75.8 378.2L75.6 378.6L75.4 379.1L75.2 379.5L75 380L75 380.7L74.9 381.2L74.9 381.7L74.8 382.2L74.9 382.7L74.9 383.2L75.1 383.6L75.2 384.1L75.5 384.6L76.8 383.7L77.1 384.1L77.5 384.5L77.9 384.7L77.9 384L78.3 384.2L78.8 384.3L79.3 384.3L79.8 384.3L80.3 384.2L80.8 384L81.3 383.9L81.7 383.7L82.2 383.5L82.7 383.4L83.2 383.2L83.6 383L84.1 383.1L84.6 383.2L85.1 383.4L85.5 383.6L85.9 383.9L86.2 384.3L86.5 385.1L86.1 385.6L86.1 386.1L86.1 386.6L85.9 387.2L85.8 387.6L85.5 388.1L85.2 388.5L84.9 388.9L84.6 389.2L84.2 389.5L83.8 389.8L83.3 390.1L82.9 390.3L82.4 390.5L82 390.7L81.5 390.8L81 391L80.6 391.2L80.1 391.4L79.6 391.6L79.2 391.8L78.8 392L78.3 392.3L78 392L77.5 392.3L77.2 392.6L76.8 392.9L76.5 393.3L76.4 392.7L76.1 393.1L75.9 393.6L77.3 394.5L77.2 394.9L77.3 394.9L77.4 395.4L77.6 395.9L77.9 396.3L78.3 396.6L78.7 396.9L79.1 397.2L79.6 397.4L80 397.6L80.4 397.8L80.9 398.1L81.2 398.4L81.6 398.8L81.9 399.2L82.1 399.7L82.1 400.2L82.1 400.7L81.9 401.1L81.6 401.5L81.2 401.9L80.8 402.1L80.3 402.2L79.8 402.3L79.3 402.2L78.8 402.1L78.4 401.9L77.9 401.7L77.5 401.5L77 401.2L76.6 401L76.2 400.8L75.7 400.6L75.2 400.5L74.7 400.4L74.2 400.4L73.7 400.6L73.3 400.8L72.9 401.1L72.6 401.5L73.8 403.4L73.8 403.9L73.9 404.4L74 404.9L74.1 406.6L74.5 406.9L74.9 407.2L75.4 407.5L75.8 407.7L76.3 407.9L76.8 408L77.2 408.2L77.7 408.3L78.2 408.8L78.7 409L79.1 409.2L79.6 409.5L79.9 409.8L80.3 410.2L80.5 410.6L80.7 411L80.8 411.5L80.8 412L80.7 412.5L80.5 413L80.2 413.4L79.9 413.7L79.5 414L79.1 414.3L78.6 414.6L78.2 414.3L77.7 414.4L77.2 414.5L76.7 414.6L76.2 414.8L75.7 414.9L75.3 415.1L74.8 415.3L74.4 415.6L74.1 415.3L73.8 415.7L73.5 416.1L73.3 416.5L74.6 417.3L74.6 417.7L74.5 418.2L74.6 418.7L74.6 419.2L74.7 419.6L74.8 420.1L75 420.6L75.1 421.1L75.3 421.5L75.6 422L75.8 422.5L76 423L76.3 423.4L76.5 423.8L76.8 424.2L77 424.9L77.3 425.3L77.5 425.7L77.8 426.2L78 426.6L78.2 427.2L78.4 427.7L78.6 428.1L78.8 428.6L78.9 429.1L79.1 429.6L79.1 430.1L79.2 430.6L79.2 431.1L79.2 431.6L79.1 432.1L79 432.6L78.9 433.1L78.8 433.5L78.6 434L78.4 434.5L78.2 434.9L77.9 435.4L77.7 435.8L77.5 436.2L77.2 436.7L77 437.1L76.7 437.6L76.5 438L76.3 438.5L76.1 438.9L76 439.4L75.8 439.9L75.7 440.4L75.6 440.9L75.6 441.4L75.6 441.9L75.7 442.4L77 442.5L77.1 443L77.3 443.5L77.5 444L77.8 444.4L78 444.9L78.4 445.5L78.7 445.8L79 446.2L79.4 446.5L79.9 447.1L80.3 447.4L80.7 447.7L81.1 447.9L81.6 448.3L82 448.6L82.5 448.8L82.9 449.1L83.3 449.3L83.7 449.6L84.1 449.9L84.6 450.2L84.9 450.5L85.3 450.8L85.7 451.2L86 451.6L86.3 452L86.5 452.4L86.8 452.8L86.9 453.3L87.1 453.8L87.1 454.3L87 454.8L86.8 455.3L86.5 455.7L86.1 456L85.7 456.3L85.3 456.6L84.8 456.7L84.4 456.9L83.9 457L83.4 457.1L82.9 457.2L82.4 457.3L81.9 457.5L81.5 457.6L81 457.9L80.6 458.2L80.2 458.5L80 458.9L79.7 459.4L79.6 459.9L79.6 460.4L81.5 460.1L81.7 460.6L82 460.9L82.4 461.2L82.8 461.5L83.3 461.6L83.8 461.6L84.3 461.5L84.8 461.4L85.3 461.2L85.7 461L86.2 460.8L86.6 460.5L87.1 460.3L87.5 460.1L88 460L88.5 460L89 460L89.5 460.1L90 460.3L90.4 460.6L90.7 461L90.8 461.4L90.9 461.9L90.9 462.4L90.9 462.9L90.7 463.4L90.5 463.8L90.2 464.2L89.8 464.6L89.4 464.9L89 465.2L88.6 465.4L88.1 465.6L87.7 465.8L87.2 466.1L86.8 466.3L86.4 466.6L86 466.9L85.6 467.3L85.4 467.7L85.2 468.1L85 468.6L85.3 469.5L85.4 470L87 469.4L87.3 469.8L87.7 470.3L88.1 470.6L88.5 470.9L88.9 471.2L89.4 471.4L89.8 471.6L90.3 471.7L90.8 471.8L91.3 471.9L91.8 472L92.3 472L92.8 472L93.3 472.1L93.8 472.1L94.3 472.1L94.7 472L95.2 472L95.7 472.1L96.2 472.1L96.7 472.2L97.2 472.4L97.6 472.6L98 472.9L98.4 473.2L98.7 473.6L98.8 474.6L98.9 475.1L98.9 475.6L98.6 476.4L98.1 476.7L97.8 477.1L97.4 477.5L97 477.8L96.5 478L96 478.2L95.5 478.2L95 478.3L94.6 478.2L94.1 478.2L93.6 478.1L93.1 478L92.6 477.9L92.1 477.8L91.6 477.7L91.1 477.7L90.6 477.6L90.1 477.7L89.6 477.7L89.1 477.9L88.7 478.1L88.3 478.3L87.9 478.7L88.7 479.8L88.4 480.2L88.4 480.6L88.4 481.1L88.5 481.6L88.7 482L89.1 482.4L89.4 482.8L89.8 483.1L90.3 483.3L90.7 483.5L91.2 483.6L91.7 483.8L92.2 484L92.6 484.2L93 484.4L93.4 484.7L93.8 485.1L94.1 485.5L94.3 486L94.4 486.5L94.3 487L94.1 487.5L93.2 487.4L92.9 487.8L92.4 488L91.9 488.2L91.5 488.2L91 488.2L90.5 488L90 487.8L89.6 487.6L89.2 487.3L88.8 487L88.4 486.7L88 486.4L87.5 486.1L87.1 485.9L86.6 485.8L86.1 485.7L85.6 485.8L85.1 485.9L84.7 486.2L85 487.1L84.8 487.5L84.7 488L84.7 488.5L84.8 489L85 489.4L85.3 489.8L85.7 490.1L86.1 490.4L86.5 490.7L87 490.9L87.5 491L87.9 491.2L88.4 491.4L88.8 491.7L89.2 492L89.6 492.4L89.8 492.8L90 493.2L90.1 493.7L90 494.2L89.1 494.1L88.8 494.5L88.5 494.8L88.2 495.2L87.8 495.5L87.4 495.8L87.2 495.8L86.8 496.1L86.4 496.4L86 496.7L85.7 496.6L85.3 496.9L84.9 497.2L84.5 497.5L84.1 497.7L83.7 497.9L83.3 498.2L82.9 498.5L82.5 498.8L82.1 499.1L81.7 499.4L81.3 499.7L80.9 500L80.6 500.4L80.2 500.8L79.9 501.2L79.6 501.6L79.4 502L79.1 502.4L78.9 502.9L78.7 503.3L79 503.9L78.9 504.4L78.8 504.8L78.8 505.1L78.8 505.6L78.7 506.1L78.8 506.6L78.8 507.1L78.9 507.4L78.9 507.9L79 508.4L79 508.9L79.1 509.4L79.1 510L79.2 510.5L79.2 511L79.3 511.5L79.3 512L79.3 512.5L79.3 513L79.3 513.5L79.3 514L79.3 514.5L79.2 515L79.1 515.5L79 516L78.8 516.5L78.6 516.9L78.4 517.4L78.1 517.8L77.8 518.2L76.6 517.7L76.2 518L75.8 518.2L75.3 518.3L74.8 518.3L74.3 518.2L73.9 517.9L73.5 517.6L73.1 517.2L72.9 516.8L72.6 516.4L72.4 515.9L72.2 515.5L72.1 515L71.9 514.5L71.8 514L71.6 513.6L71.3 513.2L71 512.7L70.7 512.4L70.3 512.1L69.8 511.9L69.4 511.7L68.9 511.7L68.4 511.8L67.9 512L68.3 513.1L68 513.5L67.7 513.9L67.3 514.4L67.1 514.9L67 515.4L66.8 515.9L66.7 516.3L66.4 517.3L66.4 517.8L66.4 518.3L66.4 518.8L66.2 519.8L66.4 520.3L66.4 520.8L66.5 521.3L66.5 521.8L66.5 522.4L66.5 522.9L66.6 523.5L66.5 523.9L66.3 524.4L66.1 524.9L65.8 525.3L65.5 525.7L65.2 526.1L64.8 526.4L64.4 526.7L64 527L63.5 527.2L63.1 527.5L62.7 527.7L62.3 527.8L61.8 528.1L61.4 528.3L61 528.6L60.6 529L60.6 528.2L60.2 528.6L59.8 528.9L59.5 529.3L59.3 529.8L61 529.2L60.8 529.7L60.6 530.1L60.5 530.6L61 530.4L60.9 530.9L60.9 531.4L61 531.9L61.1 532.4L61.3 532.8L61.6 533.2L61.8 533.7L62 534.1L62.3 534.5L62.6 534.9L62.9 535.3L63.2 535.7L63.5 536.2L63.8 536.6L64 537L64.2 537.4L64.4 537.9L64.6 538.4L64.7 538.9L64.8 539.4L64.8 539.9L64.7 540.4L64.6 540.8L64.4 541.3L64.1 541.7L63 541.2L62.6 541.5L62.2 541.8L61.7 542L61.2 542L60.8 542L60.3 542L59.9 541.9L59.4 541.7L58.9 541.6L58.4 541.4L58 541.2L57.6 540.9L57.1 540.9L56.6 540.8L56.1 540.8L55.6 540.8L55.1 541L54.5 541.4L54.2 541.8L54.2 542.3L54 542.8L53.8 543.4L53.9 543.9L54.1 544.4L54.3 544.8L54.7 545.2L55 545.5L55.4 545.8L55.9 546L56.3 546.2L56.8 546.4L57.2 546.6L57.7 546.9L58.1 547.2L58.5 547.5L58.8 547.9L59 548.3L59.1 548.8L59.2 549.3L58 549.5L57.8 549.9L57.6 550.4L57.4 550.8L57.1 551.3L56.8 551.6L56.4 552L56.1 552.4L55.7 552.7L55.3 553L54.9 553.3L54.5 553.5L54 553.8L53.6 554L53.2 554.3L52.8 554.6L52.3 554.9L51.9 555.1L51.6 555.5L51.2 555.8L50.8 556.1L50.5 556.5L50.2 557L50 557.4L49.8 557.8L49.8 558.4L49.6 558.8L49.7 559.3L49.8 559.8L50.1 560.3L50.4 560.6L50.8 560.9L51.3 561.1L51.8 561.3L52.2 561.4L52.7 561.5L53.2 561.6L53.7 561.7L54.2 561.9L54.6 562.1L55 562.4L55.3 562.8L55.6 563.2L55.7 563.7L54.4 563.9L54.3 564.4L54.1 564.9L53.8 565.3L53.5 565.6L53.1 566L52.7 566.2L52.2 566.5L51.8 566.7L51.3 566.8L50.8 566.9L50.3 567L49.8 567.1L49.3 567.1L48.8 567.1L48.3 567.2L47.8 567.2L47.3 567.3L46.8 567.4L46.4 567.5L45.9 567.7L45.4 567.9L45 568.2L44.6 568.5L44.3 569L44 569.5L43.8 569.9L44.4 570.5L44.3 571.1L44.4 571.6L44.5 572.1L44.8 572.5L45.1 572.9L45.5 573.1L46 573.4L46.5 573.5L47 573.6L47.5 573.6L48 573.6L48.5 573.6L49 573.6L49.5 573.6L50 573.7L50.5 573.8L50.9 573.9L51.4 574.1L51.8 574.4L52.2 574.7L52.4 575.2L52.6 575.6L52.7 576.1L51.5 576.5L51.3 576.9L51 577.3L50.6 577.6L50.1 577.8L49.6 577.9L49.1 577.9L48.6 577.8L48.2 577.6L47.7 577.4L47.3 577.2L46.8 577L46.3 576.8L45.9 576.7L45.4 576.6L44.9 576.6L44.4 576.7L43.9 577L43.6 577.3L43.3 577.8L43.9 578.3L43.9 578.8L44 579.3L44.2 579.8L44.5 580.2L44.8 580.6L45.2 580.9L45.6 581.2L46.1 581.4L46.5 581.5L47 581.6L47.5 581.7L48 581.8L48.5 581.8L49 581.8L49.5 581.8L50 581.9L50.5 581.9L51 582L51.5 582.2L51.9 582.3L52.4 582.6L52.8 582.9L53.1 583.2L53.4 583.6L53.7 584.1L53.8 584.5L53.9 585L52.3 585.3L52.1 585.8L51.9 586.3L51.6 586.6L51.1 586.9L50.7 587.1L50.2 587.2L49.7 587.2L49.2 587.2L48.7 587.1L48.2 586.9L47.8 586.7L47.3 586.5L46.9 586.3L46.4 586.1L45.9 585.9L45.5 585.8L45 585.7L44.5 585.7L44 585.8L43.5 586L43.1 586.2L42.7 586.6L42.4 587L42.9 587.5L42.8 588L42.8 588.5L42.9 589L43 589.5L43.2 590L43.4 590.4L43.7 590.8L44.1 591.3L44.4 591.7L44.7 592.1L44.9 592.5L44.9 592.9L44.9 593.3L44.8 593.7L44.7 594M227 52.4L227.9 51.2L228.8 49.9L229.8 48.7L230.7 47.5L231.7 46.3L232.9 45.1L234.1 44L235.3 43L236.6 41.9L237.9 41.1L239.4 40.5L240.9 40.2L242.4 39.9L243.9 39.7L245.3 39.7L246.5 40.1L247.5 40.8L248.6 41.5L249.8 42.2L251.1 42.9L252.3 43.5L253.6 44.1L254.9 44.8L256.2 45.3L257.5 45.8L258.9 46.3L260.2 46.7L261.5 47.2L262.8 47.6L264.2 48.1L265.5 48.6L266.7 49.3L267.9 50.1L269.2 50.8L270.4 51.6L271.7 52.3L273.2 53L274.7 53.5L276.2 54L277.6 54.1L278.9 53.6L280.1 52.8L281.2 51.7L282 50.6L282.5 49.2L282.8 47.8L282.9 46.2L282.8 44.8L282.2 43.5L281.2 42.4L280.3 41.2L279.4 40L278.5 38.9L277.8 37.7L277 36.5L276.6 35.3L276.6 33.8L276.8 32.3L277.2 30.8L277.5 29.3L278.1 27.9L279.1 26.8L280.3 25.9L281.5 24.9L282.8 24L284.1 23.3L285.6 22.6L287.1 22.1L288.6 21.6L290.1 21L291.7 20.5L293.2 20.1L294.7 19.8L296.3 19.6L297.8 19.4L299.4 19.1L300.9 18.9L302.4 18.7L303.9 18.3L305.3 17.7L306.7 16.9L308 16.1L308.8 15.1L309.1 13.8L309 12.3L308.7 10.8L308.2 9.4L307.2 8.2L306 7.2L304.7 6.2M6 415.4L80 415.4M6 105.3L155.4 105.3L157 110.9L161.6 115.5L160.3 121.5L158.5 126.3L149.3 134L143.1 141.7L137.6 149.4L187.8 149.4M209.3 104.7L265.5 105.2L310.7 105.5L312 100.1L310.2 88.4L318.8 88.8L325.5 90.3L325.8 92.5L332 92.5L400 91.5L507.8 93.9L591 96.4L637.1 96.4L732.4 96.1L787.8 93.9L806.3 97.9M786.3 95.5L785.8 98.8L783.9 101.5L783.1 104.7L782.9 108.2L783 111.7L781.6 115.1L781.5 118.6L778.6 117.8L775.5 117L772.7 119.5L769.9 121.9L766.4 123.3L764.6 126.2L763.9 129.7L761.2 132.2L760.3 135.6L757.3 138.2L754.2 140.4L751.2 138.1L747.9 137.4L744.9 136L741.6 135.4L738.9 137.8L735.6 138.8L732.4 140.1L730.6 142.9L727.2 144.2L725.7 147.2L723.4 149.6L718.4 152.2L715.6 148.9L714.2 144.5L710.1 146.3L706.2 147.8L703.6 149.6L700.8 150.9L698.4 152.9L695.6 154.3L693.8 156.9L693.9 160.3L692.2 163.1L689.5 165.2L685.8 165.5L682.8 167.2L679.9 169.2L676.7 171L673.8 173.3L670.7 175.4L668 177.7L664.7 178.6L661.3 179.6L658.6 181.9L655.4 182.6L652.8 184.2L650.5 186.5L647.7 188L643.8 187.2L640 186.4L634.1 185.9L631.1 188L628.3 190.1L625.2 191.6L621.6 192.1L618.5 193.7L616.8 196.3L614.9 198.7L612.9 200.9L610.9 203.2L611 206.5L609.7 209.4L609.4 212.5L606.3 213.1L603.4 214.6L600.3 215.4L597.1 215.7L593 216.4L589.4 218.8L589.1 222L589.4 225.4L589.7 228.7L589.6 232.1L588.1 235.3L588.3 238.7M637.1 96.4L640.3 92.6L642.8 90.5L645.8 89L649.6 89.4L652.1 86.7L655.2 85.4L658.5 84.8L661.5 83.7L664.8 83.8L667.6 81.9L671 82.4L673.8 80.6L677 80.2L679.2 77.3L680.1 74L683.3 73.7L686.3 72.4L689 70.4L692.5 70.9L695.4 69.4L696.1 66.1L696.9 62.9L698.7 60.1L702.4 58.6L706.3 57.3L707.5 53.3L708.1 49.4L710.9 47.9L714.1 46.5L717.1 44.9L719.9 42.8L723.3 41.9L726.1 39.7L729.6 39L732.8 37.7L735.6 35.6L738.2 33.3L741.7 32.5L744.5 30.2L746.6 27.3L749.2 24.8L752.4 23.1L754.4 19.9L758.1 18.5L760.1 15.4L764.7 13.9L763.1 10.8L760.2 9.4L757.3 7.8L753.9 7.7L750.9 6.3M764.7 13.9L763.2 21.6L772.4 30.8L781.7 40L794 40L806.3 33.9M146.5 238.4L300.3 238.4L400 238.6L493.4 238.8L589.4 239L677.9 239.2M677.9 239.2L680.3 237.5L689.3 234.1L710.8 227.9L729.3 221.7L732.4 219.3L741.6 221.1L769.4 221.1L806.3 223.3M677.9 239.2L675 241L672.7 243.3L670.4 245.7L668.8 248.7L666.5 251.5L664.9 254.7L662.8 257.7L661.1 260.9L663.9 263.5L666.1 266.9L668.8 269.9L671.1 272.1L674.1 273.7L676.5 275.9L678.3 278.9L681 280.8L684.1 281.6L687 282.8L690.3 282.9L693.4 283.6L694.4 287L696.2 289.6L697.7 292.5L699.2 295.3L700.2 298.4L702.6 300.8L703.6 304.1L705.8 306.9L707 310.2L708.6 313.3L710.8 315.5L713 317.7L714.3 320.6L715.7 323.3L717.8 325.5L720.4 327.9L722.6 330.6L725.7 332.5L728.1 334.9L730.3 337.7L732.3 340.7L735.5 342.3L738.1 344.7L740.6 347.1L742.7 349.9L744.4 352.6L745.5 355.6L746.6 358.5L748.8 360.8L751.9 362.2L755 363.6L758.1 365.2L760.9 367.2L762.2 369.8L763.9 372.4L765.4 375.1L765.5 378.3L767.1 381L768.5 384.3L771.3 386.8L772.6 390.2L773.9 393.6L776.3 396.3L778.4 398.8L781.7 399.5L783.3 402.5L786.7 403L788.7 405.5L791.6 407.2L793 410.5L795.4 412.7L797.8 415L798.2 418L798.8 421.1L800.3 424L800.8 427.2L802.2 430.4L804.4 433.1L805.4 436.5M300.3 238.4L304 243L308 247L306.4 251.6L295.7 353.2L288 440L283.3 480L280.3 501.6L281.8 563.2L283.3 609.4L284.9 650M493.1 239.2L499.2 276.2L508.5 331.6L517.7 384L525.4 430.2L528.5 440M528.5 440L530.6 442.7L531.7 445.9L532.5 449.2L533.3 452.5L535.5 455.2L536.5 458.4L537.3 461.5L537 464.8L538.7 467.6L538.3 470.9L539.2 473.9L541.8 476.1L543.3 479.1L545.4 481.6L542.4 484.3L538.7 486L536.4 489.5L536.4 492.6L534.2 495.3L534.5 498.6L534.3 501.7L533.2 504.7L533.5 507.8L532.6 510.9L534.2 513.9L534.3 517L533.8 520.1L534.1 523.2L533.5 526.3L533.9 529.4L534.8 532.4L534.8 535.6L533.2 538.5L532.4 541.5L533.7 544.8L531.9 547.7L531.2 550.8L531.1 553.9L531.4 557.1L529.9 560L529.8 563.2L530.9 566.2L530.4 569.4L531.5 572.4L532.1 575.4L531.7 578.6L533.1 581.6L534.2 584.7L535 587.9L535.9 591.1L537.4 594.1L537.9 597.3L538.9 600.4L540.6 603.3L541.8 606.2L542.6 609.2L542.4 612.5L543.2 615.5L543.8 618.6L547.1 619.9M343.9 594.4L400 594.4L537.7 594.2M343.9 594.6L343 598.1L342 601.6L341.2 605.2L343.5 607.4L344.9 610.2L346.5 612.9L348.6 615.2L351.6 616.7L353.6 619.3L356.2 621.3L357.4 624.3L358.4 627.4L357.4 630.6L356.3 633.9L354.7 637.1L355.4 640.9L356.3 644.6L358.1 648.7M547 620.2L600 623.5L680 628.5L744.1 632.5L745.6 649.4L756.4 651L757.9 637.1L756.4 621.7L761 612.5L768.7 609.4L785.7 617.1M44.7 594.6L186.4 594.6M186.4 594.6L185.2 597.8L183.2 600.5L181.1 603.1L178.8 606.7L178 610.9L177.6 614L178.7 617.2L178 620.4L177.8 623.5L179 626.7L179.3 630.1L180.5 633.2L182.3 636.1L186 638.6L188.4 642.5L190 645.1L191 648L190.6 651.3L191.3 654.3L192.5 657.1L193.5 661.5L196 665.3"/>
<path d="M6 705.2L12.6 703.1L16 700.5L20.9 698.9L29.3 698.9L29.3 704.1L35.6 707.3L41 706.5L46.1 705.2L47.1 713.6L51.3 715.7L52.4 724L57 725.5L62.8 726.1L71.2 727.2L73.3 734.5L77.5 738.7L82 740L88 740.8L92 742L96.3 745L105.7 751.5L113.8 753L120 745L130 742.6L138 746.7L146 751.5L147 760L161.6 760L165 754L170 749L176 745.5L182.7 744.5L190 745.5L197 749L203 754L207.3 760L240.7 760L239.8 755.9L232.8 754.1L228.4 748L225.8 741.8L217.9 741L207.3 737.5L200.3 735.7L202 725L206 718L210.8 712.8L216 709L222.4 706L224 697L225.9 688L228 680L227.6 671.7L220 672L212 674L205.2 676.9L202.6 682L197.4 687.2L195.7 694.1L189.7 694.1L186.2 689L180.2 689L176.7 683.8L179.3 679.5L186.2 678.6L191.4 671.7L196.6 668.3L205.2 665.7L208.6 662.4L212.3 659.9L216 656.2L214.1 654.4L213.5 651.3L219.7 651.3L220.9 655.6L228.3 652.5L234.4 650.1L240 648.2L240.6 645.8L251.7 645.8L255.4 648.8L259 651.9L264 652.5L268.9 649.4L273.8 650.7L280 653.1L284.9 650.1L286.1 648.8L291 648.2L297.2 651.9L302.1 654.4L304.6 651.9L305.8 639.6L307 632.2L310.7 626.1L313.2 622.4L318.1 624.2L321.2 629.8L319.9 639.6L323 645.8L326.7 649.4L330.4 654.4L334.1 659.3L335.3 661.1L336.6 661.2L350.3 657.8L364.1 653.4L376.2 650.9L393.4 648.3L407.2 646.9L421 647.9L436.6 650L440 650.9L450.3 654.3L460.7 658.6L471 663.8L481.4 670.7L490 676.7L496.9 682.8L503.8 687.1L509 691.4L506.4 696.6L507.2 703.4L510.7 712.1L515.9 711.2L524.5 712.1L533.1 719L540 718.1L546.9 713.8L557.2 707.8L564.1 701.7L571 695.7L577.9 689.7L583.1 686.2L579.7 684.5L584 679.3L588.3 676.7L595.2 674.1L601.2 675L611.8 673.9L618.1 681.3L628.7 685.6L637.2 691.9L643.6 701.4L649.9 708.9L657.3 714.2L657.3 724.7L664.7 731.1L671.1 737.5L677.5 744.9L681.7 754.4L680.6 762.9L684.9 763.9L685.9 757.6L698.6 757.6L702.9 762.9L705 771.4L709.2 781.9L713.5 784.1L711.4 791.5L712 806"/>
<path d="M352 657.4L354.3 654L356.6 649.4L358.8 646L361.7 643.7L360.6 642.6L357.5 645L355 648.5L352.5 652L349.5 655.5L350 658Z"/>
<path d="M344.5 656L346 652.5L348.5 652L349 655L347 657.5Z"/>
<path d="M369.1 652.8L372.6 648.3L376.6 644.8L378.3 639.1L375.4 631.7L377.7 633.4L380 636.9L382.3 638L382.3 643.1L384.6 643.1L386.3 636.9L388 631.7L389.7 632.3L388.6 638L392 641.4L398.3 643.7L393.1 644.3L389.7 646.6L384 648.8L377.1 651.1L371.4 653.4Z"/>
<path d="M418.2 644.3L422.8 643.1L427.4 640.8L428.5 638L430.8 640.3L433.1 643.1L438.8 641.4L445.7 640.3L448.5 638.6L450.2 641.4L453.7 640.8L454.8 646L452.5 648.8L449.1 645.4L444.5 646.6L439.9 648.8L436.5 647.1L432 646.6L427.4 647.7L421.7 647.7Z"/>
<path d="M473.6 656L477 655L481.4 655.2L484 657L486.6 659.5L491 655L495.2 651.7L498.6 654.3L495 657L493.4 660.3L489 663L486.6 664.7L484.8 669L488 671L491.7 672.4L495 674L498.6 675.9L503.8 679.3L508.1 679.3L505.5 681.9L500.3 681L496 679L491 676L486 672L481 668L477 663L474 660Z"/>
<path d="M509 693.1L513.3 696.6L515 703.4L514.1 710.3L511.5 709L509.5 703L508.5 697Z"/>
<path d="M522.8 710.3L528 709.5L533.1 708.6L540 705.2L543.4 701.7L548.6 700.9L546 706.9L545.2 712.1L541 715.5L536 716.5L531 714.5L526 712Z"/>
<path d="M548 711L556 706L564 699.5L571 693.5L577 688.5L575 693L568 699L560 705.5L552 710.5Z"/>
<path d="M15.7 717.7L23 715.7L33.5 720.9L39.8 721.9L35.6 727.2L30.4 729.3L23 724Z"/>
<path d="M802 583L806 580L806 650L803 646L802 630L804 615L802 600Z"/>
<path d="M249.1 678.6L253.4 685.5L254.3 694.1L251.7 704.5L244.8 713.1L236.2 723.4L225.9 730.3"/>
<path d="M257.8 661.1L273.8 663.6L284.9 664.8"/>
<path d="M228.3 662.4L235.7 664.2"/>
<path d="M241.8 664.2L250.4 662.4"/>
<path d="M205 669L209 671.6"/>
<path d="M311.9 663.6L324 662.6L335.3 661.7"/>
<path d="M315.6 661.8L323 662.3"/>
<path d="M296 662.5L306 663.5"/>
<path d="M352 658.3L366 654.6L380 651.2L395 649.1L410 648.2L425 649.4"/>
<path d="M506.4 695.7L508 705L511.5 713"/>
<path d="M533 719.5L540 719L547 715L557 709L565 702.5L572 696.5"/>
</g>
<g id="lakes" fill="#2d4d6e" stroke="#1e3a5a" stroke-width="1" stroke-linejoin="round">
<path d="M368.3 261.9L371.4 259.2L374.9 258.3L378.5 260.5L381.1 263.2L385.5 264.9L389.9 266.3L391.2 269.3L394.3 272.8L396.5 276.4L393.4 275.5L389.9 272.4L386.4 270.7L382 268.5L377.6 266.3L376.3 263.6L373.2 261L370.5 261.9L369.2 263.2Z"/>
<path d="M439.2 374L443 368L448 364.5L451 364L449 369L445 373L441 377.8Z"/>
<path d="M423.4 413.3L425.5 414L427 421L430 428L431.3 435L429 434L426 428L424 420Z"/>
<path d="M605.5 307L608.6 311.6L616.3 307L622.4 299.3L627 293.1L620.9 291.6L620.9 287L617 290L613.2 287L613.2 297.8L608.6 303.9Z"/>
<path d="M299.4 59.2L300.9 61.7L304 62.9L305.2 60.5L305.8 57.4L308.3 55.5L311.4 56.8L314.5 58L315.7 62.3L316.9 67.2L319.4 70.9L323.1 71.5L323.7 73.4L320 74.6L319.4 78.3L318.8 82L320.6 86.3L323.1 90.6L323.7 94.3L322.5 96.8L321.2 93.1L318.2 88.2L315.1 84.5L314.2 78.9L313.8 73.4L311.4 69.1L310.2 65.4L309.8 60.5L307.7 58L306.5 59.8L305.8 62.3L303.4 63.5L300.3 62.3Z"/>
<path d="M540.8 603.2L543.9 606.3L547 612.5L553.1 610.9L556.2 603.2L557.2 610.9L562.4 609.4L563.9 612.5L554.7 614.5L548.5 618.6L542.4 618.6Z"/>
<path d="M136.1 660.2L135.5 663.4L134 666.1L131.6 668L128.8 668.6L126 668L123.6 666.1L122.1 663.4L121.5 660.2L122.1 657L123.6 654.3L126 652.4L128.8 651.8L131.6 652.4L134 654.3L135.5 657L136.1 660.2Z"/>
<path d="M154.2 699.5L153.6 701.6L152.1 703.1L150 703.7L147.9 703.1L146.4 701.6L145.8 699.5L146.4 697.4L147.9 695.9L150 695.3L152.1 695.9L153.6 697.4L154.2 699.5Z"/>
<path d="M151.8 708.8L151.1 711.3L149.3 713.1L146.8 713.8L144.3 713.1L142.5 711.3L141.8 708.8L142.5 706.3L144.3 704.5L146.8 703.8L149.3 704.5L151.1 706.3L151.8 708.8Z"/>
<path d="M145 703L151 701L152 706L148 708Z"/>
<path d="M41.9 681L45 680L49 683L51.3 689.5L47 689L43.5 686Z"/>
<path d="M783 728L786 727L789 732L792 738L795 744L796 750L793 754L789 752L786 746L784 738Z"/>
<path d="M778 791L777.4 792.2L775.9 792.9L774.1 792.9L772.6 792.2L772 791L772.6 789.8L774.1 789.1L775.9 789.1L777.4 789.8L778 791Z"/>
</g>
<g id="lakel" fill="none" stroke="#294868" stroke-width="2.2" stroke-linejoin="round" stroke-linecap="round">
<path d="M525.4 501.6L528 506L530 510.8L527 520L531 524L531.6 532.4L533.1 538.5"/>
<path d="M527 520L536.2 526.2"/>
<path d="M58.6 685.3L60 690L61.8 694.7L64 699L67 703.1L71 705L75.4 706.2L80 707L83.8 708.3"/>
</g>
<path fill="#000" shape-rendering="crispEdges" d="M227 670h1v1h-1zM223 671h1v1h-1zM227 671h1v1h-1zM222 672h5v1h-5zM221 673h3v1h-3zM225 673h2v1h-2zM228 673h1v1h-1zM221 674h7v1h-7zM204 675h1v1h-1zM215 675h2v1h-2zM221 675h7v1h-7zM204 676h3v1h-3zM208 676h2v1h-2zM213 676h2v1h-2zM216 676h1v1h-1zM221 676h6v1h-6zM208 677h1v1h-1zM211 677h2v1h-2zM216 677h1v1h-1zM222 677h3v1h-3zM210 678h5v1h-5zM222 678h3v1h-3zM204 679h1v1h-1zM211 679h1v1h-1zM214 679h1v1h-1zM222 679h2v1h-2zM226 679h1v1h-1zM206 680h1v1h-1zM211 680h4v1h-4zM221 680h1v1h-1zM223 680h3v1h-3zM205 681h4v1h-4zM214 681h1v1h-1zM216 681h2v1h-2zM221 681h7v1h-7zM207 682h3v1h-3zM221 682h4v1h-4zM226 682h2v1h-2zM207 683h8v1h-8zM216 683h2v1h-2zM222 683h2v1h-2zM226 683h1v1h-1zM205 684h6v1h-6zM213 684h4v1h-4zM218 684h1v1h-1zM221 684h2v1h-2zM226 684h1v1h-1zM205 685h2v1h-2zM209 685h1v1h-1zM212 685h2v1h-2zM215 685h2v1h-2zM218 685h5v1h-5zM225 685h2v1h-2zM205 686h1v1h-1zM213 686h1v1h-1zM219 686h1v1h-1zM221 686h3v1h-3zM205 687h1v1h-1zM208 687h1v1h-1zM213 687h1v1h-1zM216 687h5v1h-5zM204 688h3v1h-3zM209 688h12v1h-12zM222 688h1v1h-1zM203 689h5v1h-5zM212 689h1v1h-1zM214 689h2v1h-2zM220 689h2v1h-2zM224 689h1v1h-1zM203 690h5v1h-5zM209 690h2v1h-2zM212 690h5v1h-5zM221 690h1v1h-1zM223 690h2v1h-2zM203 691h6v1h-6zM210 691h1v1h-1zM213 691h2v1h-2zM216 691h1v1h-1zM219 691h3v1h-3zM223 691h2v1h-2zM203 692h1v1h-1zM205 692h2v1h-2zM215 692h2v1h-2zM219 692h2v1h-2zM224 692h1v1h-1zM202 693h5v1h-5zM209 693h1v1h-1zM219 693h3v1h-3zM223 693h3v1h-3zM202 694h6v1h-6zM209 694h1v1h-1zM215 694h2v1h-2zM219 694h6v1h-6zM202 695h8v1h-8zM216 695h1v1h-1zM219 695h6v1h-6zM202 696h8v1h-8zM216 696h1v1h-1zM219 696h1v1h-1zM221 696h1v1h-1zM223 696h3v1h-3zM199 697h1v1h-1zM202 697h6v1h-6zM213 697h1v1h-1zM216 697h5v1h-5zM222 697h4v1h-4zM199 698h6v1h-6zM210 698h1v1h-1zM213 698h1v1h-1zM216 698h1v1h-1zM218 698h1v1h-1zM221 698h1v1h-1zM223 698h1v1h-1zM226 698h1v1h-1zM199 699h2v1h-2zM207 699h2v1h-2zM210 699h1v1h-1zM212 699h2v1h-2zM218 699h1v1h-1zM220 699h1v1h-1zM223 699h1v1h-1zM226 699h1v1h-1zM197 700h1v1h-1zM199 700h2v1h-2zM205 700h2v1h-2zM209 700h2v1h-2zM212 700h8v1h-8zM221 700h3v1h-3zM225 700h2v1h-2zM196 701h1v1h-1zM199 701h1v1h-1zM213 701h1v1h-1zM216 701h1v1h-1zM219 701h1v1h-1zM221 701h5v1h-5zM194 702h3v1h-3zM199 702h1v1h-1zM211 702h1v1h-1zM213 702h1v1h-1zM216 702h1v1h-1zM223 702h1v1h-1zM198 703h2v1h-2zM204 703h2v1h-2zM208 703h1v1h-1zM210 703h1v1h-1zM213 703h4v1h-4zM223 703h1v1h-1zM196 704h2v1h-2zM204 704h2v1h-2zM208 704h1v1h-1zM210 704h1v1h-1zM212 704h5v1h-5zM220 704h1v1h-1zM193 705h1v1h-1zM196 705h2v1h-2zM201 705h1v1h-1zM204 705h3v1h-3zM208 705h1v1h-1zM211 705h2v1h-2zM214 705h1v1h-1zM218 705h1v1h-1zM193 706h3v1h-3zM199 706h4v1h-4zM208 706h1v1h-1zM211 706h2v1h-2zM190 707h5v1h-5zM202 707h1v1h-1zM209 707h3v1h-3zM215 707h1v1h-1zM189 708h1v1h-1zM193 708h3v1h-3zM197 708h3v1h-3zM203 708h1v1h-1zM206 708h2v1h-2zM210 708h5v1h-5zM216 708h1v1h-1zM189 709h1v1h-1zM194 709h1v1h-1zM197 709h2v1h-2zM203 709h1v1h-1zM207 709h1v1h-1zM211 709h2v1h-2zM214 709h1v1h-1zM188 710h1v1h-1zM192 710h2v1h-2zM196 710h1v1h-1zM199 710h2v1h-2zM202 710h2v1h-2zM207 710h1v1h-1zM211 710h3v1h-3zM187 711h2v1h-2zM192 711h1v1h-1zM194 711h2v1h-2zM200 711h5v1h-5zM209 711h2v1h-2zM185 712h3v1h-3zM192 712h2v1h-2zM200 712h1v1h-1zM204 712h1v1h-1zM209 712h1v1h-1zM184 713h1v1h-1zM188 713h3v1h-3zM193 713h4v1h-4zM199 713h1v1h-1zM204 713h1v1h-1zM183 714h3v1h-3zM191 714h7v1h-7zM199 714h1v1h-1zM204 714h1v1h-1zM182 715h1v1h-1zM184 715h3v1h-3zM188 715h1v1h-1zM193 715h1v1h-1zM195 715h7v1h-7zM184 716h1v1h-1zM186 716h2v1h-2zM189 716h3v1h-3zM193 716h1v1h-1zM196 716h7v1h-7zM184 717h1v1h-1zM186 717h1v1h-1zM189 717h16v1h-16zM184 718h10v1h-10zM195 718h6v1h-6zM203 718h4v1h-4zM186 719h1v1h-1zM189 719h4v1h-4zM195 719h3v1h-3zM199 719h2v1h-2zM204 719h2v1h-2zM150 720h2v1h-2zM185 720h3v1h-3zM189 720h1v1h-1zM192 720h2v1h-2zM195 720h1v1h-1zM197 720h1v1h-1zM200 720h3v1h-3zM148 721h4v1h-4zM154 721h2v1h-2zM158 721h1v1h-1zM184 721h2v1h-2zM188 721h2v1h-2zM191 721h3v1h-3zM195 721h1v1h-1zM197 721h1v1h-1zM200 721h1v1h-1zM204 721h1v1h-1zM149 722h3v1h-3zM154 722h5v1h-5zM160 722h1v1h-1zM184 722h2v1h-2zM188 722h8v1h-8zM200 722h1v1h-1zM150 723h1v1h-1zM153 723h4v1h-4zM160 723h1v1h-1zM185 723h1v1h-1zM187 723h3v1h-3zM191 723h5v1h-5zM149 724h1v1h-1zM153 724h4v1h-4zM160 724h1v1h-1zM162 724h1v1h-1zM185 724h1v1h-1zM188 724h1v1h-1zM192 724h1v1h-1zM194 724h1v1h-1zM148 725h2v1h-2zM154 725h3v1h-3zM160 725h5v1h-5zM188 725h5v1h-5zM194 725h1v1h-1zM200 725h2v1h-2zM204 725h1v1h-1zM148 726h3v1h-3zM154 726h2v1h-2zM159 726h3v1h-3zM163 726h2v1h-2zM187 726h2v1h-2zM191 726h7v1h-7zM199 726h1v1h-1zM148 727h2v1h-2zM154 727h3v1h-3zM159 727h5v1h-5zM165 727h2v1h-2zM187 727h1v1h-1zM189 727h1v1h-1zM192 727h1v1h-1zM196 727h4v1h-4zM148 728h1v1h-1zM153 728h2v1h-2zM157 728h1v1h-1zM159 728h2v1h-2zM163 728h5v1h-5zM187 728h1v1h-1zM189 728h1v1h-1zM193 728h2v1h-2zM196 728h4v1h-4zM201 728h1v1h-1zM152 729h3v1h-3zM158 729h3v1h-3zM164 729h1v1h-1zM166 729h3v1h-3zM188 729h6v1h-6zM195 729h1v1h-1zM199 729h1v1h-1zM201 729h1v1h-1zM151 730h1v1h-1zM153 730h1v1h-1zM161 730h3v1h-3zM167 730h3v1h-3zM188 730h1v1h-1zM193 730h1v1h-1zM195 730h4v1h-4zM201 730h2v1h-2zM150 731h1v1h-1zM153 731h1v1h-1zM155 731h3v1h-3zM161 731h1v1h-1zM167 731h2v1h-2zM190 731h6v1h-6zM198 731h1v1h-1zM202 731h1v1h-1zM149 732h1v1h-1zM154 732h1v1h-1zM159 732h3v1h-3zM166 732h2v1h-2zM189 732h1v1h-1zM192 732h11v1h-11zM154 733h2v1h-2zM160 733h1v1h-1zM166 733h2v1h-2zM172 733h1v1h-1zM198 733h2v1h-2zM150 734h2v1h-2zM155 734h1v1h-1zM158 734h7v1h-7zM167 734h1v1h-1zM171 734h1v1h-1zM192 734h2v1h-2zM198 734h4v1h-4zM150 735h2v1h-2zM157 735h1v1h-1zM161 735h4v1h-4zM168 735h1v1h-1zM171 735h1v1h-1zM191 735h4v1h-4zM198 735h4v1h-4zM147 736h2v1h-2zM157 736h1v1h-1zM161 736h3v1h-3zM168 736h1v1h-1zM171 736h2v1h-2zM192 736h2v1h-2zM197 736h3v1h-3zM146 737h3v1h-3zM152 737h2v1h-2zM157 737h7v1h-7zM168 737h1v1h-1zM172 737h2v1h-2zM193 737h2v1h-2zM197 737h2v1h-2zM145 738h2v1h-2zM149 738h2v1h-2zM153 738h8v1h-8zM162 738h4v1h-4zM169 738h2v1h-2zM174 738h1v1h-1zM193 738h3v1h-3zM78 739h1v1h-1zM144 739h3v1h-3zM150 739h1v1h-1zM154 739h1v1h-1zM156 739h10v1h-10zM170 739h5v1h-5zM195 739h1v1h-1zM72 740h1v1h-1zM75 740h2v1h-2zM78 740h1v1h-1zM81 740h3v1h-3zM85 740h3v1h-3zM143 740h6v1h-6zM150 740h1v1h-1zM153 740h1v1h-1zM156 740h1v1h-1zM158 740h5v1h-5zM164 740h2v1h-2zM171 740h5v1h-5zM195 740h1v1h-1zM71 741h2v1h-2zM76 741h1v1h-1zM81 741h2v1h-2zM86 741h1v1h-1zM131 741h2v1h-2zM143 741h6v1h-6zM150 741h3v1h-3zM156 741h5v1h-5zM164 741h1v1h-1zM171 741h2v1h-2zM65 742h1v1h-1zM71 742h8v1h-8zM80 742h3v1h-3zM89 742h3v1h-3zM131 742h5v1h-5zM141 742h2v1h-2zM148 742h1v1h-1zM155 742h1v1h-1zM159 742h2v1h-2zM165 742h3v1h-3zM170 742h1v1h-1zM176 742h1v1h-1zM65 743h1v1h-1zM71 743h5v1h-5zM77 743h5v1h-5zM83 743h1v1h-1zM91 743h3v1h-3zM126 743h2v1h-2zM130 743h2v1h-2zM134 743h2v1h-2zM141 743h2v1h-2zM148 743h5v1h-5zM154 743h3v1h-3zM159 743h4v1h-4zM167 743h1v1h-1zM176 743h1v1h-1zM178 743h2v1h-2zM65 744h2v1h-2zM68 744h3v1h-3zM73 744h11v1h-11zM93 744h1v1h-1zM95 744h2v1h-2zM122 744h10v1h-10zM134 744h3v1h-3zM140 744h1v1h-1zM142 744h1v1h-1zM147 744h4v1h-4zM155 744h9v1h-9zM167 744h1v1h-1zM174 744h2v1h-2zM70 745h1v1h-1zM76 745h3v1h-3zM80 745h1v1h-1zM85 745h2v1h-2zM89 745h1v1h-1zM93 745h1v1h-1zM95 745h3v1h-3zM120 745h3v1h-3zM129 745h4v1h-4zM139 745h1v1h-1zM143 745h2v1h-2zM146 745h1v1h-1zM149 745h2v1h-2zM159 745h6v1h-6zM167 745h1v1h-1zM170 745h1v1h-1zM172 745h1v1h-1zM70 746h1v1h-1zM72 746h2v1h-2zM76 746h1v1h-1zM79 746h1v1h-1zM83 746h3v1h-3zM87 746h1v1h-1zM89 746h1v1h-1zM93 746h1v1h-1zM95 746h1v1h-1zM97 746h2v1h-2zM119 746h1v1h-1zM121 746h2v1h-2zM129 746h1v1h-1zM131 746h1v1h-1zM133 746h1v1h-1zM136 746h3v1h-3zM145 746h2v1h-2zM150 746h1v1h-1zM159 746h4v1h-4zM166 746h1v1h-1zM170 746h1v1h-1zM172 746h2v1h-2zM70 747h3v1h-3zM74 747h3v1h-3zM85 747h6v1h-6zM93 747h2v1h-2zM118 747h2v1h-2zM122 747h3v1h-3zM128 747h1v1h-1zM131 747h2v1h-2zM135 747h2v1h-2zM138 747h1v1h-1zM141 747h2v1h-2zM146 747h1v1h-1zM157 747h1v1h-1zM159 747h1v1h-1zM162 747h1v1h-1zM165 747h2v1h-2zM170 747h1v1h-1zM65 748h8v1h-8zM76 748h3v1h-3zM82 748h1v1h-1zM85 748h5v1h-5zM92 748h3v1h-3zM100 748h1v1h-1zM117 748h2v1h-2zM120 748h3v1h-3zM125 748h1v1h-1zM128 748h1v1h-1zM131 748h2v1h-2zM137 748h1v1h-1zM139 748h2v1h-2zM143 748h1v1h-1zM156 748h1v1h-1zM159 748h1v1h-1zM162 748h2v1h-2zM165 748h2v1h-2zM171 748h1v1h-1zM67 749h2v1h-2zM71 749h6v1h-6zM79 749h3v1h-3zM83 749h5v1h-5zM89 749h1v1h-1zM101 749h2v1h-2zM117 749h2v1h-2zM124 749h1v1h-1zM128 749h1v1h-1zM131 749h3v1h-3zM137 749h1v1h-1zM140 749h2v1h-2zM143 749h1v1h-1zM147 749h1v1h-1zM151 749h2v1h-2zM155 749h1v1h-1zM157 749h2v1h-2zM161 749h3v1h-3zM169 749h1v1h-1zM67 750h2v1h-2zM71 750h2v1h-2zM74 750h3v1h-3zM78 750h6v1h-6zM86 750h3v1h-3zM90 750h1v1h-1zM97 750h3v1h-3zM118 750h1v1h-1zM123 750h2v1h-2zM128 750h1v1h-1zM132 750h4v1h-4zM140 750h4v1h-4zM147 750h1v1h-1zM151 750h1v1h-1zM157 750h1v1h-1zM160 750h1v1h-1zM162 750h2v1h-2zM67 751h8v1h-8zM76 751h6v1h-6zM86 751h3v1h-3zM91 751h5v1h-5zM100 751h3v1h-3zM119 751h1v1h-1zM122 751h3v1h-3zM129 751h1v1h-1zM131 751h1v1h-1zM140 751h3v1h-3zM146 751h1v1h-1zM153 751h3v1h-3zM160 751h1v1h-1zM162 751h2v1h-2zM65 752h4v1h-4zM70 752h7v1h-7zM81 752h1v1h-1zM84 752h2v1h-2zM88 752h1v1h-1zM94 752h2v1h-2zM102 752h1v1h-1zM106 752h1v1h-1zM109 752h3v1h-3zM114 752h1v1h-1zM117 752h1v1h-1zM120 752h5v1h-5zM128 752h1v1h-1zM131 752h1v1h-1zM140 752h1v1h-1zM142 752h1v1h-1zM146 752h1v1h-1zM154 752h2v1h-2zM161 752h1v1h-1zM164 752h3v1h-3zM70 753h1v1h-1zM72 753h6v1h-6zM82 753h1v1h-1zM86 753h1v1h-1zM88 753h2v1h-2zM94 753h3v1h-3zM103 753h3v1h-3zM107 753h3v1h-3zM111 753h1v1h-1zM115 753h2v1h-2zM122 753h1v1h-1zM128 753h1v1h-1zM131 753h4v1h-4zM140 753h3v1h-3zM146 753h1v1h-1zM153 753h1v1h-1zM155 753h1v1h-1zM160 753h2v1h-2zM163 753h1v1h-1zM165 753h1v1h-1zM65 754h2v1h-2zM69 754h3v1h-3zM74 754h4v1h-4zM82 754h1v1h-1zM86 754h2v1h-2zM89 754h2v1h-2zM93 754h1v1h-1zM95 754h4v1h-4zM100 754h2v1h-2zM110 754h3v1h-3zM122 754h1v1h-1zM128 754h1v1h-1zM131 754h1v1h-1zM134 754h3v1h-3zM139 754h6v1h-6zM146 754h1v1h-1zM150 754h2v1h-2zM153 754h4v1h-4zM160 754h3v1h-3zM65 755h4v1h-4zM70 755h2v1h-2zM74 755h3v1h-3zM80 755h1v1h-1zM82 755h2v1h-2zM87 755h1v1h-1zM89 755h3v1h-3zM95 755h2v1h-2zM98 755h2v1h-2zM109 755h1v1h-1zM113 755h3v1h-3zM118 755h5v1h-5zM126 755h2v1h-2zM131 755h1v1h-1zM134 755h1v1h-1zM136 755h4v1h-4zM141 755h2v1h-2zM144 755h1v1h-1zM147 755h1v1h-1zM150 755h4v1h-4zM156 755h2v1h-2zM160 755h2v1h-2zM65 756h7v1h-7zM75 756h2v1h-2zM80 756h3v1h-3zM84 756h1v1h-1zM88 756h3v1h-3zM96 756h4v1h-4zM102 756h1v1h-1zM114 756h1v1h-1zM118 756h2v1h-2zM122 756h1v1h-1zM126 756h6v1h-6zM134 756h1v1h-1zM136 756h1v1h-1zM138 756h2v1h-2zM141 756h2v1h-2zM144 756h1v1h-1zM147 756h6v1h-6zM156 756h7v1h-7zM65 757h4v1h-4zM70 757h2v1h-2zM76 757h1v1h-1zM80 757h4v1h-4zM85 757h1v1h-1zM90 757h1v1h-1zM100 757h1v1h-1zM102 757h1v1h-1zM104 757h1v1h-1zM106 757h1v1h-1zM114 757h1v1h-1zM120 757h1v1h-1zM122 757h1v1h-1zM125 757h3v1h-3zM130 757h1v1h-1zM134 757h3v1h-3zM141 757h13v1h-13zM155 757h5v1h-5zM140 758h1v1h-1zM142 758h6v1h-6z"/>
<path fill="#004263" shape-rendering="crispEdges" d="M227 669h1v1h-1zM225 670h2v1h-2zM224 671h3v1h-3zM221 672h1v1h-1zM219 673h2v1h-2zM217 674h4v1h-4zM203 675h1v1h-1zM217 675h4v1h-4zM207 676h1v1h-1zM215 676h1v1h-1zM217 676h4v1h-4zM204 677h4v1h-4zM213 677h3v1h-3zM217 677h5v1h-5zM204 678h6v1h-6zM215 678h7v1h-7zM227 678h2v1h-2zM205 679h6v1h-6zM215 679h7v1h-7zM227 679h2v1h-2zM204 680h2v1h-2zM207 680h4v1h-4zM215 680h6v1h-6zM226 680h2v1h-2zM209 681h5v1h-5zM218 681h3v1h-3zM210 682h4v1h-4zM217 684h1v1h-1zM210 685h2v1h-2zM217 685h1v1h-1zM209 686h4v1h-4zM216 686h3v1h-3zM220 686h1v1h-1zM224 686h3v1h-3zM209 687h4v1h-4zM223 687h3v1h-3zM223 688h3v1h-3zM213 689h1v1h-1zM216 689h4v1h-4zM222 689h2v1h-2zM225 689h1v1h-1zM217 690h4v1h-4zM222 690h1v1h-1zM225 690h1v1h-1zM209 691h1v1h-1zM217 691h2v1h-2zM222 691h1v1h-1zM225 691h1v1h-1zM204 692h1v1h-1zM207 692h3v1h-3zM213 692h2v1h-2zM217 692h2v1h-2zM221 692h3v1h-3zM225 692h1v1h-1zM207 693h2v1h-2zM213 693h6v1h-6zM222 693h1v1h-1zM208 694h1v1h-1zM213 694h2v1h-2zM217 694h2v1h-2zM213 695h3v1h-3zM217 695h2v1h-2zM213 696h3v1h-3zM217 696h2v1h-2zM222 696h1v1h-1zM214 697h2v1h-2zM198 698h1v1h-1zM211 698h2v1h-2zM214 698h2v1h-2zM219 698h2v1h-2zM222 698h1v1h-1zM197 699h2v1h-2zM201 699h4v1h-4zM211 699h1v1h-1zM214 699h2v1h-2zM219 699h1v1h-1zM221 699h2v1h-2zM196 700h1v1h-1zM201 700h4v1h-4zM207 700h2v1h-2zM211 700h1v1h-1zM195 701h1v1h-1zM200 701h9v1h-9zM211 701h2v1h-2zM217 701h2v1h-2zM200 702h8v1h-8zM212 702h1v1h-1zM217 702h6v1h-6zM194 703h2v1h-2zM200 703h4v1h-4zM206 703h2v1h-2zM211 703h2v1h-2zM217 703h6v1h-6zM193 704h3v1h-3zM198 704h6v1h-6zM206 704h2v1h-2zM211 704h1v1h-1zM217 704h3v1h-3zM221 704h2v1h-2zM194 705h2v1h-2zM198 705h3v1h-3zM202 705h2v1h-2zM207 705h1v1h-1zM213 705h1v1h-1zM219 705h3v1h-3zM203 706h5v1h-5zM213 706h2v1h-2zM219 706h2v1h-2zM203 707h6v1h-6zM212 707h3v1h-3zM204 708h2v1h-2zM208 708h2v1h-2zM215 708h1v1h-1zM188 709h1v1h-1zM204 709h3v1h-3zM215 709h1v1h-1zM187 710h1v1h-1zM197 710h2v1h-2zM201 710h1v1h-1zM204 710h3v1h-3zM186 711h1v1h-1zM193 711h1v1h-1zM196 711h4v1h-4zM205 711h4v1h-4zM211 711h1v1h-1zM194 712h6v1h-6zM205 712h4v1h-4zM197 713h2v1h-2zM205 713h3v1h-3zM188 714h3v1h-3zM198 714h1v1h-1zM205 714h3v1h-3zM183 715h1v1h-1zM189 715h4v1h-4zM205 715h3v1h-3zM181 716h3v1h-3zM188 716h1v1h-1zM192 716h1v1h-1zM205 716h2v1h-2zM182 717h2v1h-2zM187 717h2v1h-2zM205 717h2v1h-2zM182 718h2v1h-2zM194 718h1v1h-1zM183 719h3v1h-3zM193 719h2v1h-2zM198 719h1v1h-1zM148 720h2v1h-2zM183 720h2v1h-2zM190 720h2v1h-2zM194 720h1v1h-1zM198 720h2v1h-2zM186 721h2v1h-2zM190 721h1v1h-1zM194 721h1v1h-1zM198 721h2v1h-2zM201 721h3v1h-3zM148 722h1v1h-1zM159 722h1v1h-1zM186 722h2v1h-2zM197 722h3v1h-3zM201 722h4v1h-4zM148 723h2v1h-2zM157 723h3v1h-3zM186 723h1v1h-1zM196 723h9v1h-9zM148 724h1v1h-1zM157 724h3v1h-3zM186 724h2v1h-2zM193 724h1v1h-1zM195 724h10v1h-10zM157 725h3v1h-3zM186 725h2v1h-2zM193 725h1v1h-1zM195 725h5v1h-5zM202 725h2v1h-2zM156 726h3v1h-3zM162 726h1v1h-1zM165 726h1v1h-1zM186 726h1v1h-1zM189 726h2v1h-2zM198 726h1v1h-1zM202 726h2v1h-2zM157 727h2v1h-2zM190 727h2v1h-2zM202 727h2v1h-2zM158 728h1v1h-1zM190 728h3v1h-3zM202 728h2v1h-2zM165 729h1v1h-1zM194 729h1v1h-1zM197 729h2v1h-2zM202 729h2v1h-2zM152 730h1v1h-1zM164 730h3v1h-3zM194 730h1v1h-1zM151 731h2v1h-2zM162 731h5v1h-5zM150 732h4v1h-4zM155 732h4v1h-4zM162 732h4v1h-4zM190 732h2v1h-2zM148 733h6v1h-6zM156 733h4v1h-4zM161 733h5v1h-5zM190 733h8v1h-8zM200 733h3v1h-3zM148 734h2v1h-2zM152 734h3v1h-3zM156 734h2v1h-2zM165 734h2v1h-2zM172 734h2v1h-2zM191 734h1v1h-1zM194 734h4v1h-4zM148 735h2v1h-2zM152 735h5v1h-5zM165 735h3v1h-3zM172 735h3v1h-3zM195 735h3v1h-3zM149 736h8v1h-8zM164 736h4v1h-4zM173 736h3v1h-3zM194 736h3v1h-3zM201 736h1v1h-1zM149 737h3v1h-3zM154 737h3v1h-3zM164 737h4v1h-4zM174 737h3v1h-3zM195 737h2v1h-2zM151 738h2v1h-2zM161 738h1v1h-1zM166 738h3v1h-3zM175 738h2v1h-2zM76 739h2v1h-2zM151 739h3v1h-3zM166 739h4v1h-4zM175 739h3v1h-3zM194 739h1v1h-1zM77 740h1v1h-1zM79 740h2v1h-2zM84 740h1v1h-1zM151 740h2v1h-2zM157 740h1v1h-1zM166 740h5v1h-5zM176 740h3v1h-3zM77 741h4v1h-4zM83 741h3v1h-3zM87 741h3v1h-3zM130 741h1v1h-1zM165 741h6v1h-6zM176 741h4v1h-4zM79 742h1v1h-1zM83 742h6v1h-6zM128 742h3v1h-3zM136 742h3v1h-3zM143 742h5v1h-5zM168 742h2v1h-2zM177 742h4v1h-4zM76 743h1v1h-1zM84 743h5v1h-5zM94 743h1v1h-1zM125 743h1v1h-1zM128 743h2v1h-2zM132 743h2v1h-2zM136 743h5v1h-5zM143 743h5v1h-5zM168 743h2v1h-2zM177 743h1v1h-1zM84 744h5v1h-5zM94 744h1v1h-1zM132 744h2v1h-2zM137 744h3v1h-3zM143 744h4v1h-4zM151 744h4v1h-4zM168 744h2v1h-2zM176 744h2v1h-2zM65 745h5v1h-5zM81 745h4v1h-4zM87 745h2v1h-2zM94 745h1v1h-1zM133 745h6v1h-6zM145 745h1v1h-1zM147 745h2v1h-2zM151 745h8v1h-8zM168 745h2v1h-2zM173 745h4v1h-4zM65 746h5v1h-5zM77 746h2v1h-2zM80 746h3v1h-3zM88 746h1v1h-1zM94 746h1v1h-1zM130 746h1v1h-1zM134 746h2v1h-2zM147 746h3v1h-3zM151 746h8v1h-8zM163 746h3v1h-3zM167 746h3v1h-3zM174 746h1v1h-1zM65 747h5v1h-5zM73 747h1v1h-1zM77 747h6v1h-6zM129 747h2v1h-2zM133 747h2v1h-2zM147 747h10v1h-10zM160 747h2v1h-2zM163 747h2v1h-2zM167 747h3v1h-3zM73 748h3v1h-3zM79 748h3v1h-3zM101 748h1v1h-1zM119 748h1v1h-1zM123 748h2v1h-2zM129 748h2v1h-2zM133 748h4v1h-4zM141 748h2v1h-2zM147 748h9v1h-9zM160 748h2v1h-2zM164 748h1v1h-1zM167 748h4v1h-4zM88 749h1v1h-1zM116 749h1v1h-1zM119 749h5v1h-5zM129 749h2v1h-2zM134 749h3v1h-3zM142 749h1v1h-1zM148 749h3v1h-3zM153 749h2v1h-2zM159 749h2v1h-2zM164 749h5v1h-5zM170 749h1v1h-1zM84 750h2v1h-2zM89 750h1v1h-1zM115 750h3v1h-3zM119 750h4v1h-4zM129 750h3v1h-3zM148 750h3v1h-3zM152 750h3v1h-3zM158 750h2v1h-2zM164 750h5v1h-5zM75 751h1v1h-1zM82 751h4v1h-4zM89 751h2v1h-2zM96 751h4v1h-4zM114 751h4v1h-4zM120 751h2v1h-2zM130 751h1v1h-1zM147 751h6v1h-6zM156 751h4v1h-4zM164 751h4v1h-4zM69 752h1v1h-1zM82 752h2v1h-2zM86 752h2v1h-2zM89 752h5v1h-5zM96 752h6v1h-6zM115 752h2v1h-2zM129 752h2v1h-2zM141 752h1v1h-1zM147 752h7v1h-7zM156 752h5v1h-5zM162 752h2v1h-2zM65 753h5v1h-5zM87 753h1v1h-1zM90 753h4v1h-4zM97 753h6v1h-6zM106 753h1v1h-1zM110 753h1v1h-1zM129 753h2v1h-2zM147 753h6v1h-6zM156 753h4v1h-4zM162 753h1v1h-1zM164 753h1v1h-1zM67 754h2v1h-2zM72 754h2v1h-2zM91 754h2v1h-2zM99 754h1v1h-1zM102 754h8v1h-8zM129 754h2v1h-2zM147 754h3v1h-3zM157 754h3v1h-3zM72 755h2v1h-2zM102 755h7v1h-7zM110 755h3v1h-3zM128 755h3v1h-3zM135 755h1v1h-1zM140 755h1v1h-1zM143 755h1v1h-1zM148 755h2v1h-2zM154 755h2v1h-2zM158 755h2v1h-2zM72 756h3v1h-3zM83 756h1v1h-1zM103 756h11v1h-11zM120 756h2v1h-2zM135 756h1v1h-1zM140 756h1v1h-1zM143 756h1v1h-1zM153 756h3v1h-3zM69 757h1v1h-1zM72 757h4v1h-4zM84 757h1v1h-1zM88 757h2v1h-2zM97 757h3v1h-3zM103 757h1v1h-1zM107 757h7v1h-7zM121 757h1v1h-1zM154 757h1v1h-1zM160 757h2v1h-2zM141 758h1v1h-1z"/>
<path fill="#5d4f4b" shape-rendering="crispEdges" d="M227 672h1v1h-1zM224 673h1v1h-1zM227 673h1v1h-1zM228 674h1v1h-1zM228 675h1v1h-1zM227 676h2v1h-2zM209 677h2v1h-2zM225 677h4v1h-4zM225 678h2v1h-2zM212 679h2v1h-2zM224 679h2v1h-2zM222 680h1v1h-1zM215 681h1v1h-1zM205 682h2v1h-2zM214 682h7v1h-7zM225 682h1v1h-1zM205 683h2v1h-2zM215 683h1v1h-1zM218 683h4v1h-4zM224 683h2v1h-2zM211 684h2v1h-2zM219 684h2v1h-2zM223 684h3v1h-3zM207 685h2v1h-2zM214 685h1v1h-1zM223 685h2v1h-2zM206 686h3v1h-3zM214 686h2v1h-2zM204 687h1v1h-1zM206 687h2v1h-2zM214 687h2v1h-2zM221 687h2v1h-2zM207 688h2v1h-2zM221 688h1v1h-1zM208 689h4v1h-4zM208 690h1v1h-1zM211 690h1v1h-1zM202 691h1v1h-1zM211 691h2v1h-2zM215 691h1v1h-1zM202 692h1v1h-1zM210 692h3v1h-3zM201 693h1v1h-1zM210 693h3v1h-3zM201 694h1v1h-1zM210 694h3v1h-3zM225 694h1v1h-1zM200 695h2v1h-2zM210 695h3v1h-3zM225 695h1v1h-1zM199 696h3v1h-3zM210 696h3v1h-3zM220 696h1v1h-1zM200 697h2v1h-2zM208 697h5v1h-5zM221 697h1v1h-1zM205 698h5v1h-5zM217 698h1v1h-1zM224 698h2v1h-2zM205 699h2v1h-2zM209 699h1v1h-1zM216 699h2v1h-2zM224 699h2v1h-2zM198 700h1v1h-1zM220 700h1v1h-1zM224 700h1v1h-1zM197 701h2v1h-2zM209 701h2v1h-2zM214 701h2v1h-2zM220 701h1v1h-1zM197 702h2v1h-2zM208 702h3v1h-3zM214 702h2v1h-2zM224 702h1v1h-1zM196 703h2v1h-2zM209 703h1v1h-1zM209 704h1v1h-1zM192 705h1v1h-1zM209 705h2v1h-2zM215 705h3v1h-3zM191 706h2v1h-2zM196 706h3v1h-3zM209 706h2v1h-2zM215 706h4v1h-4zM195 707h7v1h-7zM216 707h4v1h-4zM190 708h3v1h-3zM196 708h1v1h-1zM200 708h3v1h-3zM217 708h1v1h-1zM190 709h4v1h-4zM195 709h2v1h-2zM199 709h4v1h-4zM208 709h3v1h-3zM213 709h1v1h-1zM189 710h3v1h-3zM194 710h2v1h-2zM208 710h3v1h-3zM189 711h3v1h-3zM188 712h4v1h-4zM201 712h3v1h-3zM185 713h3v1h-3zM191 713h2v1h-2zM200 713h4v1h-4zM186 714h2v1h-2zM200 714h4v1h-4zM187 715h1v1h-1zM194 715h1v1h-1zM202 715h3v1h-3zM185 716h1v1h-1zM194 716h2v1h-2zM203 716h2v1h-2zM185 717h1v1h-1zM201 718h2v1h-2zM187 719h2v1h-2zM201 719h3v1h-3zM188 720h1v1h-1zM196 720h1v1h-1zM203 720h3v1h-3zM152 721h2v1h-2zM156 721h2v1h-2zM196 721h1v1h-1zM205 721h1v1h-1zM152 722h2v1h-2zM196 722h1v1h-1zM151 723h2v1h-2zM161 723h1v1h-1zM190 723h1v1h-1zM150 724h3v1h-3zM161 724h1v1h-1zM189 724h3v1h-3zM150 725h4v1h-4zM151 726h3v1h-3zM200 726h2v1h-2zM150 727h4v1h-4zM164 727h1v1h-1zM188 727h1v1h-1zM193 727h3v1h-3zM200 727h2v1h-2zM149 728h4v1h-4zM155 728h2v1h-2zM161 728h2v1h-2zM188 728h1v1h-1zM195 728h1v1h-1zM200 728h1v1h-1zM148 729h4v1h-4zM155 729h3v1h-3zM161 729h3v1h-3zM196 729h1v1h-1zM200 729h1v1h-1zM148 730h3v1h-3zM154 730h7v1h-7zM189 730h4v1h-4zM199 730h2v1h-2zM148 731h2v1h-2zM154 731h1v1h-1zM158 731h3v1h-3zM169 731h2v1h-2zM189 731h1v1h-1zM196 731h2v1h-2zM199 731h3v1h-3zM148 732h1v1h-1zM168 732h4v1h-4zM168 733h4v1h-4zM168 734h3v1h-3zM158 735h3v1h-3zM169 735h2v1h-2zM158 736h3v1h-3zM169 736h2v1h-2zM169 737h3v1h-3zM147 738h2v1h-2zM171 738h3v1h-3zM196 738h2v1h-2zM147 739h3v1h-3zM155 739h1v1h-1zM196 739h1v1h-1zM73 740h2v1h-2zM149 740h1v1h-1zM154 740h2v1h-2zM163 740h1v1h-1zM69 741h2v1h-2zM73 741h3v1h-3zM142 741h1v1h-1zM149 741h1v1h-1zM153 741h3v1h-3zM161 741h3v1h-3zM173 741h3v1h-3zM66 742h5v1h-5zM149 742h6v1h-6zM156 742h3v1h-3zM161 742h4v1h-4zM171 742h5v1h-5zM66 743h5v1h-5zM82 743h1v1h-1zM89 743h2v1h-2zM153 743h1v1h-1zM157 743h2v1h-2zM163 743h4v1h-4zM170 743h6v1h-6zM67 744h1v1h-1zM71 744h2v1h-2zM89 744h4v1h-4zM141 744h1v1h-1zM164 744h3v1h-3zM170 744h4v1h-4zM71 745h5v1h-5zM79 745h1v1h-1zM90 745h3v1h-3zM123 745h6v1h-6zM140 745h3v1h-3zM165 745h2v1h-2zM171 745h1v1h-1zM71 746h1v1h-1zM74 746h2v1h-2zM86 746h1v1h-1zM90 746h3v1h-3zM96 746h1v1h-1zM120 746h1v1h-1zM123 746h6v1h-6zM132 746h1v1h-1zM139 746h6v1h-6zM171 746h1v1h-1zM83 747h2v1h-2zM91 747h2v1h-2zM95 747h6v1h-6zM120 747h2v1h-2zM125 747h3v1h-3zM137 747h1v1h-1zM139 747h2v1h-2zM143 747h3v1h-3zM158 747h1v1h-1zM171 747h3v1h-3zM83 748h2v1h-2zM90 748h2v1h-2zM95 748h5v1h-5zM126 748h2v1h-2zM138 748h1v1h-1zM144 748h3v1h-3zM157 748h2v1h-2zM65 749h2v1h-2zM69 749h2v1h-2zM77 749h2v1h-2zM82 749h1v1h-1zM90 749h11v1h-11zM125 749h3v1h-3zM138 749h2v1h-2zM144 749h3v1h-3zM156 749h1v1h-1zM65 750h2v1h-2zM69 750h2v1h-2zM73 750h1v1h-1zM77 750h1v1h-1zM91 750h6v1h-6zM100 750h4v1h-4zM125 750h3v1h-3zM136 750h4v1h-4zM144 750h3v1h-3zM155 750h2v1h-2zM161 750h1v1h-1zM65 751h2v1h-2zM103 751h3v1h-3zM118 751h1v1h-1zM125 751h4v1h-4zM132 751h8v1h-8zM143 751h3v1h-3zM161 751h1v1h-1zM77 752h4v1h-4zM103 752h3v1h-3zM107 752h2v1h-2zM112 752h2v1h-2zM118 752h2v1h-2zM125 752h3v1h-3zM132 752h8v1h-8zM143 752h3v1h-3zM71 753h1v1h-1zM78 753h4v1h-4zM83 753h3v1h-3zM112 753h3v1h-3zM117 753h5v1h-5zM123 753h5v1h-5zM135 753h5v1h-5zM143 753h3v1h-3zM154 753h1v1h-1zM78 754h4v1h-4zM83 754h3v1h-3zM88 754h1v1h-1zM94 754h1v1h-1zM113 754h9v1h-9zM123 754h5v1h-5zM132 754h2v1h-2zM137 754h2v1h-2zM145 754h1v1h-1zM152 754h1v1h-1zM163 754h2v1h-2zM69 755h1v1h-1zM77 755h3v1h-3zM81 755h1v1h-1zM84 755h3v1h-3zM88 755h1v1h-1zM92 755h3v1h-3zM97 755h1v1h-1zM100 755h2v1h-2zM116 755h2v1h-2zM123 755h3v1h-3zM132 755h2v1h-2zM145 755h2v1h-2zM162 755h2v1h-2zM77 756h3v1h-3zM85 756h3v1h-3zM91 756h5v1h-5zM100 756h2v1h-2zM115 756h3v1h-3zM123 756h3v1h-3zM132 756h2v1h-2zM137 756h1v1h-1zM145 756h2v1h-2zM77 757h3v1h-3zM86 757h2v1h-2zM91 757h6v1h-6zM101 757h1v1h-1zM105 757h1v1h-1zM115 757h5v1h-5zM123 757h2v1h-2zM128 757h2v1h-2zM131 757h3v1h-3zM137 757h4v1h-4zM130 758h10v1h-10z"/>
<path fill="#000" shape-rendering="crispEdges" d="M800 559h1v1h-1zM799 560h1v1h-1zM797 561h1v1h-1zM796 562h1v1h-1zM799 562h3v1h-3zM804 562h1v1h-1zM799 563h2v1h-2zM803 563h2v1h-2zM796 564h3v1h-3zM800 564h1v1h-1zM799 565h2v1h-2zM803 565h1v1h-1zM800 566h4v1h-4zM795 567h1v1h-1zM801 567h3v1h-3zM797 568h3v1h-3zM802 568h1v1h-1zM796 569h1v1h-1zM799 569h2v1h-2zM804 569h2v1h-2zM798 570h2v1h-2zM804 570h2v1h-2zM794 571h1v1h-1zM798 571h1v1h-1zM794 572h4v1h-4zM800 572h5v1h-5zM797 573h1v1h-1zM801 573h4v1h-4zM795 574h1v1h-1zM798 574h1v1h-1zM802 574h4v1h-4zM796 575h2v1h-2zM799 575h7v1h-7zM793 576h1v1h-1zM796 576h2v1h-2zM799 576h1v1h-1zM801 576h3v1h-3zM793 577h6v1h-6zM800 577h1v1h-1zM802 577h1v1h-1zM792 578h2v1h-2zM796 578h3v1h-3zM800 578h1v1h-1zM792 579h2v1h-2zM796 579h2v1h-2zM799 579h2v1h-2zM793 580h5v1h-5zM799 580h2v1h-2zM805 580h1v1h-1zM793 581h8v1h-8zM793 582h4v1h-4zM798 582h3v1h-3zM793 583h7v1h-7zM790 584h1v1h-1zM795 584h1v1h-1zM798 584h2v1h-2zM790 585h1v1h-1zM796 585h2v1h-2zM790 586h2v1h-2zM796 586h2v1h-2zM792 587h2v1h-2zM795 587h3v1h-3zM793 588h1v1h-1zM796 588h1v1h-1zM799 588h2v1h-2zM789 589h1v1h-1zM798 589h1v1h-1zM800 589h1v1h-1zM790 590h1v1h-1zM798 590h1v1h-1zM800 590h1v1h-1zM796 591h6v1h-6zM793 592h1v1h-1zM795 592h5v1h-5zM789 593h1v1h-1zM793 593h7v1h-7zM790 594h5v1h-5zM797 594h2v1h-2zM786 595h1v1h-1zM791 595h5v1h-5zM798 595h2v1h-2zM786 596h2v1h-2zM795 596h1v1h-1zM798 596h2v1h-2zM796 597h2v1h-2zM799 597h1v1h-1zM794 598h7v1h-7zM792 599h2v1h-2zM795 599h1v1h-1zM799 599h1v1h-1zM801 599h1v1h-1zM787 600h1v1h-1zM790 600h3v1h-3zM794 600h2v1h-2zM798 600h4v1h-4zM790 601h3v1h-3zM794 601h5v1h-5zM790 602h9v1h-9zM792 603h1v1h-1zM794 603h1v1h-1zM796 603h3v1h-3zM793 604h6v1h-6zM789 605h3v1h-3zM796 605h3v1h-3zM789 606h3v1h-3zM794 606h3v1h-3zM789 607h2v1h-2zM795 607h1v1h-1zM799 607h1v1h-1zM793 608h1v1h-1zM799 608h1v1h-1zM792 609h1v1h-1zM794 609h1v1h-1zM797 609h3v1h-3zM792 610h1v1h-1zM794 610h5v1h-5zM791 611h5v1h-5zM791 612h4v1h-4zM803 612h1v1h-1zM803 613h1v1h-1zM789 614h2v1h-2zM802 614h2v1h-2zM800 615h4v1h-4zM800 616h1v1h-1zM789 617h2v1h-2zM797 617h7v1h-7zM789 618h1v1h-1zM794 618h6v1h-6zM803 618h1v1h-1zM789 619h1v1h-1zM794 619h1v1h-1zM798 619h2v1h-2zM795 620h1v1h-1zM797 620h1v1h-1zM800 620h1v1h-1zM792 621h3v1h-3zM800 621h1v1h-1zM792 622h4v1h-4zM798 622h2v1h-2zM802 622h1v1h-1zM791 623h1v1h-1zM793 623h4v1h-4zM801 623h1v1h-1zM789 624h3v1h-3zM795 624h3v1h-3zM801 624h2v1h-2zM789 625h3v1h-3zM801 625h2v1h-2zM789 626h2v1h-2zM800 626h1v1h-1zM788 627h1v1h-1zM800 627h2v1h-2zM787 628h2v1h-2zM793 628h2v1h-2zM796 628h1v1h-1zM800 628h2v1h-2zM787 629h1v1h-1zM792 629h1v1h-1zM796 629h2v1h-2zM799 629h2v1h-2zM787 630h1v1h-1zM792 630h1v1h-1zM795 630h1v1h-1zM787 631h1v1h-1zM791 631h2v1h-2zM794 631h2v1h-2zM792 632h2v1h-2zM796 632h2v1h-2zM799 632h3v1h-3zM791 633h1v1h-1zM794 633h2v1h-2zM798 633h4v1h-4zM790 634h1v1h-1zM793 634h1v1h-1zM799 634h3v1h-3zM790 635h1v1h-1zM793 635h1v1h-1zM800 635h1v1h-1zM791 636h1v1h-1zM795 636h2v1h-2zM800 636h1v1h-1zM790 637h2v1h-2zM795 637h3v1h-3zM800 637h2v1h-2zM791 638h2v1h-2zM794 638h1v1h-1zM798 638h4v1h-4zM792 639h7v1h-7zM800 639h1v1h-1zM789 640h2v1h-2zM792 640h2v1h-2zM798 640h2v1h-2zM802 640h1v1h-1zM792 641h4v1h-4zM797 641h1v1h-1zM799 641h1v1h-1zM801 641h1v1h-1zM792 642h2v1h-2zM799 642h1v1h-1zM793 643h1v1h-1zM799 643h1v1h-1zM789 644h4v1h-4zM795 644h4v1h-4zM800 644h1v1h-1zM790 645h3v1h-3zM795 645h2v1h-2zM799 645h2v1h-2zM791 646h1v1h-1zM800 646h3v1h-3zM790 647h2v1h-2zM800 647h1v1h-1zM802 647h1v1h-1zM800 648h1v1h-1zM797 649h2v1h-2zM801 649h2v1h-2zM792 650h2v1h-2zM796 650h3v1h-3zM801 650h5v1h-5zM797 651h2v1h-2zM801 651h3v1h-3zM793 652h1v1h-1zM796 652h1v1h-1zM798 652h2v1h-2zM802 652h2v1h-2zM795 653h1v1h-1zM798 653h2v1h-2zM802 653h2v1h-2zM794 654h5v1h-5zM802 654h2v1h-2zM795 655h4v1h-4zM802 655h3v1h-3zM797 656h6v1h-6zM797 657h4v1h-4zM803 657h2v1h-2zM798 658h1v1h-1zM800 658h1v1h-1zM799 659h2v1h-2zM800 660h1v1h-1zM805 660h1v1h-1z"/>
<path fill="#004263" shape-rendering="crispEdges" d="M797 562h2v1h-2zM797 563h2v1h-2zM801 563h2v1h-2zM801 564h3v1h-3zM801 565h2v1h-2zM797 569h2v1h-2zM795 570h3v1h-3zM795 571h3v1h-3zM796 573h1v1h-1zM796 574h2v1h-2zM799 577h1v1h-1zM799 578h1v1h-1zM798 579h1v1h-1zM798 580h1v1h-1zM796 584h2v1h-2zM790 587h2v1h-2zM790 588h3v1h-3zM790 589h1v1h-1zM799 589h1v1h-1zM799 590h1v1h-1zM794 592h1v1h-1zM795 597h1v1h-1zM798 597h1v1h-1zM794 599h1v1h-1zM800 599h1v1h-1zM793 603h1v1h-1zM794 605h2v1h-2zM793 609h1v1h-1zM793 610h1v1h-1zM801 616h2v1h-2zM795 619h3v1h-3zM798 620h2v1h-2zM798 621h2v1h-2zM802 623h1v1h-1zM801 626h1v1h-1zM795 628h1v1h-1zM793 629h3v1h-3zM793 630h2v1h-2zM794 632h2v1h-2zM792 633h2v1h-2zM791 634h2v1h-2zM791 635h2v1h-2zM801 635h1v1h-1zM790 636h1v1h-1zM801 636h1v1h-1zM798 637h2v1h-2zM799 639h1v1h-1zM801 639h1v1h-1zM794 640h4v1h-4zM800 640h2v1h-2zM796 641h1v1h-1zM800 641h1v1h-1zM799 644h1v1h-1zM790 646h1v1h-1zM801 647h1v1h-1zM801 648h2v1h-2zM792 651h2v1h-2zM797 652h1v1h-1zM796 653h2v1h-2zM799 654h3v1h-3zM799 655h3v1h-3zM803 656h2v1h-2zM799 658h1v1h-1z"/>
<path fill="#5d4f4b" shape-rendering="crispEdges" d="M802 556h1v1h-1zM801 557h3v1h-3zM799 558h6v1h-6zM798 559h2v1h-2zM801 559h5v1h-5zM797 560h2v1h-2zM800 560h6v1h-6zM798 561h8v1h-8zM802 562h2v1h-2zM805 562h1v1h-1zM796 563h1v1h-1zM805 563h1v1h-1zM799 564h1v1h-1zM804 564h2v1h-2zM796 565h3v1h-3zM804 565h2v1h-2zM795 566h5v1h-5zM804 566h2v1h-2zM796 567h5v1h-5zM804 567h2v1h-2zM795 568h2v1h-2zM800 568h2v1h-2zM803 568h3v1h-3zM795 569h1v1h-1zM801 569h3v1h-3zM794 570h1v1h-1zM800 570h4v1h-4zM799 571h7v1h-7zM798 572h2v1h-2zM805 572h1v1h-1zM794 573h2v1h-2zM798 573h3v1h-3zM805 573h1v1h-1zM793 574h2v1h-2zM799 574h3v1h-3zM793 575h3v1h-3zM798 575h1v1h-1zM794 576h2v1h-2zM798 576h1v1h-1zM800 576h1v1h-1zM804 576h2v1h-2zM801 577h1v1h-1zM803 577h3v1h-3zM794 578h2v1h-2zM801 578h5v1h-5zM794 579h2v1h-2zM801 579h5v1h-5zM792 580h1v1h-1zM801 580h4v1h-4zM791 581h2v1h-2zM801 581h5v1h-5zM791 582h2v1h-2zM797 582h1v1h-1zM801 582h5v1h-5zM791 583h2v1h-2zM800 583h2v1h-2zM791 584h4v1h-4zM800 584h2v1h-2zM791 585h5v1h-5zM798 585h4v1h-4zM792 586h4v1h-4zM798 586h4v1h-4zM789 587h1v1h-1zM794 587h1v1h-1zM798 587h4v1h-4zM789 588h1v1h-1zM794 588h2v1h-2zM797 588h2v1h-2zM801 588h1v1h-1zM788 589h1v1h-1zM791 589h7v1h-7zM801 589h1v1h-1zM788 590h2v1h-2zM791 590h7v1h-7zM801 590h1v1h-1zM788 591h8v1h-8zM787 592h6v1h-6zM800 592h2v1h-2zM787 593h2v1h-2zM790 593h3v1h-3zM800 593h2v1h-2zM787 594h3v1h-3zM795 594h2v1h-2zM799 594h3v1h-3zM787 595h4v1h-4zM796 595h2v1h-2zM800 595h2v1h-2zM788 596h7v1h-7zM796 596h2v1h-2zM800 596h2v1h-2zM786 597h9v1h-9zM800 597h2v1h-2zM787 598h7v1h-7zM801 598h1v1h-1zM787 599h5v1h-5zM796 599h3v1h-3zM788 600h2v1h-2zM793 600h1v1h-1zM796 600h2v1h-2zM788 601h2v1h-2zM793 601h1v1h-1zM799 601h3v1h-3zM788 602h2v1h-2zM799 602h3v1h-3zM788 603h4v1h-4zM795 603h1v1h-1zM799 603h3v1h-3zM788 604h5v1h-5zM799 604h4v1h-4zM792 605h2v1h-2zM799 605h4v1h-4zM792 606h2v1h-2zM797 606h6v1h-6zM791 607h4v1h-4zM796 607h3v1h-3zM800 607h3v1h-3zM790 608h3v1h-3zM794 608h5v1h-5zM800 608h3v1h-3zM790 609h2v1h-2zM795 609h2v1h-2zM800 609h3v1h-3zM790 610h2v1h-2zM799 610h4v1h-4zM790 611h1v1h-1zM796 611h8v1h-8zM790 612h1v1h-1zM795 612h8v1h-8zM789 613h14v1h-14zM791 614h11v1h-11zM789 615h11v1h-11zM789 616h11v1h-11zM803 616h1v1h-1zM791 617h6v1h-6zM790 618h4v1h-4zM800 618h3v1h-3zM790 619h4v1h-4zM800 619h3v1h-3zM788 620h7v1h-7zM796 620h1v1h-1zM801 620h2v1h-2zM788 621h4v1h-4zM795 621h3v1h-3zM801 621h2v1h-2zM788 622h4v1h-4zM796 622h2v1h-2zM800 622h2v1h-2zM788 623h3v1h-3zM792 623h1v1h-1zM797 623h4v1h-4zM788 624h1v1h-1zM792 624h3v1h-3zM798 624h3v1h-3zM788 625h1v1h-1zM792 625h9v1h-9zM788 626h1v1h-1zM791 626h9v1h-9zM787 627h1v1h-1zM789 627h11v1h-11zM789 628h4v1h-4zM797 628h3v1h-3zM788 629h4v1h-4zM798 629h1v1h-1zM801 629h1v1h-1zM788 630h4v1h-4zM796 630h6v1h-6zM788 631h3v1h-3zM793 631h1v1h-1zM796 631h6v1h-6zM787 632h5v1h-5zM798 632h1v1h-1zM788 633h3v1h-3zM796 633h2v1h-2zM788 634h2v1h-2zM794 634h5v1h-5zM788 635h2v1h-2zM794 635h6v1h-6zM788 636h2v1h-2zM792 636h3v1h-3zM797 636h3v1h-3zM788 637h2v1h-2zM792 637h3v1h-3zM788 638h3v1h-3zM793 638h1v1h-1zM795 638h3v1h-3zM802 638h1v1h-1zM789 639h3v1h-3zM802 639h1v1h-1zM791 640h1v1h-1zM789 641h3v1h-3zM798 641h1v1h-1zM802 641h1v1h-1zM789 642h3v1h-3zM794 642h5v1h-5zM800 642h3v1h-3zM789 643h4v1h-4zM794 643h5v1h-5zM800 643h3v1h-3zM793 644h2v1h-2zM801 644h2v1h-2zM793 645h2v1h-2zM797 645h2v1h-2zM801 645h2v1h-2zM792 646h8v1h-8zM792 647h8v1h-8zM803 647h1v1h-1zM790 648h10v1h-10zM803 648h2v1h-2zM791 649h6v1h-6zM799 649h2v1h-2zM803 649h3v1h-3zM794 650h2v1h-2zM799 650h2v1h-2zM794 651h3v1h-3zM799 651h2v1h-2zM804 651h2v1h-2zM794 652h2v1h-2zM800 652h2v1h-2zM804 652h2v1h-2zM794 653h1v1h-1zM800 653h2v1h-2zM804 653h2v1h-2zM804 654h2v1h-2zM805 655h1v1h-1zM796 656h1v1h-1zM805 656h1v1h-1zM796 657h1v1h-1zM801 657h2v1h-2zM805 657h1v1h-1zM797 658h1v1h-1zM801 658h5v1h-5zM798 659h1v1h-1zM801 659h5v1h-5zM801 660h4v1h-4zM804 661h2v1h-2z"/>
<!--MAPEND-->
<g id="rings" fill="none" stroke="#ececec" stroke-width="0.9">
<circle cx="407.2" cy="407.2" r="159.8"/><circle cx="407.2" cy="407.2" r="279.7"/><circle cx="407.2" cy="407.2" r="400"/><circle cx="407.2" cy="407.2" r="520.2"/>
<circle cx="407.3" cy="407.3" r="39.8" stroke="#ff0000" stroke-width="1.25"/>
</g>
<g font-family="DejaVu Sans, sans-serif" font-size="11" fill="#f4ee78" text-anchor="middle">
<rect x="399" y="362" width="14" height="10" fill="#5d4f4b"/><text x="405.800" y="371.500">31</text>
<rect x="396" y="242" width="20" height="10" fill="#5d4f4b"/><text x="405.800" y="251.500">125</text>
<rect x="396" y="122" width="20" height="10" fill="#5d4f4b"/><text x="405.800" y="131.500">219</text>
<rect x="396" y="6" width="20" height="6" fill="#5d4f4b"/><text x="405.800" y="11.500">313</text>
</g>
</svg>
</div>
<svg id="legend" style="position:absolute;left:8px;top:757px;" width="247" height="48" viewBox="8 757 247 48"><rect x="9" y="758" width="244" height="45.5" fill="#000"/><rect x="10.500" y="759.500" width="241" height="42.500" fill="#000" stroke="#a8a8a8" stroke-width="1"/><g font-family="DejaVu Sans Condensed, DejaVu Sans, sans-serif" font-size="9.4" fill="#ececec"><text x="13.4" y="771" textLength="34.9" lengthAdjust="spacingAndGlyphs">Symbols</text><text x="53" y="771" textLength="17.4" lengthAdjust="spacingAndGlyphs">-CG</text><text x="78.2" y="771" textLength="13.1" lengthAdjust="spacingAndGlyphs">-IC</text><text x="98.9" y="771" textLength="20.3" lengthAdjust="spacingAndGlyphs">+CG</text><text x="124.4" y="771" textLength="16.4" lengthAdjust="spacingAndGlyphs">+IC</text><text x="153.6" y="771" textLength="89.3" lengthAdjust="spacingAndGlyphs">Strike age color codes</text><text x="13.4" y="783.5" textLength="28.5" lengthAdjust="spacingAndGlyphs">Recent</text><text x="13.4" y="796.5">Old</text><text x="154.3" y="783.5" fill="#f2f200" textLength="15.6" lengthAdjust="spacingAndGlyphs">15+</text><text x="188.5" y="783.5" fill="#f2b800" textLength="15.6" lengthAdjust="spacingAndGlyphs">30+</text><text x="223.3" y="783.5" fill="#f29600" textLength="15.6" lengthAdjust="spacingAndGlyphs">45+</text><text x="154.3" y="796.5" fill="#f27c00" textLength="15.6" lengthAdjust="spacingAndGlyphs">60+</text><text x="188.5" y="796.5" fill="#f25e00" textLength="15.6" lengthAdjust="spacingAndGlyphs">75+</text><text x="223.3" y="796.5" fill="#f23200" textLength="15.6" lengthAdjust="spacingAndGlyphs">90+</text></g><circle cx="60.2" cy="780.5" r="3.6" fill="none" stroke="#00e0ee" stroke-width="1.1"/><path d="M58.2 780.5h4" stroke="#00e0ee" stroke-width="1.1"/><path d="M81.9 780.5h7" stroke="#00e0ee" stroke-width="1.2"/><circle cx="110.2" cy="780.5" r="3.6" fill="none" stroke="#00e0ee" stroke-width="1.1"/><path d="M108.2 780.5h4" stroke="#00e0ee" stroke-width="1.1"/><path d="M110.2 778.5v4" stroke="#00e0ee" stroke-width="1.1"/><path d="M132.1 780.5h7M135.6 777v7" stroke="#00e0ee" stroke-width="1.2"/><circle cx="60.2" cy="793.5" r="3.6" fill="none" stroke="#f2f200" stroke-width="1.1"/><path d="M58.2 793.5h4" stroke="#f2f200" stroke-width="1.1"/><path d="M81.9 793.5h7" stroke="#f2f200" stroke-width="1.2"/><circle cx="110.2" cy="793.5" r="3.6" fill="none" stroke="#f2f200" stroke-width="1.1"/><path d="M108.2 793.5h4" stroke="#f2f200" stroke-width="1.1"/><path d="M110.2 791.5v4" stroke="#f2f200" stroke-width="1.1"/><path d="M132.1 793.5h7M135.6 790v7" stroke="#f2f200" stroke-width="1.2"/></svg>
<div id="copy" style="position:absolute;left:686px;top:792px;width:120px;height:14px;background:#000;font-size:9.15px;line-height:14px;color:#fff;white-space:nowrap;font-family:'DejaVu Sans Condensed','DejaVu Sans',sans-serif;"><span style="position:absolute;left:3px;top:0">©2005 Astrogenic Systems</span></div>

<div class="panel" style="top:8px;height:318px;"></div>
<div class="panel" style="top:333px;height:113px;"></div>
<div class="panel" style="top:453px;height:348px;"></div>

<!-- panel 1 -->
<div class="btn bw" style="left:819px;top:17px;width:58px;height:17px;line-height:16px;background:#4d0000;color:#f0b4b4;font-size:12px;border-color:#c8c8c8;">STRIKE</div>
<div class="btn bw" style="left:883px;top:17px;width:58px;height:17px;line-height:16px;background:#333;color:#a9b4bd;font-size:12px;border-color:#a0a0a0;">NOISE</div>
<div class="btn bw" style="left:994px;top:17px;width:128px;height:17px;line-height:16px;background:#2b2b2b;font-size:12px;border-color:#a0a0a0;"><span class="t" style="left:3px;top:0;line-height:16px;letter-spacing:0.2px;">Bng 158°</span><span class="t" style="right:3px;top:0;line-height:16px;color:#10e410;letter-spacing:0.5px;">337mi</span></div>

<div class="btn" style="left:821px;top:64px;width:82px;font-size:12px;">Strikes/min</div>
<div class="btn" style="left:931px;top:64px;width:82px;font-size:12px;">Close/min</div>
<div class="btn" style="left:1041px;top:64px;width:82px;font-size:12px;">Noises/min</div>
<div class="big" style="left:821px;top:88px;">0</div>
<div class="big" style="left:931px;top:88px;">0</div>
<div class="big" style="left:1041px;top:88px;color:#c4c4c4;">0</div>

<div class="t r" style="left:803px;width:100px;top:131px;letter-spacing:-0.2px;">Total Strikes</div>
<div class="t r" style="left:913px;width:100px;top:131px;letter-spacing:-0.2px;">Total Close</div>
<div class="t r g" style="left:1023px;width:100px;top:131px;letter-spacing:-0.2px;">Total Noises</div>
<div class="t r" style="left:803px;width:100px;top:150px;">31</div>
<div class="t r" style="left:913px;width:100px;top:150px;">0</div>
<div class="t r" style="left:1023px;width:100px;top:150px;">108</div>

<div class="t g" style="left:821px;top:203px;letter-spacing:-0.2px;">Lightning type distribution</div>
<div style="position:absolute;left:821px;top:217px;width:302px;height:1px;background:#9a9a9a;"></div>

<div class="t b" style="left:821px;top:225px;letter-spacing:-0.33px;">Cloud-ground</div>
<div class="t" style="left:912px;top:224px;">+</div>
<div class="bar" style="left:925px;top:227px;"><i style="width:9px;background:#fa0a0a;"></i></div>
<div class="t b" style="left:979px;top:225px;letter-spacing:0.7px;">19%</div>
<div class="t b" style="left:1015px;top:225px;">−</div>
<div class="bar" style="left:1028px;top:227px;"><i style="width:14px;background:#87cefa;"></i></div>
<div class="t b" style="left:1082px;top:225px;letter-spacing:0.7px;">29%</div>
<div class="t b g" style="left:821px;top:249px;">Count</div>
<div class="t b" style="left:925px;top:249px;">6</div>
<div class="t b" style="left:1028px;top:249px;">9</div>

<div class="t b" style="left:821px;top:279px;letter-spacing:-0.2px;">Intracloud</div>
<div class="t" style="left:912px;top:278px;">+</div>
<div class="bar" style="left:925px;top:281px;"><i style="width:8px;background:#f768b2;"></i></div>
<div class="t b" style="left:979px;top:279px;letter-spacing:0.7px;">16%</div>
<div class="t b" style="left:1015px;top:279px;">−</div>
<div class="bar" style="left:1028px;top:281px;"><i style="width:17px;background:#08f408;"></i></div>
<div class="t b" style="left:1082px;top:279px;letter-spacing:0.7px;">35%</div>
<div class="t b g" style="left:821px;top:303px;">Count</div>
<div class="t b" style="left:925px;top:303px;">5</div>
<div class="t b" style="left:1028px;top:303px;">11</div>

<!-- panel 2 -->
<div class="t bw" id="date" style="left:820px;top:337px;font-size:16.7px;line-height:20px;height:20px;color:#10e410;">1/30/2026 10:14:52 PM</div>
<div style="position:absolute;left:821px;top:358px;width:302px;height:1px;background:#9a9a9a;"></div>
<div class="t" style="left:821px;top:376px;">Squelch</div><div class="t" style="left:909px;top:376px;">0</div>
<div class="t" style="left:981px;top:376px;">Upload</div><div class="t g" style="left:1061px;top:376px;">Disabled</div>
<div class="t" style="left:821px;top:396px;">Persistence</div><div class="t" style="left:909px;top:396px;">90 min</div>
<div class="t" style="left:981px;top:396px;">Capture</div><div class="t" style="left:1061px;top:396px;color:#10e410;">Active</div>
<div class="t" style="left:821px;top:416px;">Range</div><div class="t" style="left:909px;top:416px;">313 mi</div>
<div class="t" style="left:981px;top:416px;">Receiver</div><div class="t" style="left:1061px;top:416px;color:#10e410;">Enabled</div>

<!-- panel 3 -->
<div class="t g" style="left:821px;top:463px;">Uptime</div><div class="t" style="left:909px;top:463px;">465:59</div>
<div class="t g" style="left:981px;top:463px;">Peak time</div><div class="t g" style="left:1061px;top:463px;">Plot</div>
<div class="t g" style="left:821px;top:486px;">Peak rate</div><div class="t" style="left:909px;top:486px;">2/min</div>
<div class="t" style="left:981px;top:486px;">8:22 PM</div><div class="t" style="left:1061px;top:486px;">Strike</div>
<div class="t g" style="left:821px;top:516px;letter-spacing:0.1px;">Trend graph</div><div class="t" style="left:908px;top:516px;">60 min</div>
<svg style="position:absolute;left:812px;top:530px;" width="320" height="270" viewBox="812 530 320 270">
<g stroke="#c8c8c8" stroke-width="1" fill="none" shape-rendering="crispEdges">
<path d="M1088.500 542V778M822 777.500H1089"/>
<path d="M1084 542.500h4M1084 620.500h4M1084 699.500h4M1086 581.500h2M1086 659.500h2M1086 738.500h2"/>
<path d="M822.500 774v4M866.500 774v4M911.500 774v4M955.500 774v4M999.500 774v4M1044.500 774v4"/>
</g>
<g font-family="DejaVu Sans, sans-serif" font-size="11" fill="#c4c4c4">
<text x="1092" y="547">30</text><text x="1092" y="625">20</text><text x="1092" y="704">10</text>
<text x="820" y="793">60</text><text x="864" y="793">50</text><text x="908" y="793">40</text><text x="952" y="793">30</text><text x="996" y="793">20</text><text x="1041" y="793">10</text><text x="1088" y="793">0</text><text x="1099.5" y="793">min</text>
</g>
</svg>
</body></html>
